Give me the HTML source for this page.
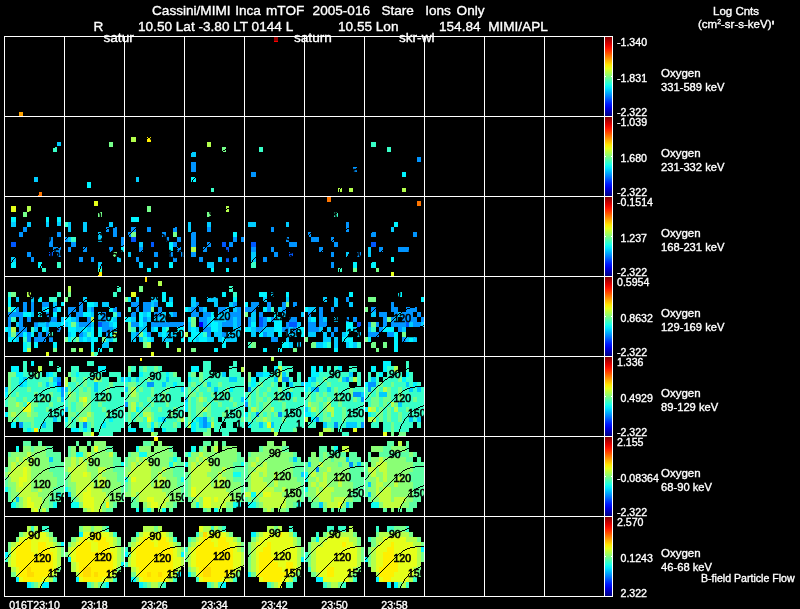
<!DOCTYPE html>
<html><head><meta charset="utf-8"><title>Cassini/MIMI Inca mTOF</title>
<style>
html,body{margin:0;padding:0;background:#000;}
body{width:800px;height:609px;position:relative;overflow:hidden;font-family:"Liberation Sans",sans-serif;color:#fff;}
.t{position:absolute;white-space:pre;line-height:1;-webkit-text-stroke:0.35px #fff;}
.t sup.p{font-size:110%;top:0.12em;font-weight:bold}
.t sup{font-size:60%;line-height:0;vertical-align:baseline;position:relative;top:-0.55em}
svg text{font-family:"Liberation Sans",sans-serif;}
#txt{position:absolute;left:0;top:0;width:800px;height:609px;will-change:transform;}
</style></head><body>
<svg width="800" height="609" viewBox="0 0 800 609" shape-rendering="crispEdges" style="position:absolute;left:0;top:0;will-change:transform"><defs><linearGradient id="jet" x1="0" y1="0" x2="0" y2="1"><stop offset="0.000" stop-color="#800000"/><stop offset="0.050" stop-color="#b30000"/><stop offset="0.100" stop-color="#e50000"/><stop offset="0.150" stop-color="#ff1a00"/><stop offset="0.200" stop-color="#ff4c00"/><stop offset="0.250" stop-color="#ff8000"/><stop offset="0.300" stop-color="#ffb300"/><stop offset="0.350" stop-color="#ffe500"/><stop offset="0.400" stop-color="#e5ff1a"/><stop offset="0.450" stop-color="#b3ff4c"/><stop offset="0.500" stop-color="#80ff80"/><stop offset="0.550" stop-color="#4cffb3"/><stop offset="0.600" stop-color="#1affe5"/><stop offset="0.650" stop-color="#00e5ff"/><stop offset="0.700" stop-color="#00b3ff"/><stop offset="0.750" stop-color="#0080ff"/><stop offset="0.800" stop-color="#004cff"/><stop offset="0.850" stop-color="#001aff"/><stop offset="0.900" stop-color="#0000e5"/><stop offset="0.950" stop-color="#0000b3"/><stop offset="1.000" stop-color="#000080"/></linearGradient></defs>
<rect x="145" y="277" width="2" height="5" fill="#ffdb00"/>
<rect x="140" y="358" width="2" height="3" fill="#fff000"/>
<rect x="274" y="41" width="4" height="1" fill="#fa0000"/>
<rect x="327" y="201" width="4" height="1" fill="#ff7500"/>
<rect x="19" y="112" width="4" height="4" fill="#ffa300"/>
<rect x="274" y="36" width="4" height="5" fill="#940000"/>
<rect x="57" y="142" width="4" height="5" fill="#00ccff"/>
<rect x="53" y="147" width="4" height="5" fill="#38ffc7"/>
<rect x="34" y="177" width="4" height="5" fill="#00ccff"/>
<rect x="38" y="192" width="4" height="4" fill="#ff7500"/>
<rect x="109" y="142" width="4" height="5" fill="#75ff8a"/>
<rect x="87" y="182" width="4" height="6" fill="#00f5ff"/>
<rect x="131" y="137" width="5" height="5" fill="#b3ff4c"/>
<rect x="147" y="137" width="4" height="5" fill="#fff000"/>
<rect x="136" y="177" width="3" height="5" fill="#00ccff"/>
<rect x="207" y="142" width="4" height="5" fill="#b3ff4c"/>
<rect x="222" y="147" width="4" height="5" fill="#75ff8a"/>
<rect x="191" y="152" width="5" height="5" fill="#00ccff"/>
<rect x="191" y="162" width="5" height="5" fill="#0094ff"/>
<rect x="191" y="167" width="5" height="5" fill="#0094ff"/>
<rect x="191" y="177" width="5" height="5" fill="#00f5ff"/>
<rect x="211" y="188" width="3" height="4" fill="#38ffc7"/>
<rect x="259" y="147" width="4" height="5" fill="#38ffc7"/>
<rect x="251" y="172" width="5" height="5" fill="#0094ff"/>
<rect x="353" y="167" width="4" height="5" fill="#0094ff"/>
<rect x="338" y="188" width="4" height="4" fill="#b3ff4c"/>
<rect x="349" y="188" width="4" height="4" fill="#b3ff4c"/>
<rect x="371" y="142" width="5" height="5" fill="#38ffc7"/>
<rect x="387" y="147" width="4" height="5" fill="#38ffc7"/>
<rect x="417" y="157" width="4" height="5" fill="#0094ff"/>
<rect x="402" y="172" width="4" height="5" fill="#00f5ff"/>
<rect x="402" y="188" width="4" height="4" fill="#b3ff4c"/>
<rect x="11" y="206" width="5" height="6" fill="#e5ff1a"/>
<rect x="27" y="206" width="4" height="6" fill="#b3ff4c"/>
<rect x="23" y="212" width="4" height="5" fill="#75ff8a"/>
<rect x="11" y="217" width="5" height="5" fill="#00f5ff"/>
<rect x="46" y="217" width="3" height="5" fill="#00f5ff"/>
<rect x="57" y="217" width="4" height="5" fill="#00f5ff"/>
<rect x="11" y="222" width="5" height="5" fill="#00ccff"/>
<rect x="27" y="222" width="4" height="5" fill="#00ccff"/>
<rect x="46" y="222" width="3" height="5" fill="#00ccff"/>
<rect x="57" y="222" width="4" height="5" fill="#00ccff"/>
<rect x="23" y="227" width="4" height="5" fill="#0094ff"/>
<rect x="19" y="232" width="4" height="5" fill="#0094ff"/>
<rect x="57" y="232" width="4" height="5" fill="#0094ff"/>
<rect x="49" y="237" width="4" height="5" fill="#0094ff"/>
<rect x="11" y="242" width="5" height="5" fill="#0057ff"/>
<rect x="49" y="242" width="4" height="5" fill="#0094ff"/>
<rect x="53" y="247" width="8" height="5" fill="#0094ff"/>
<rect x="27" y="252" width="4" height="5" fill="#0094ff"/>
<rect x="49" y="252" width="4" height="5" fill="#0057ff"/>
<rect x="57" y="252" width="4" height="5" fill="#0094ff"/>
<rect x="11" y="257" width="5" height="5" fill="#00ccff"/>
<rect x="31" y="257" width="3" height="5" fill="#0094ff"/>
<rect x="11" y="262" width="5" height="6" fill="#00f5ff"/>
<rect x="38" y="262" width="4" height="6" fill="#00f5ff"/>
<rect x="57" y="262" width="4" height="6" fill="#38ffc7"/>
<rect x="42" y="268" width="4" height="4" fill="#38ffc7"/>
<rect x="94" y="201" width="4" height="5" fill="#e5ff1a"/>
<rect x="98" y="212" width="4" height="5" fill="#75ff8a"/>
<rect x="64" y="222" width="4" height="5" fill="#38ffc7"/>
<rect x="68" y="222" width="3" height="5" fill="#00ccff"/>
<rect x="83" y="222" width="4" height="5" fill="#00ccff"/>
<rect x="109" y="222" width="4" height="5" fill="#00ccff"/>
<rect x="68" y="227" width="3" height="5" fill="#00ccff"/>
<rect x="83" y="227" width="4" height="5" fill="#00ccff"/>
<rect x="106" y="227" width="3" height="5" fill="#0094ff"/>
<rect x="113" y="227" width="4" height="5" fill="#0094ff"/>
<rect x="98" y="232" width="4" height="5" fill="#00ccff"/>
<rect x="113" y="232" width="4" height="5" fill="#0094ff"/>
<rect x="64" y="237" width="4" height="5" fill="#0094ff"/>
<rect x="68" y="237" width="3" height="5" fill="#00ccff"/>
<rect x="71" y="237" width="5" height="5" fill="#38ffc7"/>
<rect x="98" y="237" width="4" height="5" fill="#00ccff"/>
<rect x="121" y="237" width="3" height="5" fill="#0094ff"/>
<rect x="71" y="242" width="5" height="5" fill="#0094ff"/>
<rect x="121" y="242" width="3" height="5" fill="#0094ff"/>
<rect x="68" y="247" width="3" height="5" fill="#0094ff"/>
<rect x="83" y="247" width="4" height="5" fill="#0094ff"/>
<rect x="109" y="247" width="4" height="5" fill="#0094ff"/>
<rect x="121" y="247" width="3" height="5" fill="#00f5ff"/>
<rect x="113" y="252" width="4" height="5" fill="#75ff8a"/>
<rect x="79" y="257" width="4" height="5" fill="#0094ff"/>
<rect x="91" y="257" width="3" height="5" fill="#0094ff"/>
<rect x="117" y="257" width="4" height="5" fill="#00ccff"/>
<rect x="98" y="262" width="4" height="6" fill="#00ccff"/>
<rect x="98" y="268" width="4" height="4" fill="#38ffc7"/>
<rect x="98" y="272" width="4" height="4" fill="#fff000"/>
<rect x="147" y="206" width="4" height="6" fill="#75ff8a"/>
<rect x="131" y="217" width="8" height="5" fill="#00f5ff"/>
<rect x="131" y="227" width="5" height="5" fill="#0094ff"/>
<rect x="147" y="227" width="4" height="5" fill="#0094ff"/>
<rect x="173" y="227" width="4" height="5" fill="#0094ff"/>
<rect x="128" y="232" width="3" height="5" fill="#0094ff"/>
<rect x="131" y="232" width="5" height="5" fill="#75ff8a"/>
<rect x="162" y="232" width="4" height="5" fill="#0094ff"/>
<rect x="173" y="232" width="4" height="5" fill="#75ff8a"/>
<rect x="131" y="237" width="5" height="5" fill="#0057ff"/>
<rect x="166" y="237" width="3" height="5" fill="#0094ff"/>
<rect x="177" y="237" width="4" height="5" fill="#0094ff"/>
<rect x="139" y="242" width="4" height="5" fill="#00ccff"/>
<rect x="151" y="242" width="3" height="5" fill="#0057ff"/>
<rect x="169" y="242" width="4" height="5" fill="#00f5ff"/>
<rect x="173" y="242" width="4" height="5" fill="#0094ff"/>
<rect x="139" y="247" width="4" height="5" fill="#0094ff"/>
<rect x="169" y="247" width="4" height="5" fill="#00f5ff"/>
<rect x="177" y="247" width="4" height="5" fill="#0094ff"/>
<rect x="128" y="252" width="3" height="5" fill="#00ccff"/>
<rect x="154" y="252" width="4" height="5" fill="#0094ff"/>
<rect x="169" y="252" width="4" height="5" fill="#0094ff"/>
<rect x="181" y="252" width="3" height="5" fill="#0094ff"/>
<rect x="136" y="257" width="3" height="5" fill="#0094ff"/>
<rect x="173" y="257" width="4" height="5" fill="#0094ff"/>
<rect x="139" y="262" width="4" height="6" fill="#00ccff"/>
<rect x="154" y="262" width="4" height="6" fill="#00ccff"/>
<rect x="169" y="262" width="4" height="6" fill="#00f5ff"/>
<rect x="147" y="268" width="4" height="4" fill="#00f5ff"/>
<rect x="226" y="206" width="3" height="6" fill="#b3ff4c"/>
<rect x="207" y="212" width="4" height="5" fill="#75ff8a"/>
<rect x="188" y="222" width="3" height="5" fill="#00ccff"/>
<rect x="207" y="222" width="4" height="5" fill="#00ccff"/>
<rect x="188" y="227" width="3" height="5" fill="#00ccff"/>
<rect x="207" y="227" width="4" height="5" fill="#0094ff"/>
<rect x="191" y="232" width="5" height="5" fill="#0094ff"/>
<rect x="233" y="232" width="4" height="5" fill="#00f5ff"/>
<rect x="191" y="237" width="5" height="5" fill="#0094ff"/>
<rect x="233" y="237" width="4" height="5" fill="#0094ff"/>
<rect x="241" y="237" width="3" height="5" fill="#0094ff"/>
<rect x="191" y="242" width="5" height="5" fill="#0094ff"/>
<rect x="207" y="242" width="4" height="5" fill="#0094ff"/>
<rect x="222" y="242" width="4" height="5" fill="#0057ff"/>
<rect x="229" y="242" width="4" height="5" fill="#0094ff"/>
<rect x="191" y="247" width="5" height="5" fill="#b3ff4c"/>
<rect x="203" y="247" width="4" height="5" fill="#0094ff"/>
<rect x="226" y="247" width="3" height="5" fill="#0057ff"/>
<rect x="191" y="252" width="5" height="5" fill="#0094ff"/>
<rect x="199" y="257" width="4" height="5" fill="#0094ff"/>
<rect x="218" y="257" width="4" height="5" fill="#00ccff"/>
<rect x="226" y="257" width="3" height="5" fill="#0057ff"/>
<rect x="233" y="257" width="4" height="5" fill="#0094ff"/>
<rect x="207" y="262" width="7" height="6" fill="#00ccff"/>
<rect x="211" y="268" width="3" height="4" fill="#00f5ff"/>
<rect x="226" y="268" width="3" height="4" fill="#00f5ff"/>
<rect x="248" y="222" width="8" height="5" fill="#00ccff"/>
<rect x="286" y="222" width="3" height="5" fill="#00ccff"/>
<rect x="271" y="227" width="3" height="5" fill="#0094ff"/>
<rect x="286" y="237" width="3" height="5" fill="#0094ff"/>
<rect x="251" y="242" width="5" height="5" fill="#0057ff"/>
<rect x="289" y="242" width="8" height="5" fill="#0094ff"/>
<rect x="251" y="247" width="5" height="5" fill="#0094ff"/>
<rect x="271" y="247" width="3" height="5" fill="#0094ff"/>
<rect x="251" y="252" width="5" height="5" fill="#00ccff"/>
<rect x="274" y="252" width="4" height="5" fill="#0094ff"/>
<rect x="289" y="252" width="4" height="5" fill="#0057ff"/>
<rect x="251" y="257" width="5" height="5" fill="#00ccff"/>
<rect x="263" y="257" width="4" height="5" fill="#0094ff"/>
<rect x="251" y="262" width="5" height="6" fill="#38ffc7"/>
<rect x="327" y="196" width="4" height="5" fill="#ff7500"/>
<rect x="334" y="212" width="4" height="5" fill="#38ffc7"/>
<rect x="346" y="222" width="3" height="5" fill="#0094ff"/>
<rect x="346" y="227" width="3" height="5" fill="#0094ff"/>
<rect x="308" y="232" width="3" height="5" fill="#0094ff"/>
<rect x="311" y="237" width="8" height="5" fill="#0094ff"/>
<rect x="331" y="237" width="3" height="5" fill="#0094ff"/>
<rect x="334" y="242" width="4" height="5" fill="#0094ff"/>
<rect x="319" y="247" width="4" height="5" fill="#0094ff"/>
<rect x="331" y="252" width="3" height="5" fill="#0094ff"/>
<rect x="346" y="252" width="3" height="5" fill="#00ccff"/>
<rect x="357" y="252" width="4" height="5" fill="#0094ff"/>
<rect x="331" y="262" width="3" height="6" fill="#0094ff"/>
<rect x="353" y="262" width="4" height="6" fill="#00f5ff"/>
<rect x="338" y="268" width="4" height="4" fill="#38ffc7"/>
<rect x="353" y="268" width="4" height="4" fill="#75ff8a"/>
<rect x="417" y="201" width="4" height="5" fill="#ff7500"/>
<rect x="394" y="222" width="4" height="5" fill="#00f5ff"/>
<rect x="391" y="227" width="3" height="5" fill="#00ccff"/>
<rect x="371" y="232" width="5" height="5" fill="#0094ff"/>
<rect x="413" y="232" width="4" height="5" fill="#0094ff"/>
<rect x="371" y="242" width="5" height="5" fill="#0057ff"/>
<rect x="368" y="247" width="3" height="5" fill="#00ccff"/>
<rect x="379" y="247" width="4" height="5" fill="#0094ff"/>
<rect x="398" y="247" width="11" height="5" fill="#0094ff"/>
<rect x="368" y="252" width="3" height="5" fill="#00ccff"/>
<rect x="391" y="257" width="3" height="5" fill="#00f5ff"/>
<rect x="371" y="262" width="5" height="6" fill="#00f5ff"/>
<rect x="376" y="268" width="3" height="4" fill="#75ff8a"/>
<rect x="391" y="272" width="3" height="4" fill="#e5ff1a"/>
<rect x="8" y="292" width="3" height="5" fill="#38ffc7"/>
<rect x="11" y="292" width="5" height="5" fill="#75ff8a"/>
<rect x="27" y="292" width="4" height="5" fill="#b3ff4c"/>
<rect x="57" y="292" width="4" height="5" fill="#38ffc7"/>
<rect x="8" y="297" width="3" height="5" fill="#00f5ff"/>
<rect x="16" y="297" width="3" height="5" fill="#00ccff"/>
<rect x="31" y="297" width="3" height="5" fill="#00ccff"/>
<rect x="38" y="297" width="4" height="5" fill="#00f5ff"/>
<rect x="49" y="297" width="8" height="5" fill="#38ffc7"/>
<rect x="8" y="302" width="3" height="5" fill="#00f5ff"/>
<rect x="23" y="302" width="4" height="5" fill="#0094ff"/>
<rect x="31" y="302" width="3" height="5" fill="#0094ff"/>
<rect x="42" y="302" width="7" height="5" fill="#0094ff"/>
<rect x="53" y="302" width="4" height="5" fill="#00ccff"/>
<rect x="61" y="302" width="3" height="5" fill="#00f5ff"/>
<rect x="8" y="307" width="3" height="5" fill="#75ff8a"/>
<rect x="11" y="307" width="5" height="5" fill="#00f5ff"/>
<rect x="16" y="307" width="3" height="5" fill="#0094ff"/>
<rect x="23" y="307" width="4" height="5" fill="#0094ff"/>
<rect x="31" y="307" width="3" height="5" fill="#0094ff"/>
<rect x="42" y="307" width="4" height="5" fill="#00ccff"/>
<rect x="46" y="307" width="3" height="5" fill="#00f5ff"/>
<rect x="53" y="307" width="4" height="5" fill="#0094ff"/>
<rect x="57" y="307" width="4" height="5" fill="#00f5ff"/>
<rect x="8" y="312" width="15" height="5" fill="#0094ff"/>
<rect x="23" y="312" width="8" height="5" fill="#00f5ff"/>
<rect x="31" y="312" width="3" height="5" fill="#00ccff"/>
<rect x="38" y="312" width="4" height="5" fill="#00f5ff"/>
<rect x="46" y="312" width="3" height="5" fill="#0094ff"/>
<rect x="53" y="312" width="4" height="5" fill="#00f5ff"/>
<rect x="8" y="317" width="3" height="5" fill="#0094ff"/>
<rect x="11" y="317" width="5" height="5" fill="#38ffc7"/>
<rect x="19" y="317" width="4" height="5" fill="#0094ff"/>
<rect x="27" y="317" width="4" height="5" fill="#0094ff"/>
<rect x="49" y="317" width="8" height="5" fill="#0094ff"/>
<rect x="61" y="317" width="3" height="5" fill="#00ccff"/>
<rect x="8" y="322" width="3" height="5" fill="#0094ff"/>
<rect x="16" y="322" width="3" height="5" fill="#00ccff"/>
<rect x="19" y="322" width="4" height="5" fill="#0094ff"/>
<rect x="34" y="322" width="4" height="5" fill="#0094ff"/>
<rect x="38" y="322" width="8" height="5" fill="#00ccff"/>
<rect x="46" y="322" width="3" height="5" fill="#0094ff"/>
<rect x="49" y="322" width="12" height="5" fill="#00ccff"/>
<rect x="61" y="322" width="3" height="5" fill="#00f5ff"/>
<rect x="4" y="327" width="4" height="5" fill="#00f5ff"/>
<rect x="8" y="327" width="3" height="5" fill="#00ccff"/>
<rect x="11" y="327" width="5" height="5" fill="#b3ff4c"/>
<rect x="19" y="327" width="8" height="5" fill="#0094ff"/>
<rect x="31" y="327" width="3" height="5" fill="#38ffc7"/>
<rect x="34" y="327" width="4" height="5" fill="#00ccff"/>
<rect x="42" y="327" width="4" height="5" fill="#00f5ff"/>
<rect x="46" y="327" width="3" height="5" fill="#00ccff"/>
<rect x="57" y="327" width="4" height="5" fill="#0094ff"/>
<rect x="8" y="332" width="3" height="5" fill="#00ccff"/>
<rect x="11" y="332" width="5" height="5" fill="#75ff8a"/>
<rect x="16" y="332" width="7" height="5" fill="#0094ff"/>
<rect x="23" y="332" width="4" height="5" fill="#00f5ff"/>
<rect x="27" y="332" width="4" height="5" fill="#0094ff"/>
<rect x="31" y="332" width="3" height="5" fill="#00f5ff"/>
<rect x="38" y="332" width="4" height="5" fill="#0094ff"/>
<rect x="46" y="332" width="3" height="5" fill="#0094ff"/>
<rect x="49" y="332" width="4" height="5" fill="#38ffc7"/>
<rect x="8" y="337" width="8" height="5" fill="#00f5ff"/>
<rect x="16" y="337" width="3" height="5" fill="#00ccff"/>
<rect x="23" y="337" width="4" height="5" fill="#38ffc7"/>
<rect x="27" y="337" width="4" height="5" fill="#0094ff"/>
<rect x="34" y="337" width="12" height="5" fill="#0094ff"/>
<rect x="49" y="337" width="4" height="5" fill="#0094ff"/>
<rect x="23" y="342" width="4" height="6" fill="#00f5ff"/>
<rect x="27" y="342" width="4" height="6" fill="#38ffc7"/>
<rect x="34" y="342" width="4" height="6" fill="#00f5ff"/>
<rect x="53" y="342" width="4" height="6" fill="#00f5ff"/>
<rect x="23" y="348" width="4" height="4" fill="#00f5ff"/>
<rect x="27" y="348" width="4" height="4" fill="#b3ff4c"/>
<rect x="53" y="348" width="4" height="4" fill="#75ff8a"/>
<rect x="46" y="352" width="3" height="4" fill="#e5ff1a"/>
<rect x="68" y="286" width="3" height="6" fill="#b3ff4c"/>
<rect x="117" y="286" width="4" height="6" fill="#38ffc7"/>
<rect x="68" y="292" width="3" height="5" fill="#75ff8a"/>
<rect x="113" y="292" width="4" height="5" fill="#38ffc7"/>
<rect x="64" y="297" width="4" height="5" fill="#75ff8a"/>
<rect x="83" y="297" width="4" height="5" fill="#00ccff"/>
<rect x="79" y="302" width="4" height="5" fill="#0094ff"/>
<rect x="87" y="302" width="7" height="5" fill="#00f5ff"/>
<rect x="94" y="302" width="4" height="5" fill="#00ccff"/>
<rect x="102" y="302" width="7" height="5" fill="#00ccff"/>
<rect x="68" y="307" width="8" height="5" fill="#0094ff"/>
<rect x="79" y="307" width="4" height="5" fill="#0094ff"/>
<rect x="87" y="307" width="4" height="5" fill="#00ccff"/>
<rect x="91" y="307" width="3" height="5" fill="#0094ff"/>
<rect x="109" y="307" width="4" height="5" fill="#00f5ff"/>
<rect x="113" y="307" width="4" height="5" fill="#0094ff"/>
<rect x="68" y="312" width="3" height="5" fill="#0094ff"/>
<rect x="76" y="312" width="7" height="5" fill="#0094ff"/>
<rect x="83" y="312" width="8" height="5" fill="#00f5ff"/>
<rect x="91" y="312" width="3" height="5" fill="#00ccff"/>
<rect x="98" y="312" width="4" height="5" fill="#00ccff"/>
<rect x="102" y="312" width="4" height="5" fill="#0094ff"/>
<rect x="113" y="312" width="4" height="5" fill="#38ffc7"/>
<rect x="117" y="312" width="4" height="5" fill="#0094ff"/>
<rect x="64" y="317" width="7" height="5" fill="#00f5ff"/>
<rect x="71" y="317" width="5" height="5" fill="#00ccff"/>
<rect x="76" y="317" width="3" height="5" fill="#0094ff"/>
<rect x="87" y="317" width="4" height="5" fill="#0094ff"/>
<rect x="91" y="317" width="3" height="5" fill="#b3ff4c"/>
<rect x="98" y="317" width="4" height="5" fill="#00ccff"/>
<rect x="102" y="317" width="4" height="5" fill="#0094ff"/>
<rect x="106" y="317" width="3" height="5" fill="#00ccff"/>
<rect x="109" y="317" width="4" height="5" fill="#00f5ff"/>
<rect x="113" y="317" width="4" height="5" fill="#00ccff"/>
<rect x="64" y="322" width="4" height="5" fill="#00ccff"/>
<rect x="68" y="322" width="3" height="5" fill="#00f5ff"/>
<rect x="71" y="322" width="5" height="5" fill="#75ff8a"/>
<rect x="76" y="322" width="3" height="5" fill="#00ccff"/>
<rect x="79" y="322" width="12" height="5" fill="#0094ff"/>
<rect x="91" y="322" width="3" height="5" fill="#00ccff"/>
<rect x="98" y="322" width="4" height="5" fill="#0057ff"/>
<rect x="102" y="322" width="7" height="5" fill="#0094ff"/>
<rect x="109" y="322" width="4" height="5" fill="#00ccff"/>
<rect x="113" y="322" width="4" height="5" fill="#00f5ff"/>
<rect x="68" y="327" width="8" height="5" fill="#00f5ff"/>
<rect x="76" y="327" width="7" height="5" fill="#00ccff"/>
<rect x="83" y="327" width="4" height="5" fill="#00f5ff"/>
<rect x="87" y="327" width="4" height="5" fill="#00ccff"/>
<rect x="91" y="327" width="3" height="5" fill="#00f5ff"/>
<rect x="98" y="327" width="4" height="5" fill="#00f5ff"/>
<rect x="102" y="327" width="11" height="5" fill="#0094ff"/>
<rect x="113" y="327" width="4" height="5" fill="#00ccff"/>
<rect x="68" y="332" width="3" height="5" fill="#00ccff"/>
<rect x="71" y="332" width="5" height="5" fill="#00f5ff"/>
<rect x="79" y="332" width="4" height="5" fill="#0094ff"/>
<rect x="83" y="332" width="4" height="5" fill="#00ccff"/>
<rect x="87" y="332" width="4" height="5" fill="#38ffc7"/>
<rect x="91" y="332" width="3" height="5" fill="#00f5ff"/>
<rect x="98" y="332" width="4" height="5" fill="#00f5ff"/>
<rect x="106" y="332" width="3" height="5" fill="#0094ff"/>
<rect x="109" y="332" width="4" height="5" fill="#00f5ff"/>
<rect x="113" y="332" width="4" height="5" fill="#b3ff4c"/>
<rect x="64" y="337" width="4" height="5" fill="#75ff8a"/>
<rect x="68" y="337" width="3" height="5" fill="#00f5ff"/>
<rect x="71" y="337" width="5" height="5" fill="#38ffc7"/>
<rect x="76" y="337" width="3" height="5" fill="#75ff8a"/>
<rect x="79" y="337" width="4" height="5" fill="#00ccff"/>
<rect x="83" y="337" width="4" height="5" fill="#00f5ff"/>
<rect x="87" y="337" width="4" height="5" fill="#00ccff"/>
<rect x="91" y="337" width="7" height="5" fill="#00f5ff"/>
<rect x="102" y="337" width="4" height="5" fill="#75ff8a"/>
<rect x="106" y="337" width="3" height="5" fill="#00f5ff"/>
<rect x="109" y="337" width="4" height="5" fill="#00ccff"/>
<rect x="113" y="337" width="4" height="5" fill="#38ffc7"/>
<rect x="91" y="342" width="3" height="6" fill="#00f5ff"/>
<rect x="102" y="342" width="7" height="6" fill="#00ccff"/>
<rect x="71" y="348" width="5" height="4" fill="#75ff8a"/>
<rect x="79" y="348" width="4" height="4" fill="#b3ff4c"/>
<rect x="91" y="348" width="3" height="4" fill="#00f5ff"/>
<rect x="98" y="348" width="4" height="4" fill="#00f5ff"/>
<rect x="109" y="348" width="4" height="4" fill="#38ffc7"/>
<rect x="91" y="352" width="3" height="4" fill="#b3ff4c"/>
<rect x="94" y="352" width="4" height="4" fill="#38ffc7"/>
<rect x="158" y="281" width="4" height="5" fill="#b3ff4c"/>
<rect x="139" y="286" width="4" height="6" fill="#75ff8a"/>
<rect x="131" y="292" width="5" height="5" fill="#e5ff1a"/>
<rect x="162" y="292" width="4" height="5" fill="#00f5ff"/>
<rect x="124" y="297" width="4" height="5" fill="#75ff8a"/>
<rect x="128" y="297" width="3" height="5" fill="#00f5ff"/>
<rect x="136" y="297" width="3" height="5" fill="#00ccff"/>
<rect x="151" y="297" width="7" height="5" fill="#00ccff"/>
<rect x="162" y="297" width="4" height="5" fill="#00f5ff"/>
<rect x="169" y="297" width="4" height="5" fill="#00ccff"/>
<rect x="131" y="302" width="8" height="5" fill="#0094ff"/>
<rect x="143" y="302" width="8" height="5" fill="#0094ff"/>
<rect x="151" y="302" width="3" height="5" fill="#00ccff"/>
<rect x="154" y="302" width="4" height="5" fill="#0094ff"/>
<rect x="166" y="302" width="7" height="5" fill="#00f5ff"/>
<rect x="128" y="307" width="3" height="5" fill="#38ffc7"/>
<rect x="136" y="307" width="3" height="5" fill="#0094ff"/>
<rect x="143" y="307" width="8" height="5" fill="#0094ff"/>
<rect x="151" y="307" width="3" height="5" fill="#75ff8a"/>
<rect x="158" y="307" width="4" height="5" fill="#0094ff"/>
<rect x="131" y="312" width="5" height="5" fill="#0094ff"/>
<rect x="139" y="312" width="4" height="5" fill="#00f5ff"/>
<rect x="143" y="312" width="4" height="5" fill="#00ccff"/>
<rect x="147" y="312" width="4" height="5" fill="#00f5ff"/>
<rect x="154" y="312" width="8" height="5" fill="#0094ff"/>
<rect x="162" y="312" width="4" height="5" fill="#00ccff"/>
<rect x="169" y="312" width="4" height="5" fill="#00ccff"/>
<rect x="173" y="312" width="4" height="5" fill="#0094ff"/>
<rect x="124" y="317" width="7" height="5" fill="#00f5ff"/>
<rect x="131" y="317" width="5" height="5" fill="#00ccff"/>
<rect x="139" y="317" width="4" height="5" fill="#00f5ff"/>
<rect x="143" y="317" width="4" height="5" fill="#0094ff"/>
<rect x="147" y="317" width="4" height="5" fill="#00ccff"/>
<rect x="154" y="317" width="12" height="5" fill="#00ccff"/>
<rect x="128" y="322" width="3" height="5" fill="#75ff8a"/>
<rect x="131" y="322" width="8" height="5" fill="#0094ff"/>
<rect x="139" y="322" width="4" height="5" fill="#00f5ff"/>
<rect x="143" y="322" width="4" height="5" fill="#00ccff"/>
<rect x="151" y="322" width="33" height="5" fill="#0094ff"/>
<rect x="128" y="327" width="3" height="5" fill="#75ff8a"/>
<rect x="131" y="327" width="5" height="5" fill="#38ffc7"/>
<rect x="139" y="327" width="8" height="5" fill="#00ccff"/>
<rect x="151" y="327" width="3" height="5" fill="#00ccff"/>
<rect x="154" y="327" width="4" height="5" fill="#00f5ff"/>
<rect x="162" y="327" width="4" height="5" fill="#00f5ff"/>
<rect x="166" y="327" width="3" height="5" fill="#38ffc7"/>
<rect x="177" y="327" width="7" height="5" fill="#00f5ff"/>
<rect x="131" y="332" width="5" height="5" fill="#00ccff"/>
<rect x="136" y="332" width="3" height="5" fill="#0094ff"/>
<rect x="139" y="332" width="4" height="5" fill="#75ff8a"/>
<rect x="143" y="332" width="4" height="5" fill="#00f5ff"/>
<rect x="147" y="332" width="4" height="5" fill="#0094ff"/>
<rect x="158" y="332" width="4" height="5" fill="#00ccff"/>
<rect x="162" y="332" width="4" height="5" fill="#00f5ff"/>
<rect x="166" y="332" width="11" height="5" fill="#00ccff"/>
<rect x="181" y="332" width="3" height="5" fill="#00f5ff"/>
<rect x="131" y="337" width="5" height="5" fill="#00ccff"/>
<rect x="139" y="337" width="4" height="5" fill="#00ccff"/>
<rect x="143" y="337" width="4" height="5" fill="#38ffc7"/>
<rect x="147" y="337" width="4" height="5" fill="#00f5ff"/>
<rect x="151" y="337" width="3" height="5" fill="#00ccff"/>
<rect x="162" y="337" width="11" height="5" fill="#00ccff"/>
<rect x="181" y="337" width="3" height="5" fill="#00f5ff"/>
<rect x="143" y="342" width="4" height="6" fill="#75ff8a"/>
<rect x="147" y="342" width="4" height="6" fill="#b3ff4c"/>
<rect x="166" y="342" width="3" height="6" fill="#38ffc7"/>
<rect x="177" y="348" width="4" height="4" fill="#b3ff4c"/>
<rect x="151" y="352" width="3" height="4" fill="#e5ff1a"/>
<rect x="229" y="286" width="4" height="6" fill="#38ffc7"/>
<rect x="222" y="292" width="4" height="5" fill="#00f5ff"/>
<rect x="233" y="292" width="4" height="5" fill="#38ffc7"/>
<rect x="191" y="297" width="5" height="5" fill="#00ccff"/>
<rect x="207" y="297" width="11" height="5" fill="#00ccff"/>
<rect x="233" y="297" width="4" height="5" fill="#00f5ff"/>
<rect x="191" y="302" width="5" height="5" fill="#00ccff"/>
<rect x="196" y="302" width="3" height="5" fill="#0094ff"/>
<rect x="214" y="302" width="4" height="5" fill="#00ccff"/>
<rect x="229" y="302" width="4" height="5" fill="#00ccff"/>
<rect x="233" y="302" width="4" height="5" fill="#0094ff"/>
<rect x="184" y="307" width="4" height="5" fill="#00f5ff"/>
<rect x="188" y="307" width="3" height="5" fill="#00ccff"/>
<rect x="191" y="307" width="5" height="5" fill="#0094ff"/>
<rect x="199" y="307" width="4" height="5" fill="#0094ff"/>
<rect x="203" y="307" width="4" height="5" fill="#00ccff"/>
<rect x="218" y="307" width="8" height="5" fill="#0094ff"/>
<rect x="226" y="307" width="3" height="5" fill="#00ccff"/>
<rect x="233" y="307" width="4" height="5" fill="#00ccff"/>
<rect x="237" y="307" width="4" height="5" fill="#0094ff"/>
<rect x="191" y="312" width="8" height="5" fill="#0094ff"/>
<rect x="203" y="312" width="8" height="5" fill="#0094ff"/>
<rect x="211" y="312" width="3" height="5" fill="#00f5ff"/>
<rect x="218" y="312" width="11" height="5" fill="#00ccff"/>
<rect x="229" y="312" width="12" height="5" fill="#0094ff"/>
<rect x="188" y="317" width="3" height="5" fill="#00f5ff"/>
<rect x="191" y="317" width="5" height="5" fill="#75ff8a"/>
<rect x="199" y="317" width="8" height="5" fill="#0094ff"/>
<rect x="207" y="317" width="4" height="5" fill="#00ccff"/>
<rect x="211" y="317" width="3" height="5" fill="#00f5ff"/>
<rect x="214" y="317" width="12" height="5" fill="#00ccff"/>
<rect x="226" y="317" width="7" height="5" fill="#0094ff"/>
<rect x="233" y="317" width="4" height="5" fill="#00ccff"/>
<rect x="237" y="317" width="4" height="5" fill="#0094ff"/>
<rect x="188" y="322" width="3" height="5" fill="#00ccff"/>
<rect x="191" y="322" width="5" height="5" fill="#75ff8a"/>
<rect x="199" y="322" width="4" height="5" fill="#0000fa"/>
<rect x="203" y="322" width="4" height="5" fill="#0094ff"/>
<rect x="207" y="322" width="4" height="5" fill="#00ccff"/>
<rect x="211" y="322" width="7" height="5" fill="#00f5ff"/>
<rect x="218" y="322" width="4" height="5" fill="#00ccff"/>
<rect x="222" y="322" width="11" height="5" fill="#0094ff"/>
<rect x="233" y="322" width="4" height="5" fill="#00ccff"/>
<rect x="237" y="322" width="4" height="5" fill="#0094ff"/>
<rect x="188" y="327" width="3" height="5" fill="#00ccff"/>
<rect x="191" y="327" width="5" height="5" fill="#00f5ff"/>
<rect x="196" y="327" width="3" height="5" fill="#00ccff"/>
<rect x="203" y="327" width="8" height="5" fill="#0094ff"/>
<rect x="211" y="327" width="7" height="5" fill="#00f5ff"/>
<rect x="218" y="327" width="4" height="5" fill="#00ccff"/>
<rect x="233" y="327" width="8" height="5" fill="#00ccff"/>
<rect x="184" y="332" width="4" height="5" fill="#b3ff4c"/>
<rect x="191" y="332" width="12" height="5" fill="#00f5ff"/>
<rect x="203" y="332" width="4" height="5" fill="#38ffc7"/>
<rect x="207" y="332" width="4" height="5" fill="#0094ff"/>
<rect x="214" y="332" width="8" height="5" fill="#00ccff"/>
<rect x="222" y="332" width="4" height="5" fill="#0094ff"/>
<rect x="226" y="332" width="15" height="5" fill="#00ccff"/>
<rect x="188" y="337" width="8" height="5" fill="#00f5ff"/>
<rect x="196" y="337" width="3" height="5" fill="#00ccff"/>
<rect x="199" y="337" width="8" height="5" fill="#00f5ff"/>
<rect x="207" y="337" width="7" height="5" fill="#00ccff"/>
<rect x="218" y="337" width="4" height="5" fill="#00ccff"/>
<rect x="222" y="337" width="4" height="5" fill="#00f5ff"/>
<rect x="226" y="337" width="11" height="5" fill="#00ccff"/>
<rect x="222" y="342" width="4" height="6" fill="#00f5ff"/>
<rect x="191" y="348" width="5" height="4" fill="#75ff8a"/>
<rect x="214" y="348" width="4" height="4" fill="#00f5ff"/>
<rect x="259" y="292" width="8" height="5" fill="#00f5ff"/>
<rect x="271" y="292" width="3" height="5" fill="#00ccff"/>
<rect x="286" y="292" width="3" height="5" fill="#00f5ff"/>
<rect x="263" y="297" width="4" height="5" fill="#00ccff"/>
<rect x="286" y="297" width="3" height="5" fill="#00ccff"/>
<rect x="244" y="302" width="4" height="5" fill="#00f5ff"/>
<rect x="251" y="302" width="8" height="5" fill="#0094ff"/>
<rect x="267" y="302" width="4" height="5" fill="#0094ff"/>
<rect x="282" y="302" width="4" height="5" fill="#0094ff"/>
<rect x="286" y="302" width="3" height="5" fill="#75ff8a"/>
<rect x="293" y="302" width="4" height="5" fill="#0094ff"/>
<rect x="244" y="307" width="12" height="5" fill="#0094ff"/>
<rect x="263" y="307" width="4" height="5" fill="#00f5ff"/>
<rect x="267" y="307" width="4" height="5" fill="#0094ff"/>
<rect x="271" y="307" width="3" height="5" fill="#38ffc7"/>
<rect x="278" y="307" width="4" height="5" fill="#00ccff"/>
<rect x="282" y="307" width="4" height="5" fill="#0094ff"/>
<rect x="244" y="312" width="4" height="5" fill="#75ff8a"/>
<rect x="251" y="312" width="5" height="5" fill="#00ccff"/>
<rect x="259" y="312" width="4" height="5" fill="#0094ff"/>
<rect x="274" y="312" width="4" height="5" fill="#00f5ff"/>
<rect x="282" y="312" width="4" height="5" fill="#00ccff"/>
<rect x="301" y="312" width="3" height="5" fill="#00ccff"/>
<rect x="248" y="317" width="3" height="5" fill="#0094ff"/>
<rect x="251" y="317" width="5" height="5" fill="#00ccff"/>
<rect x="259" y="317" width="4" height="5" fill="#0057ff"/>
<rect x="263" y="317" width="4" height="5" fill="#0094ff"/>
<rect x="267" y="317" width="4" height="5" fill="#00f5ff"/>
<rect x="271" y="317" width="3" height="5" fill="#0094ff"/>
<rect x="274" y="317" width="8" height="5" fill="#00f5ff"/>
<rect x="289" y="317" width="8" height="5" fill="#0094ff"/>
<rect x="248" y="322" width="3" height="5" fill="#0094ff"/>
<rect x="251" y="322" width="5" height="5" fill="#00f5ff"/>
<rect x="259" y="322" width="4" height="5" fill="#0057ff"/>
<rect x="263" y="322" width="4" height="5" fill="#0094ff"/>
<rect x="274" y="322" width="8" height="5" fill="#00f5ff"/>
<rect x="286" y="322" width="3" height="5" fill="#0094ff"/>
<rect x="289" y="322" width="8" height="5" fill="#0057ff"/>
<rect x="297" y="322" width="4" height="5" fill="#00ccff"/>
<rect x="244" y="327" width="7" height="5" fill="#00f5ff"/>
<rect x="251" y="327" width="5" height="5" fill="#00ccff"/>
<rect x="256" y="327" width="7" height="5" fill="#0094ff"/>
<rect x="263" y="327" width="11" height="5" fill="#00ccff"/>
<rect x="274" y="327" width="8" height="5" fill="#00f5ff"/>
<rect x="282" y="327" width="7" height="5" fill="#0094ff"/>
<rect x="289" y="327" width="4" height="5" fill="#00ccff"/>
<rect x="293" y="327" width="4" height="5" fill="#0094ff"/>
<rect x="297" y="327" width="7" height="5" fill="#00f5ff"/>
<rect x="251" y="332" width="5" height="5" fill="#00ccff"/>
<rect x="259" y="332" width="4" height="5" fill="#00f5ff"/>
<rect x="263" y="332" width="4" height="5" fill="#0094ff"/>
<rect x="267" y="332" width="7" height="5" fill="#00ccff"/>
<rect x="278" y="332" width="4" height="5" fill="#00f5ff"/>
<rect x="286" y="332" width="11" height="5" fill="#00ccff"/>
<rect x="301" y="332" width="3" height="5" fill="#00f5ff"/>
<rect x="271" y="337" width="7" height="5" fill="#0094ff"/>
<rect x="286" y="337" width="3" height="5" fill="#00ccff"/>
<rect x="248" y="342" width="3" height="6" fill="#38ffc7"/>
<rect x="251" y="342" width="5" height="6" fill="#75ff8a"/>
<rect x="282" y="342" width="7" height="6" fill="#00f5ff"/>
<rect x="289" y="342" width="4" height="6" fill="#00ccff"/>
<rect x="297" y="342" width="4" height="6" fill="#00ccff"/>
<rect x="263" y="348" width="4" height="4" fill="#00f5ff"/>
<rect x="278" y="348" width="4" height="4" fill="#00f5ff"/>
<rect x="293" y="348" width="4" height="4" fill="#75ff8a"/>
<rect x="349" y="292" width="4" height="5" fill="#00f5ff"/>
<rect x="323" y="297" width="4" height="5" fill="#00ccff"/>
<rect x="334" y="297" width="4" height="5" fill="#00ccff"/>
<rect x="346" y="297" width="3" height="5" fill="#0094ff"/>
<rect x="334" y="302" width="4" height="5" fill="#00ccff"/>
<rect x="349" y="302" width="4" height="5" fill="#00ccff"/>
<rect x="304" y="307" width="4" height="5" fill="#00f5ff"/>
<rect x="308" y="307" width="8" height="5" fill="#00ccff"/>
<rect x="319" y="307" width="4" height="5" fill="#0094ff"/>
<rect x="331" y="307" width="3" height="5" fill="#0094ff"/>
<rect x="308" y="312" width="3" height="5" fill="#0094ff"/>
<rect x="319" y="312" width="4" height="5" fill="#0094ff"/>
<rect x="308" y="317" width="3" height="5" fill="#00ccff"/>
<rect x="311" y="317" width="5" height="5" fill="#00f5ff"/>
<rect x="319" y="317" width="4" height="5" fill="#0094ff"/>
<rect x="323" y="317" width="4" height="5" fill="#00ccff"/>
<rect x="334" y="317" width="4" height="5" fill="#00ccff"/>
<rect x="346" y="317" width="3" height="5" fill="#0094ff"/>
<rect x="353" y="317" width="4" height="5" fill="#0094ff"/>
<rect x="308" y="322" width="8" height="5" fill="#0094ff"/>
<rect x="319" y="322" width="8" height="5" fill="#0094ff"/>
<rect x="346" y="322" width="7" height="5" fill="#00f5ff"/>
<rect x="357" y="322" width="4" height="5" fill="#0057ff"/>
<rect x="308" y="327" width="11" height="5" fill="#0094ff"/>
<rect x="319" y="327" width="4" height="5" fill="#00ccff"/>
<rect x="327" y="327" width="4" height="5" fill="#00ccff"/>
<rect x="334" y="327" width="4" height="5" fill="#0094ff"/>
<rect x="346" y="327" width="7" height="5" fill="#00f5ff"/>
<rect x="353" y="327" width="4" height="5" fill="#00ccff"/>
<rect x="308" y="332" width="8" height="5" fill="#00ccff"/>
<rect x="323" y="332" width="4" height="5" fill="#00ccff"/>
<rect x="331" y="332" width="3" height="5" fill="#0094ff"/>
<rect x="342" y="332" width="4" height="5" fill="#00ccff"/>
<rect x="346" y="332" width="3" height="5" fill="#00f5ff"/>
<rect x="357" y="332" width="4" height="5" fill="#00ccff"/>
<rect x="304" y="337" width="4" height="5" fill="#75ff8a"/>
<rect x="323" y="337" width="8" height="5" fill="#00ccff"/>
<rect x="334" y="337" width="4" height="5" fill="#00ccff"/>
<rect x="342" y="337" width="11" height="5" fill="#00f5ff"/>
<rect x="311" y="342" width="5" height="6" fill="#75ff8a"/>
<rect x="316" y="342" width="7" height="6" fill="#00ccff"/>
<rect x="323" y="342" width="4" height="6" fill="#00f5ff"/>
<rect x="327" y="342" width="4" height="6" fill="#38ffc7"/>
<rect x="334" y="342" width="4" height="6" fill="#00ccff"/>
<rect x="346" y="342" width="3" height="6" fill="#00ccff"/>
<rect x="349" y="342" width="4" height="6" fill="#00f5ff"/>
<rect x="353" y="342" width="4" height="6" fill="#00ccff"/>
<rect x="357" y="342" width="4" height="6" fill="#38ffc7"/>
<rect x="334" y="348" width="4" height="4" fill="#00f5ff"/>
<rect x="398" y="292" width="4" height="5" fill="#00f5ff"/>
<rect x="368" y="297" width="8" height="5" fill="#75ff8a"/>
<rect x="421" y="297" width="3" height="5" fill="#00f5ff"/>
<rect x="391" y="302" width="3" height="5" fill="#0094ff"/>
<rect x="364" y="307" width="4" height="5" fill="#75ff8a"/>
<rect x="371" y="307" width="5" height="5" fill="#0094ff"/>
<rect x="391" y="307" width="7" height="5" fill="#0094ff"/>
<rect x="406" y="307" width="11" height="5" fill="#0094ff"/>
<rect x="371" y="312" width="5" height="5" fill="#00ccff"/>
<rect x="379" y="312" width="8" height="5" fill="#0094ff"/>
<rect x="394" y="312" width="4" height="5" fill="#0094ff"/>
<rect x="398" y="312" width="4" height="5" fill="#00ccff"/>
<rect x="402" y="312" width="11" height="5" fill="#0094ff"/>
<rect x="417" y="312" width="4" height="5" fill="#0094ff"/>
<rect x="383" y="317" width="4" height="5" fill="#0094ff"/>
<rect x="387" y="317" width="4" height="5" fill="#75ff8a"/>
<rect x="391" y="317" width="3" height="5" fill="#0094ff"/>
<rect x="394" y="317" width="4" height="5" fill="#00ccff"/>
<rect x="402" y="317" width="15" height="5" fill="#0094ff"/>
<rect x="421" y="317" width="3" height="5" fill="#0094ff"/>
<rect x="368" y="322" width="3" height="5" fill="#0094ff"/>
<rect x="371" y="322" width="5" height="5" fill="#75ff8a"/>
<rect x="376" y="322" width="3" height="5" fill="#0094ff"/>
<rect x="383" y="322" width="4" height="5" fill="#0094ff"/>
<rect x="391" y="322" width="15" height="5" fill="#0094ff"/>
<rect x="406" y="322" width="3" height="5" fill="#0057ff"/>
<rect x="409" y="322" width="4" height="5" fill="#00ccff"/>
<rect x="413" y="322" width="8" height="5" fill="#0094ff"/>
<rect x="421" y="322" width="3" height="5" fill="#00ccff"/>
<rect x="368" y="327" width="3" height="5" fill="#00ccff"/>
<rect x="371" y="327" width="5" height="5" fill="#38ffc7"/>
<rect x="379" y="327" width="4" height="5" fill="#0094ff"/>
<rect x="383" y="327" width="11" height="5" fill="#00f5ff"/>
<rect x="398" y="327" width="4" height="5" fill="#0094ff"/>
<rect x="402" y="327" width="4" height="5" fill="#00ccff"/>
<rect x="368" y="332" width="11" height="5" fill="#0094ff"/>
<rect x="387" y="332" width="7" height="5" fill="#0094ff"/>
<rect x="394" y="332" width="4" height="5" fill="#00f5ff"/>
<rect x="402" y="332" width="4" height="5" fill="#75ff8a"/>
<rect x="364" y="337" width="4" height="5" fill="#75ff8a"/>
<rect x="368" y="337" width="3" height="5" fill="#00f5ff"/>
<rect x="394" y="337" width="4" height="5" fill="#00f5ff"/>
<rect x="402" y="337" width="4" height="5" fill="#0094ff"/>
<rect x="406" y="337" width="3" height="5" fill="#00ccff"/>
<rect x="409" y="337" width="4" height="5" fill="#00f5ff"/>
<rect x="413" y="337" width="4" height="5" fill="#00ccff"/>
<rect x="371" y="342" width="5" height="6" fill="#75ff8a"/>
<rect x="383" y="342" width="4" height="6" fill="#75ff8a"/>
<rect x="394" y="342" width="4" height="6" fill="#00f5ff"/>
<rect x="376" y="348" width="3" height="4" fill="#75ff8a"/>
<rect x="394" y="348" width="4" height="4" fill="#00f5ff"/>
<rect x="23" y="361" width="4" height="5" fill="#38ffc7"/>
<rect x="31" y="361" width="3" height="5" fill="#00f5ff"/>
<rect x="49" y="361" width="4" height="5" fill="#38ffc7"/>
<rect x="11" y="366" width="8" height="6" fill="#00f5ff"/>
<rect x="23" y="366" width="4" height="6" fill="#38ffc7"/>
<rect x="38" y="366" width="4" height="6" fill="#b3ff4c"/>
<rect x="57" y="366" width="4" height="6" fill="#38ffc7"/>
<rect x="8" y="372" width="8" height="5" fill="#75ff8a"/>
<rect x="16" y="372" width="7" height="5" fill="#00f5ff"/>
<rect x="23" y="372" width="11" height="5" fill="#38ffc7"/>
<rect x="34" y="372" width="4" height="5" fill="#75ff8a"/>
<rect x="38" y="372" width="4" height="5" fill="#38ffc7"/>
<rect x="46" y="372" width="3" height="5" fill="#00ccff"/>
<rect x="49" y="372" width="4" height="5" fill="#00f5ff"/>
<rect x="53" y="372" width="4" height="5" fill="#38ffc7"/>
<rect x="8" y="377" width="3" height="5" fill="#75ff8a"/>
<rect x="11" y="377" width="8" height="5" fill="#38ffc7"/>
<rect x="19" y="377" width="4" height="5" fill="#00f5ff"/>
<rect x="23" y="377" width="4" height="5" fill="#00ccff"/>
<rect x="27" y="377" width="22" height="5" fill="#38ffc7"/>
<rect x="49" y="377" width="4" height="5" fill="#75ff8a"/>
<rect x="53" y="377" width="4" height="5" fill="#00ccff"/>
<rect x="57" y="377" width="4" height="5" fill="#0094ff"/>
<rect x="8" y="382" width="3" height="5" fill="#75ff8a"/>
<rect x="11" y="382" width="8" height="5" fill="#38ffc7"/>
<rect x="19" y="382" width="4" height="5" fill="#00ccff"/>
<rect x="23" y="382" width="4" height="5" fill="#00f5ff"/>
<rect x="27" y="382" width="11" height="5" fill="#38ffc7"/>
<rect x="38" y="382" width="4" height="5" fill="#75ff8a"/>
<rect x="42" y="382" width="4" height="5" fill="#38ffc7"/>
<rect x="46" y="382" width="3" height="5" fill="#00ccff"/>
<rect x="49" y="382" width="4" height="5" fill="#38ffc7"/>
<rect x="53" y="382" width="4" height="5" fill="#00f5ff"/>
<rect x="57" y="382" width="4" height="5" fill="#0057ff"/>
<rect x="4" y="387" width="4" height="5" fill="#00ccff"/>
<rect x="8" y="387" width="3" height="5" fill="#75ff8a"/>
<rect x="11" y="387" width="16" height="5" fill="#38ffc7"/>
<rect x="27" y="387" width="4" height="5" fill="#75ff8a"/>
<rect x="31" y="387" width="26" height="5" fill="#38ffc7"/>
<rect x="57" y="387" width="4" height="5" fill="#00f5ff"/>
<rect x="61" y="387" width="3" height="5" fill="#0094ff"/>
<rect x="4" y="392" width="4" height="5" fill="#00f5ff"/>
<rect x="8" y="392" width="3" height="5" fill="#75ff8a"/>
<rect x="11" y="392" width="5" height="5" fill="#38ffc7"/>
<rect x="16" y="392" width="3" height="5" fill="#75ff8a"/>
<rect x="19" y="392" width="15" height="5" fill="#38ffc7"/>
<rect x="34" y="392" width="4" height="5" fill="#75ff8a"/>
<rect x="38" y="392" width="11" height="5" fill="#38ffc7"/>
<rect x="49" y="392" width="4" height="5" fill="#75ff8a"/>
<rect x="53" y="392" width="8" height="5" fill="#38ffc7"/>
<rect x="61" y="392" width="3" height="5" fill="#0094ff"/>
<rect x="4" y="397" width="4" height="5" fill="#38ffc7"/>
<rect x="8" y="397" width="8" height="5" fill="#75ff8a"/>
<rect x="16" y="397" width="7" height="5" fill="#38ffc7"/>
<rect x="23" y="397" width="4" height="5" fill="#75ff8a"/>
<rect x="27" y="397" width="15" height="5" fill="#38ffc7"/>
<rect x="42" y="397" width="4" height="5" fill="#75ff8a"/>
<rect x="46" y="397" width="11" height="5" fill="#38ffc7"/>
<rect x="57" y="397" width="4" height="5" fill="#75ff8a"/>
<rect x="61" y="397" width="3" height="5" fill="#00ccff"/>
<rect x="4" y="402" width="4" height="5" fill="#38ffc7"/>
<rect x="8" y="402" width="8" height="5" fill="#75ff8a"/>
<rect x="16" y="402" width="3" height="5" fill="#b3ff4c"/>
<rect x="19" y="402" width="4" height="5" fill="#75ff8a"/>
<rect x="23" y="402" width="4" height="5" fill="#38ffc7"/>
<rect x="27" y="402" width="4" height="5" fill="#e5ff1a"/>
<rect x="31" y="402" width="7" height="5" fill="#75ff8a"/>
<rect x="38" y="402" width="11" height="5" fill="#38ffc7"/>
<rect x="49" y="402" width="4" height="5" fill="#75ff8a"/>
<rect x="53" y="402" width="11" height="5" fill="#38ffc7"/>
<rect x="8" y="407" width="15" height="5" fill="#75ff8a"/>
<rect x="23" y="407" width="8" height="5" fill="#e5ff1a"/>
<rect x="31" y="407" width="3" height="5" fill="#75ff8a"/>
<rect x="34" y="407" width="12" height="5" fill="#38ffc7"/>
<rect x="46" y="407" width="3" height="5" fill="#75ff8a"/>
<rect x="49" y="407" width="15" height="5" fill="#38ffc7"/>
<rect x="4" y="412" width="4" height="5" fill="#00f5ff"/>
<rect x="8" y="412" width="3" height="5" fill="#75ff8a"/>
<rect x="11" y="412" width="5" height="5" fill="#b3ff4c"/>
<rect x="16" y="412" width="11" height="5" fill="#75ff8a"/>
<rect x="27" y="412" width="4" height="5" fill="#b3ff4c"/>
<rect x="31" y="412" width="7" height="5" fill="#75ff8a"/>
<rect x="38" y="412" width="23" height="5" fill="#38ffc7"/>
<rect x="61" y="412" width="3" height="5" fill="#00f5ff"/>
<rect x="8" y="417" width="8" height="5" fill="#75ff8a"/>
<rect x="16" y="417" width="3" height="5" fill="#38ffc7"/>
<rect x="19" y="417" width="15" height="5" fill="#75ff8a"/>
<rect x="34" y="417" width="19" height="5" fill="#38ffc7"/>
<rect x="53" y="417" width="4" height="5" fill="#00ccff"/>
<rect x="57" y="417" width="4" height="5" fill="#38ffc7"/>
<rect x="11" y="422" width="5" height="6" fill="#00f5ff"/>
<rect x="19" y="422" width="4" height="6" fill="#0094ff"/>
<rect x="23" y="422" width="8" height="6" fill="#38ffc7"/>
<rect x="31" y="422" width="3" height="6" fill="#75ff8a"/>
<rect x="34" y="422" width="8" height="6" fill="#38ffc7"/>
<rect x="42" y="422" width="4" height="6" fill="#00ccff"/>
<rect x="46" y="422" width="7" height="6" fill="#38ffc7"/>
<rect x="23" y="428" width="4" height="4" fill="#38ffc7"/>
<rect x="27" y="428" width="4" height="4" fill="#00f5ff"/>
<rect x="31" y="428" width="3" height="4" fill="#38ffc7"/>
<rect x="34" y="428" width="4" height="4" fill="#fff000"/>
<rect x="38" y="428" width="15" height="4" fill="#38ffc7"/>
<rect x="87" y="361" width="7" height="5" fill="#38ffc7"/>
<rect x="71" y="366" width="8" height="6" fill="#38ffc7"/>
<rect x="98" y="366" width="8" height="6" fill="#00f5ff"/>
<rect x="68" y="372" width="3" height="5" fill="#75ff8a"/>
<rect x="71" y="372" width="5" height="5" fill="#38ffc7"/>
<rect x="76" y="372" width="3" height="5" fill="#00f5ff"/>
<rect x="79" y="372" width="23" height="5" fill="#38ffc7"/>
<rect x="109" y="372" width="12" height="5" fill="#38ffc7"/>
<rect x="64" y="377" width="4" height="5" fill="#b3ff4c"/>
<rect x="71" y="377" width="5" height="5" fill="#75ff8a"/>
<rect x="76" y="377" width="7" height="5" fill="#38ffc7"/>
<rect x="83" y="377" width="4" height="5" fill="#75ff8a"/>
<rect x="87" y="377" width="7" height="5" fill="#38ffc7"/>
<rect x="94" y="377" width="4" height="5" fill="#b3ff4c"/>
<rect x="98" y="377" width="4" height="5" fill="#75ff8a"/>
<rect x="102" y="377" width="7" height="5" fill="#38ffc7"/>
<rect x="117" y="377" width="4" height="5" fill="#38ffc7"/>
<rect x="121" y="377" width="3" height="5" fill="#00ccff"/>
<rect x="64" y="382" width="4" height="5" fill="#b3ff4c"/>
<rect x="68" y="382" width="8" height="5" fill="#38ffc7"/>
<rect x="76" y="382" width="3" height="5" fill="#75ff8a"/>
<rect x="79" y="382" width="4" height="5" fill="#38ffc7"/>
<rect x="83" y="382" width="4" height="5" fill="#75ff8a"/>
<rect x="87" y="382" width="7" height="5" fill="#38ffc7"/>
<rect x="94" y="382" width="4" height="5" fill="#00ccff"/>
<rect x="98" y="382" width="11" height="5" fill="#38ffc7"/>
<rect x="109" y="382" width="4" height="5" fill="#75ff8a"/>
<rect x="113" y="382" width="11" height="5" fill="#38ffc7"/>
<rect x="64" y="387" width="4" height="5" fill="#00ccff"/>
<rect x="68" y="387" width="3" height="5" fill="#75ff8a"/>
<rect x="71" y="387" width="8" height="5" fill="#38ffc7"/>
<rect x="79" y="387" width="4" height="5" fill="#75ff8a"/>
<rect x="83" y="387" width="4" height="5" fill="#38ffc7"/>
<rect x="87" y="387" width="4" height="5" fill="#75ff8a"/>
<rect x="91" y="387" width="3" height="5" fill="#38ffc7"/>
<rect x="94" y="387" width="4" height="5" fill="#00ccff"/>
<rect x="98" y="387" width="8" height="5" fill="#38ffc7"/>
<rect x="106" y="387" width="3" height="5" fill="#75ff8a"/>
<rect x="109" y="387" width="15" height="5" fill="#38ffc7"/>
<rect x="64" y="392" width="4" height="5" fill="#38ffc7"/>
<rect x="68" y="392" width="3" height="5" fill="#b3ff4c"/>
<rect x="71" y="392" width="5" height="5" fill="#75ff8a"/>
<rect x="76" y="392" width="3" height="5" fill="#38ffc7"/>
<rect x="79" y="392" width="12" height="5" fill="#75ff8a"/>
<rect x="91" y="392" width="15" height="5" fill="#38ffc7"/>
<rect x="106" y="392" width="3" height="5" fill="#75ff8a"/>
<rect x="109" y="392" width="12" height="5" fill="#38ffc7"/>
<rect x="64" y="397" width="4" height="5" fill="#38ffc7"/>
<rect x="68" y="397" width="8" height="5" fill="#75ff8a"/>
<rect x="76" y="397" width="3" height="5" fill="#38ffc7"/>
<rect x="79" y="397" width="4" height="5" fill="#b3ff4c"/>
<rect x="83" y="397" width="4" height="5" fill="#e5ff1a"/>
<rect x="87" y="397" width="4" height="5" fill="#75ff8a"/>
<rect x="91" y="397" width="11" height="5" fill="#38ffc7"/>
<rect x="102" y="397" width="4" height="5" fill="#75ff8a"/>
<rect x="106" y="397" width="18" height="5" fill="#38ffc7"/>
<rect x="64" y="402" width="4" height="5" fill="#38ffc7"/>
<rect x="68" y="402" width="3" height="5" fill="#75ff8a"/>
<rect x="71" y="402" width="5" height="5" fill="#38ffc7"/>
<rect x="76" y="402" width="7" height="5" fill="#75ff8a"/>
<rect x="83" y="402" width="4" height="5" fill="#b3ff4c"/>
<rect x="87" y="402" width="4" height="5" fill="#75ff8a"/>
<rect x="91" y="402" width="7" height="5" fill="#38ffc7"/>
<rect x="98" y="402" width="4" height="5" fill="#75ff8a"/>
<rect x="102" y="402" width="22" height="5" fill="#38ffc7"/>
<rect x="64" y="407" width="4" height="5" fill="#00ccff"/>
<rect x="68" y="407" width="3" height="5" fill="#75ff8a"/>
<rect x="71" y="407" width="5" height="5" fill="#38ffc7"/>
<rect x="76" y="407" width="15" height="5" fill="#75ff8a"/>
<rect x="91" y="407" width="11" height="5" fill="#38ffc7"/>
<rect x="102" y="407" width="4" height="5" fill="#75ff8a"/>
<rect x="106" y="407" width="18" height="5" fill="#38ffc7"/>
<rect x="68" y="412" width="8" height="5" fill="#75ff8a"/>
<rect x="76" y="412" width="3" height="5" fill="#38ffc7"/>
<rect x="79" y="412" width="8" height="5" fill="#75ff8a"/>
<rect x="87" y="412" width="4" height="5" fill="#b3ff4c"/>
<rect x="91" y="412" width="3" height="5" fill="#75ff8a"/>
<rect x="94" y="412" width="12" height="5" fill="#38ffc7"/>
<rect x="106" y="412" width="3" height="5" fill="#75ff8a"/>
<rect x="109" y="412" width="15" height="5" fill="#38ffc7"/>
<rect x="64" y="417" width="4" height="5" fill="#00f5ff"/>
<rect x="68" y="417" width="3" height="5" fill="#75ff8a"/>
<rect x="71" y="417" width="5" height="5" fill="#38ffc7"/>
<rect x="76" y="417" width="3" height="5" fill="#75ff8a"/>
<rect x="79" y="417" width="4" height="5" fill="#b3ff4c"/>
<rect x="83" y="417" width="4" height="5" fill="#e5ff1a"/>
<rect x="87" y="417" width="7" height="5" fill="#75ff8a"/>
<rect x="94" y="417" width="15" height="5" fill="#38ffc7"/>
<rect x="109" y="417" width="4" height="5" fill="#00f5ff"/>
<rect x="113" y="417" width="11" height="5" fill="#38ffc7"/>
<rect x="64" y="422" width="4" height="6" fill="#38ffc7"/>
<rect x="68" y="422" width="3" height="6" fill="#75ff8a"/>
<rect x="71" y="422" width="5" height="6" fill="#38ffc7"/>
<rect x="79" y="422" width="4" height="6" fill="#38ffc7"/>
<rect x="83" y="422" width="4" height="6" fill="#0094ff"/>
<rect x="87" y="422" width="4" height="6" fill="#38ffc7"/>
<rect x="91" y="422" width="3" height="6" fill="#75ff8a"/>
<rect x="94" y="422" width="8" height="6" fill="#38ffc7"/>
<rect x="102" y="422" width="4" height="6" fill="#00f5ff"/>
<rect x="106" y="422" width="18" height="6" fill="#38ffc7"/>
<rect x="71" y="428" width="8" height="4" fill="#00f5ff"/>
<rect x="79" y="428" width="4" height="4" fill="#38ffc7"/>
<rect x="83" y="428" width="4" height="4" fill="#00f5ff"/>
<rect x="87" y="428" width="4" height="4" fill="#38ffc7"/>
<rect x="94" y="428" width="27" height="4" fill="#38ffc7"/>
<rect x="83" y="432" width="8" height="4" fill="#75ff8a"/>
<rect x="91" y="432" width="3" height="4" fill="#e5ff1a"/>
<rect x="98" y="432" width="15" height="4" fill="#38ffc7"/>
<rect x="128" y="366" width="3" height="6" fill="#75ff8a"/>
<rect x="131" y="366" width="5" height="6" fill="#38ffc7"/>
<rect x="139" y="366" width="4" height="6" fill="#38ffc7"/>
<rect x="143" y="366" width="4" height="6" fill="#75ff8a"/>
<rect x="147" y="366" width="7" height="6" fill="#38ffc7"/>
<rect x="154" y="366" width="4" height="6" fill="#75ff8a"/>
<rect x="158" y="366" width="4" height="6" fill="#38ffc7"/>
<rect x="128" y="372" width="3" height="5" fill="#38ffc7"/>
<rect x="139" y="372" width="4" height="5" fill="#00f5ff"/>
<rect x="143" y="372" width="23" height="5" fill="#38ffc7"/>
<rect x="166" y="372" width="3" height="5" fill="#00f5ff"/>
<rect x="169" y="372" width="4" height="5" fill="#38ffc7"/>
<rect x="173" y="372" width="4" height="5" fill="#75ff8a"/>
<rect x="124" y="377" width="4" height="5" fill="#00f5ff"/>
<rect x="128" y="377" width="3" height="5" fill="#00ccff"/>
<rect x="131" y="377" width="5" height="5" fill="#38ffc7"/>
<rect x="136" y="377" width="3" height="5" fill="#00ccff"/>
<rect x="139" y="377" width="8" height="5" fill="#38ffc7"/>
<rect x="147" y="377" width="4" height="5" fill="#75ff8a"/>
<rect x="151" y="377" width="15" height="5" fill="#38ffc7"/>
<rect x="166" y="377" width="3" height="5" fill="#00ccff"/>
<rect x="169" y="377" width="12" height="5" fill="#38ffc7"/>
<rect x="124" y="382" width="4" height="5" fill="#38ffc7"/>
<rect x="128" y="382" width="8" height="5" fill="#75ff8a"/>
<rect x="136" y="382" width="11" height="5" fill="#38ffc7"/>
<rect x="147" y="382" width="7" height="5" fill="#0094ff"/>
<rect x="154" y="382" width="8" height="5" fill="#38ffc7"/>
<rect x="162" y="382" width="4" height="5" fill="#00ccff"/>
<rect x="166" y="382" width="7" height="5" fill="#38ffc7"/>
<rect x="173" y="382" width="4" height="5" fill="#00f5ff"/>
<rect x="177" y="382" width="7" height="5" fill="#38ffc7"/>
<rect x="124" y="387" width="4" height="5" fill="#00ccff"/>
<rect x="128" y="387" width="3" height="5" fill="#75ff8a"/>
<rect x="131" y="387" width="5" height="5" fill="#b3ff4c"/>
<rect x="136" y="387" width="3" height="5" fill="#38ffc7"/>
<rect x="139" y="387" width="4" height="5" fill="#75ff8a"/>
<rect x="143" y="387" width="8" height="5" fill="#38ffc7"/>
<rect x="151" y="387" width="3" height="5" fill="#75ff8a"/>
<rect x="154" y="387" width="12" height="5" fill="#38ffc7"/>
<rect x="166" y="387" width="3" height="5" fill="#75ff8a"/>
<rect x="169" y="387" width="12" height="5" fill="#38ffc7"/>
<rect x="181" y="387" width="3" height="5" fill="#00ccff"/>
<rect x="124" y="392" width="4" height="5" fill="#38ffc7"/>
<rect x="128" y="392" width="3" height="5" fill="#75ff8a"/>
<rect x="131" y="392" width="5" height="5" fill="#b3ff4c"/>
<rect x="136" y="392" width="3" height="5" fill="#75ff8a"/>
<rect x="139" y="392" width="12" height="5" fill="#38ffc7"/>
<rect x="151" y="392" width="3" height="5" fill="#75ff8a"/>
<rect x="154" y="392" width="8" height="5" fill="#38ffc7"/>
<rect x="162" y="392" width="4" height="5" fill="#75ff8a"/>
<rect x="166" y="392" width="18" height="5" fill="#38ffc7"/>
<rect x="124" y="397" width="4" height="5" fill="#38ffc7"/>
<rect x="128" y="397" width="11" height="5" fill="#75ff8a"/>
<rect x="139" y="397" width="8" height="5" fill="#38ffc7"/>
<rect x="147" y="397" width="4" height="5" fill="#75ff8a"/>
<rect x="151" y="397" width="11" height="5" fill="#38ffc7"/>
<rect x="162" y="397" width="4" height="5" fill="#75ff8a"/>
<rect x="166" y="397" width="15" height="5" fill="#38ffc7"/>
<rect x="124" y="402" width="4" height="5" fill="#0094ff"/>
<rect x="128" y="402" width="3" height="5" fill="#75ff8a"/>
<rect x="131" y="402" width="5" height="5" fill="#b3ff4c"/>
<rect x="136" y="402" width="3" height="5" fill="#38ffc7"/>
<rect x="139" y="402" width="4" height="5" fill="#75ff8a"/>
<rect x="143" y="402" width="8" height="5" fill="#38ffc7"/>
<rect x="151" y="402" width="3" height="5" fill="#75ff8a"/>
<rect x="154" y="402" width="12" height="5" fill="#38ffc7"/>
<rect x="166" y="402" width="3" height="5" fill="#75ff8a"/>
<rect x="169" y="402" width="15" height="5" fill="#38ffc7"/>
<rect x="128" y="407" width="3" height="5" fill="#75ff8a"/>
<rect x="131" y="407" width="5" height="5" fill="#b3ff4c"/>
<rect x="136" y="407" width="3" height="5" fill="#00f5ff"/>
<rect x="139" y="407" width="4" height="5" fill="#38ffc7"/>
<rect x="143" y="407" width="8" height="5" fill="#75ff8a"/>
<rect x="151" y="407" width="7" height="5" fill="#38ffc7"/>
<rect x="158" y="407" width="4" height="5" fill="#75ff8a"/>
<rect x="162" y="407" width="11" height="5" fill="#38ffc7"/>
<rect x="173" y="407" width="4" height="5" fill="#75ff8a"/>
<rect x="177" y="407" width="7" height="5" fill="#38ffc7"/>
<rect x="124" y="412" width="4" height="5" fill="#38ffc7"/>
<rect x="128" y="412" width="3" height="5" fill="#75ff8a"/>
<rect x="131" y="412" width="5" height="5" fill="#38ffc7"/>
<rect x="136" y="412" width="3" height="5" fill="#75ff8a"/>
<rect x="139" y="412" width="4" height="5" fill="#38ffc7"/>
<rect x="143" y="412" width="8" height="5" fill="#b3ff4c"/>
<rect x="151" y="412" width="3" height="5" fill="#75ff8a"/>
<rect x="154" y="412" width="15" height="5" fill="#38ffc7"/>
<rect x="169" y="412" width="4" height="5" fill="#75ff8a"/>
<rect x="173" y="412" width="11" height="5" fill="#38ffc7"/>
<rect x="124" y="417" width="4" height="5" fill="#38ffc7"/>
<rect x="128" y="417" width="3" height="5" fill="#75ff8a"/>
<rect x="131" y="417" width="5" height="5" fill="#38ffc7"/>
<rect x="136" y="417" width="7" height="5" fill="#75ff8a"/>
<rect x="143" y="417" width="4" height="5" fill="#38ffc7"/>
<rect x="147" y="417" width="4" height="5" fill="#e5ff1a"/>
<rect x="151" y="417" width="3" height="5" fill="#75ff8a"/>
<rect x="154" y="417" width="4" height="5" fill="#38ffc7"/>
<rect x="158" y="417" width="4" height="5" fill="#00f5ff"/>
<rect x="162" y="417" width="4" height="5" fill="#00ccff"/>
<rect x="166" y="417" width="11" height="5" fill="#38ffc7"/>
<rect x="177" y="417" width="4" height="5" fill="#75ff8a"/>
<rect x="181" y="417" width="3" height="5" fill="#b3ff4c"/>
<rect x="128" y="422" width="3" height="6" fill="#38ffc7"/>
<rect x="139" y="422" width="8" height="6" fill="#38ffc7"/>
<rect x="147" y="422" width="4" height="6" fill="#75ff8a"/>
<rect x="151" y="422" width="3" height="6" fill="#00f5ff"/>
<rect x="154" y="422" width="4" height="6" fill="#75ff8a"/>
<rect x="158" y="422" width="15" height="6" fill="#38ffc7"/>
<rect x="173" y="422" width="4" height="6" fill="#75ff8a"/>
<rect x="177" y="422" width="4" height="6" fill="#38ffc7"/>
<rect x="128" y="428" width="8" height="4" fill="#00f5ff"/>
<rect x="143" y="428" width="8" height="4" fill="#38ffc7"/>
<rect x="151" y="428" width="3" height="4" fill="#00ccff"/>
<rect x="162" y="428" width="4" height="4" fill="#00f5ff"/>
<rect x="166" y="428" width="11" height="4" fill="#38ffc7"/>
<rect x="151" y="432" width="3" height="4" fill="#b3ff4c"/>
<rect x="154" y="432" width="4" height="4" fill="#75ff8a"/>
<rect x="203" y="361" width="8" height="5" fill="#38ffc7"/>
<rect x="233" y="361" width="4" height="5" fill="#38ffc7"/>
<rect x="191" y="366" width="8" height="6" fill="#00f5ff"/>
<rect x="203" y="366" width="8" height="6" fill="#38ffc7"/>
<rect x="229" y="366" width="8" height="6" fill="#38ffc7"/>
<rect x="241" y="366" width="3" height="6" fill="#b3ff4c"/>
<rect x="188" y="372" width="3" height="5" fill="#38ffc7"/>
<rect x="191" y="372" width="5" height="5" fill="#75ff8a"/>
<rect x="199" y="372" width="4" height="5" fill="#75ff8a"/>
<rect x="203" y="372" width="19" height="5" fill="#38ffc7"/>
<rect x="222" y="372" width="4" height="5" fill="#00ccff"/>
<rect x="229" y="372" width="12" height="5" fill="#38ffc7"/>
<rect x="188" y="377" width="3" height="5" fill="#00f5ff"/>
<rect x="191" y="377" width="8" height="5" fill="#38ffc7"/>
<rect x="199" y="377" width="4" height="5" fill="#75ff8a"/>
<rect x="203" y="377" width="26" height="5" fill="#38ffc7"/>
<rect x="229" y="377" width="8" height="5" fill="#00ccff"/>
<rect x="237" y="377" width="7" height="5" fill="#38ffc7"/>
<rect x="188" y="382" width="3" height="5" fill="#38ffc7"/>
<rect x="191" y="382" width="5" height="5" fill="#75ff8a"/>
<rect x="196" y="382" width="7" height="5" fill="#38ffc7"/>
<rect x="203" y="382" width="4" height="5" fill="#75ff8a"/>
<rect x="207" y="382" width="4" height="5" fill="#00ccff"/>
<rect x="211" y="382" width="7" height="5" fill="#38ffc7"/>
<rect x="218" y="382" width="4" height="5" fill="#75ff8a"/>
<rect x="222" y="382" width="22" height="5" fill="#38ffc7"/>
<rect x="184" y="387" width="4" height="5" fill="#38ffc7"/>
<rect x="188" y="387" width="3" height="5" fill="#75ff8a"/>
<rect x="191" y="387" width="5" height="5" fill="#38ffc7"/>
<rect x="196" y="387" width="3" height="5" fill="#75ff8a"/>
<rect x="199" y="387" width="8" height="5" fill="#38ffc7"/>
<rect x="207" y="387" width="4" height="5" fill="#75ff8a"/>
<rect x="211" y="387" width="3" height="5" fill="#38ffc7"/>
<rect x="214" y="387" width="4" height="5" fill="#00ccff"/>
<rect x="218" y="387" width="8" height="5" fill="#38ffc7"/>
<rect x="226" y="387" width="3" height="5" fill="#75ff8a"/>
<rect x="229" y="387" width="4" height="5" fill="#00f5ff"/>
<rect x="233" y="387" width="11" height="5" fill="#38ffc7"/>
<rect x="184" y="392" width="4" height="5" fill="#38ffc7"/>
<rect x="188" y="392" width="8" height="5" fill="#75ff8a"/>
<rect x="196" y="392" width="3" height="5" fill="#38ffc7"/>
<rect x="199" y="392" width="4" height="5" fill="#75ff8a"/>
<rect x="203" y="392" width="8" height="5" fill="#38ffc7"/>
<rect x="211" y="392" width="3" height="5" fill="#75ff8a"/>
<rect x="214" y="392" width="8" height="5" fill="#38ffc7"/>
<rect x="222" y="392" width="4" height="5" fill="#75ff8a"/>
<rect x="226" y="392" width="18" height="5" fill="#38ffc7"/>
<rect x="184" y="397" width="4" height="5" fill="#00ccff"/>
<rect x="188" y="397" width="3" height="5" fill="#75ff8a"/>
<rect x="191" y="397" width="5" height="5" fill="#38ffc7"/>
<rect x="196" y="397" width="3" height="5" fill="#75ff8a"/>
<rect x="199" y="397" width="4" height="5" fill="#b3ff4c"/>
<rect x="203" y="397" width="4" height="5" fill="#75ff8a"/>
<rect x="207" y="397" width="7" height="5" fill="#38ffc7"/>
<rect x="214" y="397" width="4" height="5" fill="#75ff8a"/>
<rect x="218" y="397" width="11" height="5" fill="#38ffc7"/>
<rect x="229" y="397" width="4" height="5" fill="#75ff8a"/>
<rect x="233" y="397" width="8" height="5" fill="#38ffc7"/>
<rect x="241" y="397" width="3" height="5" fill="#00ccff"/>
<rect x="184" y="402" width="4" height="5" fill="#00f5ff"/>
<rect x="188" y="402" width="3" height="5" fill="#75ff8a"/>
<rect x="191" y="402" width="5" height="5" fill="#38ffc7"/>
<rect x="196" y="402" width="7" height="5" fill="#75ff8a"/>
<rect x="203" y="402" width="4" height="5" fill="#38ffc7"/>
<rect x="207" y="402" width="4" height="5" fill="#75ff8a"/>
<rect x="211" y="402" width="7" height="5" fill="#38ffc7"/>
<rect x="218" y="402" width="4" height="5" fill="#75ff8a"/>
<rect x="222" y="402" width="11" height="5" fill="#38ffc7"/>
<rect x="233" y="402" width="4" height="5" fill="#75ff8a"/>
<rect x="237" y="402" width="7" height="5" fill="#38ffc7"/>
<rect x="184" y="407" width="4" height="5" fill="#00f5ff"/>
<rect x="188" y="407" width="3" height="5" fill="#75ff8a"/>
<rect x="191" y="407" width="5" height="5" fill="#38ffc7"/>
<rect x="196" y="407" width="7" height="5" fill="#75ff8a"/>
<rect x="203" y="407" width="4" height="5" fill="#b3ff4c"/>
<rect x="207" y="407" width="4" height="5" fill="#75ff8a"/>
<rect x="211" y="407" width="15" height="5" fill="#38ffc7"/>
<rect x="226" y="407" width="3" height="5" fill="#75ff8a"/>
<rect x="229" y="407" width="15" height="5" fill="#38ffc7"/>
<rect x="188" y="412" width="3" height="5" fill="#75ff8a"/>
<rect x="191" y="412" width="5" height="5" fill="#38ffc7"/>
<rect x="196" y="412" width="7" height="5" fill="#75ff8a"/>
<rect x="203" y="412" width="4" height="5" fill="#38ffc7"/>
<rect x="207" y="412" width="4" height="5" fill="#75ff8a"/>
<rect x="211" y="412" width="11" height="5" fill="#38ffc7"/>
<rect x="222" y="412" width="4" height="5" fill="#75ff8a"/>
<rect x="226" y="412" width="11" height="5" fill="#38ffc7"/>
<rect x="237" y="412" width="4" height="5" fill="#75ff8a"/>
<rect x="241" y="412" width="3" height="5" fill="#38ffc7"/>
<rect x="184" y="417" width="4" height="5" fill="#38ffc7"/>
<rect x="188" y="417" width="3" height="5" fill="#75ff8a"/>
<rect x="191" y="417" width="5" height="5" fill="#38ffc7"/>
<rect x="196" y="417" width="3" height="5" fill="#00f5ff"/>
<rect x="199" y="417" width="4" height="5" fill="#00ccff"/>
<rect x="203" y="417" width="4" height="5" fill="#0094ff"/>
<rect x="207" y="417" width="4" height="5" fill="#38ffc7"/>
<rect x="211" y="417" width="3" height="5" fill="#75ff8a"/>
<rect x="214" y="417" width="4" height="5" fill="#38ffc7"/>
<rect x="222" y="417" width="19" height="5" fill="#38ffc7"/>
<rect x="241" y="417" width="3" height="5" fill="#75ff8a"/>
<rect x="184" y="422" width="4" height="6" fill="#38ffc7"/>
<rect x="188" y="422" width="3" height="6" fill="#b3ff4c"/>
<rect x="191" y="422" width="5" height="6" fill="#00f5ff"/>
<rect x="196" y="422" width="3" height="6" fill="#38ffc7"/>
<rect x="199" y="422" width="4" height="6" fill="#00ccff"/>
<rect x="203" y="422" width="4" height="6" fill="#0094ff"/>
<rect x="207" y="422" width="4" height="6" fill="#00ccff"/>
<rect x="211" y="422" width="3" height="6" fill="#b3ff4c"/>
<rect x="214" y="422" width="8" height="6" fill="#38ffc7"/>
<rect x="226" y="422" width="7" height="6" fill="#38ffc7"/>
<rect x="237" y="422" width="7" height="6" fill="#38ffc7"/>
<rect x="191" y="428" width="5" height="4" fill="#00f5ff"/>
<rect x="196" y="428" width="11" height="4" fill="#38ffc7"/>
<rect x="207" y="428" width="4" height="4" fill="#75ff8a"/>
<rect x="214" y="428" width="23" height="4" fill="#38ffc7"/>
<rect x="203" y="432" width="8" height="4" fill="#75ff8a"/>
<rect x="222" y="432" width="7" height="4" fill="#38ffc7"/>
<rect x="271" y="356" width="3" height="5" fill="#b3ff4c"/>
<rect x="278" y="361" width="4" height="5" fill="#38ffc7"/>
<rect x="263" y="366" width="4" height="6" fill="#38ffc7"/>
<rect x="274" y="366" width="4" height="6" fill="#00f5ff"/>
<rect x="278" y="366" width="4" height="6" fill="#b3ff4c"/>
<rect x="282" y="366" width="11" height="6" fill="#38ffc7"/>
<rect x="248" y="372" width="3" height="5" fill="#75ff8a"/>
<rect x="256" y="372" width="7" height="5" fill="#00ccff"/>
<rect x="263" y="372" width="8" height="5" fill="#00f5ff"/>
<rect x="271" y="372" width="7" height="5" fill="#38ffc7"/>
<rect x="278" y="372" width="4" height="5" fill="#b3ff4c"/>
<rect x="282" y="372" width="4" height="5" fill="#00ccff"/>
<rect x="286" y="372" width="3" height="5" fill="#38ffc7"/>
<rect x="297" y="372" width="4" height="5" fill="#38ffc7"/>
<rect x="248" y="377" width="3" height="5" fill="#75ff8a"/>
<rect x="251" y="377" width="5" height="5" fill="#00f5ff"/>
<rect x="259" y="377" width="15" height="5" fill="#38ffc7"/>
<rect x="274" y="377" width="4" height="5" fill="#00ccff"/>
<rect x="278" y="377" width="4" height="5" fill="#b3ff4c"/>
<rect x="282" y="377" width="7" height="5" fill="#0094ff"/>
<rect x="289" y="377" width="4" height="5" fill="#38ffc7"/>
<rect x="297" y="377" width="4" height="5" fill="#38ffc7"/>
<rect x="248" y="382" width="3" height="5" fill="#38ffc7"/>
<rect x="251" y="382" width="5" height="5" fill="#00f5ff"/>
<rect x="256" y="382" width="3" height="5" fill="#38ffc7"/>
<rect x="259" y="382" width="4" height="5" fill="#75ff8a"/>
<rect x="263" y="382" width="8" height="5" fill="#38ffc7"/>
<rect x="271" y="382" width="3" height="5" fill="#75ff8a"/>
<rect x="274" y="382" width="4" height="5" fill="#38ffc7"/>
<rect x="282" y="382" width="4" height="5" fill="#38ffc7"/>
<rect x="289" y="382" width="4" height="5" fill="#00ccff"/>
<rect x="293" y="382" width="8" height="5" fill="#38ffc7"/>
<rect x="301" y="382" width="3" height="5" fill="#00ccff"/>
<rect x="248" y="387" width="3" height="5" fill="#0094ff"/>
<rect x="251" y="387" width="5" height="5" fill="#38ffc7"/>
<rect x="256" y="387" width="3" height="5" fill="#75ff8a"/>
<rect x="259" y="387" width="8" height="5" fill="#38ffc7"/>
<rect x="267" y="387" width="4" height="5" fill="#75ff8a"/>
<rect x="271" y="387" width="7" height="5" fill="#38ffc7"/>
<rect x="278" y="387" width="4" height="5" fill="#75ff8a"/>
<rect x="282" y="387" width="7" height="5" fill="#38ffc7"/>
<rect x="289" y="387" width="4" height="5" fill="#75ff8a"/>
<rect x="293" y="387" width="11" height="5" fill="#38ffc7"/>
<rect x="244" y="392" width="4" height="5" fill="#38ffc7"/>
<rect x="248" y="392" width="3" height="5" fill="#75ff8a"/>
<rect x="251" y="392" width="5" height="5" fill="#38ffc7"/>
<rect x="256" y="392" width="3" height="5" fill="#75ff8a"/>
<rect x="259" y="392" width="4" height="5" fill="#38ffc7"/>
<rect x="263" y="392" width="4" height="5" fill="#75ff8a"/>
<rect x="267" y="392" width="7" height="5" fill="#38ffc7"/>
<rect x="274" y="392" width="4" height="5" fill="#75ff8a"/>
<rect x="278" y="392" width="8" height="5" fill="#38ffc7"/>
<rect x="286" y="392" width="3" height="5" fill="#00ccff"/>
<rect x="289" y="392" width="4" height="5" fill="#00f5ff"/>
<rect x="293" y="392" width="8" height="5" fill="#38ffc7"/>
<rect x="244" y="397" width="4" height="5" fill="#00f5ff"/>
<rect x="248" y="397" width="3" height="5" fill="#75ff8a"/>
<rect x="251" y="397" width="5" height="5" fill="#38ffc7"/>
<rect x="256" y="397" width="7" height="5" fill="#75ff8a"/>
<rect x="263" y="397" width="4" height="5" fill="#38ffc7"/>
<rect x="267" y="397" width="4" height="5" fill="#75ff8a"/>
<rect x="271" y="397" width="7" height="5" fill="#38ffc7"/>
<rect x="278" y="397" width="4" height="5" fill="#75ff8a"/>
<rect x="282" y="397" width="11" height="5" fill="#38ffc7"/>
<rect x="293" y="397" width="4" height="5" fill="#75ff8a"/>
<rect x="297" y="397" width="7" height="5" fill="#38ffc7"/>
<rect x="244" y="402" width="4" height="5" fill="#0094ff"/>
<rect x="248" y="402" width="3" height="5" fill="#75ff8a"/>
<rect x="251" y="402" width="5" height="5" fill="#38ffc7"/>
<rect x="256" y="402" width="3" height="5" fill="#75ff8a"/>
<rect x="259" y="402" width="4" height="5" fill="#38ffc7"/>
<rect x="263" y="402" width="8" height="5" fill="#75ff8a"/>
<rect x="271" y="402" width="11" height="5" fill="#38ffc7"/>
<rect x="282" y="402" width="4" height="5" fill="#75ff8a"/>
<rect x="286" y="402" width="18" height="5" fill="#38ffc7"/>
<rect x="248" y="407" width="3" height="5" fill="#38ffc7"/>
<rect x="251" y="407" width="5" height="5" fill="#b3ff4c"/>
<rect x="256" y="407" width="3" height="5" fill="#75ff8a"/>
<rect x="259" y="407" width="4" height="5" fill="#38ffc7"/>
<rect x="263" y="407" width="8" height="5" fill="#75ff8a"/>
<rect x="271" y="407" width="3" height="5" fill="#b3ff4c"/>
<rect x="274" y="407" width="8" height="5" fill="#38ffc7"/>
<rect x="282" y="407" width="4" height="5" fill="#75ff8a"/>
<rect x="286" y="407" width="18" height="5" fill="#38ffc7"/>
<rect x="244" y="412" width="4" height="5" fill="#00f5ff"/>
<rect x="248" y="412" width="3" height="5" fill="#75ff8a"/>
<rect x="251" y="412" width="5" height="5" fill="#38ffc7"/>
<rect x="256" y="412" width="3" height="5" fill="#0094ff"/>
<rect x="259" y="412" width="4" height="5" fill="#75ff8a"/>
<rect x="263" y="412" width="4" height="5" fill="#38ffc7"/>
<rect x="267" y="412" width="4" height="5" fill="#75ff8a"/>
<rect x="271" y="412" width="3" height="5" fill="#38ffc7"/>
<rect x="274" y="412" width="4" height="5" fill="#75ff8a"/>
<rect x="278" y="412" width="4" height="5" fill="#0094ff"/>
<rect x="282" y="412" width="22" height="5" fill="#38ffc7"/>
<rect x="244" y="417" width="4" height="5" fill="#38ffc7"/>
<rect x="248" y="417" width="3" height="5" fill="#75ff8a"/>
<rect x="251" y="417" width="5" height="5" fill="#38ffc7"/>
<rect x="256" y="417" width="7" height="5" fill="#75ff8a"/>
<rect x="263" y="417" width="4" height="5" fill="#b3ff4c"/>
<rect x="267" y="417" width="4" height="5" fill="#75ff8a"/>
<rect x="271" y="417" width="11" height="5" fill="#38ffc7"/>
<rect x="282" y="417" width="4" height="5" fill="#75ff8a"/>
<rect x="286" y="417" width="18" height="5" fill="#38ffc7"/>
<rect x="248" y="422" width="3" height="6" fill="#00f5ff"/>
<rect x="251" y="422" width="8" height="6" fill="#38ffc7"/>
<rect x="259" y="422" width="4" height="6" fill="#00ccff"/>
<rect x="263" y="422" width="4" height="6" fill="#38ffc7"/>
<rect x="267" y="422" width="4" height="6" fill="#e5ff1a"/>
<rect x="271" y="422" width="3" height="6" fill="#00ccff"/>
<rect x="274" y="422" width="30" height="6" fill="#38ffc7"/>
<rect x="251" y="428" width="20" height="4" fill="#38ffc7"/>
<rect x="271" y="428" width="3" height="4" fill="#b3ff4c"/>
<rect x="274" y="428" width="19" height="4" fill="#38ffc7"/>
<rect x="293" y="428" width="4" height="4" fill="#75ff8a"/>
<rect x="274" y="432" width="4" height="4" fill="#b3ff4c"/>
<rect x="311" y="366" width="5" height="6" fill="#00f5ff"/>
<rect x="319" y="366" width="4" height="6" fill="#00f5ff"/>
<rect x="327" y="366" width="4" height="6" fill="#38ffc7"/>
<rect x="334" y="366" width="4" height="6" fill="#38ffc7"/>
<rect x="338" y="366" width="4" height="6" fill="#00f5ff"/>
<rect x="349" y="366" width="8" height="6" fill="#38ffc7"/>
<rect x="311" y="372" width="8" height="5" fill="#00f5ff"/>
<rect x="319" y="372" width="30" height="5" fill="#38ffc7"/>
<rect x="349" y="372" width="4" height="5" fill="#00ccff"/>
<rect x="357" y="372" width="4" height="5" fill="#38ffc7"/>
<rect x="308" y="377" width="3" height="5" fill="#00f5ff"/>
<rect x="311" y="377" width="5" height="5" fill="#00ccff"/>
<rect x="316" y="377" width="7" height="5" fill="#38ffc7"/>
<rect x="323" y="377" width="4" height="5" fill="#75ff8a"/>
<rect x="327" y="377" width="11" height="5" fill="#38ffc7"/>
<rect x="338" y="377" width="4" height="5" fill="#75ff8a"/>
<rect x="342" y="377" width="4" height="5" fill="#00ccff"/>
<rect x="346" y="377" width="3" height="5" fill="#0094ff"/>
<rect x="349" y="377" width="4" height="5" fill="#38ffc7"/>
<rect x="353" y="377" width="4" height="5" fill="#b3ff4c"/>
<rect x="357" y="377" width="4" height="5" fill="#38ffc7"/>
<rect x="304" y="382" width="7" height="5" fill="#00f5ff"/>
<rect x="311" y="382" width="5" height="5" fill="#38ffc7"/>
<rect x="316" y="382" width="3" height="5" fill="#75ff8a"/>
<rect x="319" y="382" width="8" height="5" fill="#38ffc7"/>
<rect x="327" y="382" width="4" height="5" fill="#75ff8a"/>
<rect x="331" y="382" width="18" height="5" fill="#38ffc7"/>
<rect x="357" y="382" width="4" height="5" fill="#38ffc7"/>
<rect x="304" y="387" width="4" height="5" fill="#00f5ff"/>
<rect x="308" y="387" width="3" height="5" fill="#38ffc7"/>
<rect x="311" y="387" width="5" height="5" fill="#00ccff"/>
<rect x="316" y="387" width="3" height="5" fill="#0094ff"/>
<rect x="319" y="387" width="8" height="5" fill="#38ffc7"/>
<rect x="327" y="387" width="4" height="5" fill="#00ccff"/>
<rect x="331" y="387" width="3" height="5" fill="#38ffc7"/>
<rect x="334" y="387" width="4" height="5" fill="#75ff8a"/>
<rect x="338" y="387" width="11" height="5" fill="#38ffc7"/>
<rect x="349" y="387" width="4" height="5" fill="#75ff8a"/>
<rect x="353" y="387" width="11" height="5" fill="#38ffc7"/>
<rect x="304" y="392" width="4" height="5" fill="#38ffc7"/>
<rect x="308" y="392" width="3" height="5" fill="#75ff8a"/>
<rect x="311" y="392" width="5" height="5" fill="#38ffc7"/>
<rect x="316" y="392" width="3" height="5" fill="#75ff8a"/>
<rect x="319" y="392" width="4" height="5" fill="#38ffc7"/>
<rect x="323" y="392" width="4" height="5" fill="#75ff8a"/>
<rect x="327" y="392" width="7" height="5" fill="#38ffc7"/>
<rect x="334" y="392" width="4" height="5" fill="#75ff8a"/>
<rect x="338" y="392" width="11" height="5" fill="#38ffc7"/>
<rect x="349" y="392" width="4" height="5" fill="#75ff8a"/>
<rect x="353" y="392" width="8" height="5" fill="#0094ff"/>
<rect x="361" y="392" width="3" height="5" fill="#00ccff"/>
<rect x="304" y="397" width="4" height="5" fill="#38ffc7"/>
<rect x="308" y="397" width="3" height="5" fill="#75ff8a"/>
<rect x="311" y="397" width="5" height="5" fill="#38ffc7"/>
<rect x="316" y="397" width="7" height="5" fill="#75ff8a"/>
<rect x="323" y="397" width="4" height="5" fill="#38ffc7"/>
<rect x="327" y="397" width="4" height="5" fill="#75ff8a"/>
<rect x="331" y="397" width="7" height="5" fill="#38ffc7"/>
<rect x="338" y="397" width="4" height="5" fill="#75ff8a"/>
<rect x="342" y="397" width="11" height="5" fill="#38ffc7"/>
<rect x="353" y="397" width="4" height="5" fill="#75ff8a"/>
<rect x="357" y="397" width="4" height="5" fill="#38ffc7"/>
<rect x="361" y="397" width="3" height="5" fill="#0094ff"/>
<rect x="304" y="402" width="4" height="5" fill="#38ffc7"/>
<rect x="308" y="402" width="3" height="5" fill="#b3ff4c"/>
<rect x="311" y="402" width="8" height="5" fill="#75ff8a"/>
<rect x="319" y="402" width="4" height="5" fill="#38ffc7"/>
<rect x="323" y="402" width="4" height="5" fill="#75ff8a"/>
<rect x="327" y="402" width="4" height="5" fill="#b3ff4c"/>
<rect x="331" y="402" width="7" height="5" fill="#38ffc7"/>
<rect x="338" y="402" width="4" height="5" fill="#75ff8a"/>
<rect x="342" y="402" width="22" height="5" fill="#38ffc7"/>
<rect x="304" y="407" width="4" height="5" fill="#00ccff"/>
<rect x="308" y="407" width="3" height="5" fill="#38ffc7"/>
<rect x="311" y="407" width="5" height="5" fill="#b3ff4c"/>
<rect x="316" y="407" width="3" height="5" fill="#75ff8a"/>
<rect x="319" y="407" width="4" height="5" fill="#38ffc7"/>
<rect x="323" y="407" width="4" height="5" fill="#75ff8a"/>
<rect x="327" y="407" width="7" height="5" fill="#b3ff4c"/>
<rect x="334" y="407" width="8" height="5" fill="#38ffc7"/>
<rect x="342" y="407" width="4" height="5" fill="#75ff8a"/>
<rect x="346" y="407" width="18" height="5" fill="#38ffc7"/>
<rect x="304" y="412" width="7" height="5" fill="#00f5ff"/>
<rect x="311" y="412" width="5" height="5" fill="#38ffc7"/>
<rect x="316" y="412" width="3" height="5" fill="#75ff8a"/>
<rect x="319" y="412" width="4" height="5" fill="#38ffc7"/>
<rect x="323" y="412" width="4" height="5" fill="#75ff8a"/>
<rect x="327" y="412" width="4" height="5" fill="#38ffc7"/>
<rect x="331" y="412" width="3" height="5" fill="#b3ff4c"/>
<rect x="334" y="412" width="8" height="5" fill="#38ffc7"/>
<rect x="342" y="412" width="4" height="5" fill="#75ff8a"/>
<rect x="346" y="412" width="18" height="5" fill="#38ffc7"/>
<rect x="304" y="417" width="4" height="5" fill="#b3ff4c"/>
<rect x="311" y="417" width="5" height="5" fill="#00f5ff"/>
<rect x="316" y="417" width="3" height="5" fill="#0094ff"/>
<rect x="319" y="417" width="4" height="5" fill="#38ffc7"/>
<rect x="323" y="417" width="8" height="5" fill="#75ff8a"/>
<rect x="331" y="417" width="11" height="5" fill="#38ffc7"/>
<rect x="342" y="417" width="4" height="5" fill="#75ff8a"/>
<rect x="346" y="417" width="18" height="5" fill="#38ffc7"/>
<rect x="308" y="422" width="8" height="6" fill="#38ffc7"/>
<rect x="323" y="422" width="4" height="6" fill="#00ccff"/>
<rect x="327" y="422" width="7" height="6" fill="#38ffc7"/>
<rect x="334" y="422" width="4" height="6" fill="#0094ff"/>
<rect x="338" y="422" width="8" height="6" fill="#38ffc7"/>
<rect x="346" y="422" width="11" height="6" fill="#00ccff"/>
<rect x="357" y="422" width="4" height="6" fill="#38ffc7"/>
<rect x="361" y="422" width="3" height="6" fill="#0094ff"/>
<rect x="323" y="428" width="8" height="4" fill="#b3ff4c"/>
<rect x="331" y="428" width="3" height="4" fill="#75ff8a"/>
<rect x="338" y="428" width="4" height="4" fill="#38ffc7"/>
<rect x="353" y="428" width="4" height="4" fill="#e5ff1a"/>
<rect x="319" y="432" width="4" height="4" fill="#b3ff4c"/>
<rect x="342" y="432" width="7" height="4" fill="#38ffc7"/>
<rect x="383" y="361" width="8" height="5" fill="#00f5ff"/>
<rect x="406" y="361" width="3" height="5" fill="#38ffc7"/>
<rect x="371" y="366" width="5" height="6" fill="#00f5ff"/>
<rect x="383" y="366" width="4" height="6" fill="#00f5ff"/>
<rect x="387" y="366" width="7" height="6" fill="#38ffc7"/>
<rect x="394" y="366" width="4" height="6" fill="#b3ff4c"/>
<rect x="406" y="366" width="3" height="6" fill="#38ffc7"/>
<rect x="368" y="372" width="3" height="5" fill="#38ffc7"/>
<rect x="376" y="372" width="3" height="5" fill="#38ffc7"/>
<rect x="379" y="372" width="4" height="5" fill="#00f5ff"/>
<rect x="387" y="372" width="15" height="5" fill="#38ffc7"/>
<rect x="406" y="372" width="3" height="5" fill="#00f5ff"/>
<rect x="409" y="372" width="4" height="5" fill="#38ffc7"/>
<rect x="368" y="377" width="3" height="5" fill="#38ffc7"/>
<rect x="371" y="377" width="5" height="5" fill="#00ccff"/>
<rect x="376" y="377" width="3" height="5" fill="#38ffc7"/>
<rect x="383" y="377" width="15" height="5" fill="#38ffc7"/>
<rect x="398" y="377" width="4" height="5" fill="#75ff8a"/>
<rect x="402" y="377" width="4" height="5" fill="#00f5ff"/>
<rect x="406" y="377" width="7" height="5" fill="#38ffc7"/>
<rect x="364" y="382" width="4" height="5" fill="#00f5ff"/>
<rect x="368" y="382" width="8" height="5" fill="#0094ff"/>
<rect x="376" y="382" width="3" height="5" fill="#38ffc7"/>
<rect x="379" y="382" width="4" height="5" fill="#75ff8a"/>
<rect x="383" y="382" width="8" height="5" fill="#38ffc7"/>
<rect x="391" y="382" width="3" height="5" fill="#75ff8a"/>
<rect x="394" y="382" width="12" height="5" fill="#38ffc7"/>
<rect x="406" y="382" width="3" height="5" fill="#00ccff"/>
<rect x="409" y="382" width="4" height="5" fill="#38ffc7"/>
<rect x="413" y="382" width="4" height="5" fill="#00f5ff"/>
<rect x="417" y="382" width="4" height="5" fill="#38ffc7"/>
<rect x="364" y="387" width="4" height="5" fill="#38ffc7"/>
<rect x="368" y="387" width="3" height="5" fill="#0094ff"/>
<rect x="371" y="387" width="5" height="5" fill="#38ffc7"/>
<rect x="376" y="387" width="3" height="5" fill="#75ff8a"/>
<rect x="379" y="387" width="4" height="5" fill="#38ffc7"/>
<rect x="383" y="387" width="4" height="5" fill="#b3ff4c"/>
<rect x="387" y="387" width="4" height="5" fill="#75ff8a"/>
<rect x="391" y="387" width="7" height="5" fill="#38ffc7"/>
<rect x="398" y="387" width="4" height="5" fill="#75ff8a"/>
<rect x="402" y="387" width="7" height="5" fill="#38ffc7"/>
<rect x="409" y="387" width="4" height="5" fill="#00ccff"/>
<rect x="413" y="387" width="4" height="5" fill="#38ffc7"/>
<rect x="417" y="387" width="4" height="5" fill="#00ccff"/>
<rect x="421" y="387" width="3" height="5" fill="#38ffc7"/>
<rect x="364" y="392" width="4" height="5" fill="#38ffc7"/>
<rect x="368" y="392" width="3" height="5" fill="#75ff8a"/>
<rect x="371" y="392" width="5" height="5" fill="#38ffc7"/>
<rect x="376" y="392" width="3" height="5" fill="#75ff8a"/>
<rect x="379" y="392" width="8" height="5" fill="#00ccff"/>
<rect x="387" y="392" width="4" height="5" fill="#75ff8a"/>
<rect x="391" y="392" width="7" height="5" fill="#38ffc7"/>
<rect x="398" y="392" width="4" height="5" fill="#75ff8a"/>
<rect x="402" y="392" width="22" height="5" fill="#38ffc7"/>
<rect x="364" y="397" width="7" height="5" fill="#38ffc7"/>
<rect x="371" y="397" width="8" height="5" fill="#75ff8a"/>
<rect x="379" y="397" width="4" height="5" fill="#38ffc7"/>
<rect x="383" y="397" width="8" height="5" fill="#75ff8a"/>
<rect x="391" y="397" width="7" height="5" fill="#38ffc7"/>
<rect x="398" y="397" width="4" height="5" fill="#75ff8a"/>
<rect x="402" y="397" width="11" height="5" fill="#38ffc7"/>
<rect x="413" y="397" width="4" height="5" fill="#75ff8a"/>
<rect x="417" y="397" width="7" height="5" fill="#38ffc7"/>
<rect x="368" y="402" width="3" height="5" fill="#38ffc7"/>
<rect x="371" y="402" width="8" height="5" fill="#75ff8a"/>
<rect x="379" y="402" width="4" height="5" fill="#38ffc7"/>
<rect x="383" y="402" width="4" height="5" fill="#75ff8a"/>
<rect x="387" y="402" width="4" height="5" fill="#38ffc7"/>
<rect x="391" y="402" width="3" height="5" fill="#b3ff4c"/>
<rect x="394" y="402" width="4" height="5" fill="#75ff8a"/>
<rect x="398" y="402" width="4" height="5" fill="#00ccff"/>
<rect x="402" y="402" width="22" height="5" fill="#38ffc7"/>
<rect x="364" y="407" width="4" height="5" fill="#00f5ff"/>
<rect x="368" y="407" width="3" height="5" fill="#e5ff1a"/>
<rect x="371" y="407" width="5" height="5" fill="#b3ff4c"/>
<rect x="376" y="407" width="3" height="5" fill="#38ffc7"/>
<rect x="379" y="407" width="4" height="5" fill="#75ff8a"/>
<rect x="383" y="407" width="4" height="5" fill="#38ffc7"/>
<rect x="387" y="407" width="4" height="5" fill="#75ff8a"/>
<rect x="391" y="407" width="3" height="5" fill="#38ffc7"/>
<rect x="394" y="407" width="4" height="5" fill="#b3ff4c"/>
<rect x="398" y="407" width="8" height="5" fill="#38ffc7"/>
<rect x="406" y="407" width="3" height="5" fill="#75ff8a"/>
<rect x="409" y="407" width="15" height="5" fill="#38ffc7"/>
<rect x="368" y="412" width="3" height="5" fill="#00f5ff"/>
<rect x="371" y="412" width="5" height="5" fill="#38ffc7"/>
<rect x="376" y="412" width="7" height="5" fill="#75ff8a"/>
<rect x="383" y="412" width="4" height="5" fill="#38ffc7"/>
<rect x="387" y="412" width="4" height="5" fill="#75ff8a"/>
<rect x="391" y="412" width="7" height="5" fill="#38ffc7"/>
<rect x="398" y="412" width="4" height="5" fill="#75ff8a"/>
<rect x="402" y="412" width="22" height="5" fill="#38ffc7"/>
<rect x="368" y="417" width="8" height="5" fill="#b3ff4c"/>
<rect x="376" y="417" width="3" height="5" fill="#38ffc7"/>
<rect x="379" y="417" width="4" height="5" fill="#75ff8a"/>
<rect x="383" y="417" width="4" height="5" fill="#38ffc7"/>
<rect x="387" y="417" width="4" height="5" fill="#75ff8a"/>
<rect x="391" y="417" width="7" height="5" fill="#38ffc7"/>
<rect x="398" y="417" width="4" height="5" fill="#75ff8a"/>
<rect x="402" y="417" width="7" height="5" fill="#38ffc7"/>
<rect x="409" y="417" width="4" height="5" fill="#00ccff"/>
<rect x="413" y="417" width="4" height="5" fill="#38ffc7"/>
<rect x="417" y="417" width="4" height="5" fill="#00ccff"/>
<rect x="371" y="422" width="8" height="6" fill="#38ffc7"/>
<rect x="383" y="422" width="8" height="6" fill="#38ffc7"/>
<rect x="391" y="422" width="3" height="6" fill="#75ff8a"/>
<rect x="394" y="422" width="19" height="6" fill="#38ffc7"/>
<rect x="417" y="422" width="4" height="6" fill="#38ffc7"/>
<rect x="383" y="428" width="8" height="4" fill="#38ffc7"/>
<rect x="391" y="428" width="3" height="4" fill="#75ff8a"/>
<rect x="394" y="428" width="15" height="4" fill="#38ffc7"/>
<rect x="383" y="432" width="4" height="4" fill="#e5ff1a"/>
<rect x="391" y="432" width="3" height="4" fill="#75ff8a"/>
<rect x="398" y="432" width="8" height="4" fill="#75ff8a"/>
<rect x="23" y="441" width="8" height="5" fill="#5cffa3"/>
<rect x="38" y="441" width="4" height="5" fill="#5cffa3"/>
<rect x="16" y="446" width="3" height="6" fill="#0ffff0"/>
<rect x="23" y="446" width="8" height="6" fill="#8aff75"/>
<rect x="31" y="446" width="3" height="6" fill="#5cffa3"/>
<rect x="34" y="446" width="12" height="6" fill="#8aff75"/>
<rect x="46" y="446" width="7" height="6" fill="#5cffa3"/>
<rect x="8" y="452" width="3" height="5" fill="#5cffa3"/>
<rect x="11" y="452" width="16" height="5" fill="#8aff75"/>
<rect x="27" y="452" width="4" height="5" fill="#c2ff3d"/>
<rect x="31" y="452" width="15" height="5" fill="#8aff75"/>
<rect x="46" y="452" width="15" height="5" fill="#5cffa3"/>
<rect x="8" y="457" width="8" height="5" fill="#8aff75"/>
<rect x="16" y="457" width="3" height="5" fill="#c2ff3d"/>
<rect x="19" y="457" width="4" height="5" fill="#8aff75"/>
<rect x="23" y="457" width="4" height="5" fill="#c2ff3d"/>
<rect x="27" y="457" width="4" height="5" fill="#8aff75"/>
<rect x="31" y="457" width="3" height="5" fill="#c2ff3d"/>
<rect x="34" y="457" width="15" height="5" fill="#8aff75"/>
<rect x="49" y="457" width="4" height="5" fill="#00ccff"/>
<rect x="53" y="457" width="8" height="5" fill="#5cffa3"/>
<rect x="8" y="462" width="3" height="5" fill="#8aff75"/>
<rect x="11" y="462" width="5" height="5" fill="#c2ff3d"/>
<rect x="16" y="462" width="3" height="5" fill="#8aff75"/>
<rect x="19" y="462" width="12" height="5" fill="#c2ff3d"/>
<rect x="31" y="462" width="18" height="5" fill="#8aff75"/>
<rect x="49" y="462" width="15" height="5" fill="#5cffa3"/>
<rect x="4" y="467" width="4" height="5" fill="#5cffa3"/>
<rect x="8" y="467" width="3" height="5" fill="#8aff75"/>
<rect x="11" y="467" width="12" height="5" fill="#c2ff3d"/>
<rect x="23" y="467" width="4" height="5" fill="#e5ff1a"/>
<rect x="27" y="467" width="4" height="5" fill="#c2ff3d"/>
<rect x="31" y="467" width="18" height="5" fill="#8aff75"/>
<rect x="49" y="467" width="15" height="5" fill="#5cffa3"/>
<rect x="4" y="472" width="4" height="5" fill="#8aff75"/>
<rect x="8" y="472" width="15" height="5" fill="#c2ff3d"/>
<rect x="23" y="472" width="4" height="5" fill="#e5ff1a"/>
<rect x="27" y="472" width="4" height="5" fill="#c2ff3d"/>
<rect x="31" y="472" width="22" height="5" fill="#8aff75"/>
<rect x="53" y="472" width="11" height="5" fill="#5cffa3"/>
<rect x="4" y="477" width="4" height="5" fill="#5cffa3"/>
<rect x="8" y="477" width="3" height="5" fill="#8aff75"/>
<rect x="11" y="477" width="8" height="5" fill="#c2ff3d"/>
<rect x="19" y="477" width="8" height="5" fill="#e5ff1a"/>
<rect x="27" y="477" width="4" height="5" fill="#c2ff3d"/>
<rect x="31" y="477" width="26" height="5" fill="#8aff75"/>
<rect x="57" y="477" width="7" height="5" fill="#5cffa3"/>
<rect x="4" y="482" width="4" height="5" fill="#5cffa3"/>
<rect x="8" y="482" width="8" height="5" fill="#8aff75"/>
<rect x="16" y="482" width="3" height="5" fill="#c2ff3d"/>
<rect x="19" y="482" width="4" height="5" fill="#e5ff1a"/>
<rect x="23" y="482" width="8" height="5" fill="#c2ff3d"/>
<rect x="31" y="482" width="26" height="5" fill="#8aff75"/>
<rect x="57" y="482" width="7" height="5" fill="#5cffa3"/>
<rect x="4" y="487" width="4" height="5" fill="#0ffff0"/>
<rect x="8" y="487" width="3" height="5" fill="#5cffa3"/>
<rect x="11" y="487" width="5" height="5" fill="#8aff75"/>
<rect x="16" y="487" width="15" height="5" fill="#c2ff3d"/>
<rect x="31" y="487" width="7" height="5" fill="#8aff75"/>
<rect x="38" y="487" width="4" height="5" fill="#c2ff3d"/>
<rect x="42" y="487" width="11" height="5" fill="#8aff75"/>
<rect x="53" y="487" width="11" height="5" fill="#5cffa3"/>
<rect x="8" y="492" width="3" height="5" fill="#5cffa3"/>
<rect x="11" y="492" width="8" height="5" fill="#8aff75"/>
<rect x="19" y="492" width="19" height="5" fill="#c2ff3d"/>
<rect x="38" y="492" width="15" height="5" fill="#8aff75"/>
<rect x="53" y="492" width="4" height="5" fill="#5cffa3"/>
<rect x="57" y="492" width="4" height="5" fill="#0ffff0"/>
<rect x="61" y="492" width="3" height="5" fill="#5cffa3"/>
<rect x="8" y="497" width="3" height="5" fill="#5cffa3"/>
<rect x="11" y="497" width="5" height="5" fill="#8aff75"/>
<rect x="16" y="497" width="3" height="5" fill="#00ccff"/>
<rect x="19" y="497" width="4" height="5" fill="#8aff75"/>
<rect x="23" y="497" width="4" height="5" fill="#c2ff3d"/>
<rect x="27" y="497" width="4" height="5" fill="#e5ff1a"/>
<rect x="31" y="497" width="11" height="5" fill="#c2ff3d"/>
<rect x="42" y="497" width="7" height="5" fill="#8aff75"/>
<rect x="49" y="497" width="12" height="5" fill="#5cffa3"/>
<rect x="11" y="502" width="5" height="6" fill="#0ffff0"/>
<rect x="16" y="502" width="3" height="6" fill="#5cffa3"/>
<rect x="19" y="502" width="4" height="6" fill="#8aff75"/>
<rect x="23" y="502" width="4" height="6" fill="#c2ff3d"/>
<rect x="27" y="502" width="7" height="6" fill="#e5ff1a"/>
<rect x="34" y="502" width="8" height="6" fill="#c2ff3d"/>
<rect x="42" y="502" width="7" height="6" fill="#8aff75"/>
<rect x="49" y="502" width="4" height="6" fill="#5cffa3"/>
<rect x="53" y="502" width="4" height="6" fill="#0ffff0"/>
<rect x="31" y="508" width="3" height="4" fill="#c2ff3d"/>
<rect x="34" y="508" width="4" height="4" fill="#e5ff1a"/>
<rect x="38" y="508" width="4" height="4" fill="#8aff75"/>
<rect x="42" y="508" width="4" height="4" fill="#c2ff3d"/>
<rect x="46" y="508" width="3" height="4" fill="#5cffa3"/>
<rect x="76" y="441" width="3" height="5" fill="#5cffa3"/>
<rect x="87" y="441" width="4" height="5" fill="#5cffa3"/>
<rect x="94" y="441" width="12" height="5" fill="#8aff75"/>
<rect x="68" y="446" width="3" height="6" fill="#5cffa3"/>
<rect x="71" y="446" width="5" height="6" fill="#8aff75"/>
<rect x="79" y="446" width="8" height="6" fill="#8aff75"/>
<rect x="91" y="446" width="3" height="6" fill="#8aff75"/>
<rect x="94" y="446" width="4" height="6" fill="#e5ff1a"/>
<rect x="98" y="446" width="8" height="6" fill="#8aff75"/>
<rect x="106" y="446" width="7" height="6" fill="#5cffa3"/>
<rect x="68" y="452" width="3" height="5" fill="#5cffa3"/>
<rect x="71" y="452" width="5" height="5" fill="#8aff75"/>
<rect x="76" y="452" width="7" height="5" fill="#0ffff0"/>
<rect x="83" y="452" width="4" height="5" fill="#8aff75"/>
<rect x="87" y="452" width="4" height="5" fill="#c2ff3d"/>
<rect x="91" y="452" width="18" height="5" fill="#8aff75"/>
<rect x="109" y="452" width="4" height="5" fill="#c2ff3d"/>
<rect x="113" y="452" width="4" height="5" fill="#5cffa3"/>
<rect x="64" y="457" width="7" height="5" fill="#8aff75"/>
<rect x="71" y="457" width="5" height="5" fill="#c2ff3d"/>
<rect x="76" y="457" width="3" height="5" fill="#8aff75"/>
<rect x="79" y="457" width="4" height="5" fill="#c2ff3d"/>
<rect x="83" y="457" width="4" height="5" fill="#8aff75"/>
<rect x="87" y="457" width="4" height="5" fill="#c2ff3d"/>
<rect x="91" y="457" width="22" height="5" fill="#8aff75"/>
<rect x="113" y="457" width="8" height="5" fill="#5cffa3"/>
<rect x="64" y="462" width="7" height="5" fill="#8aff75"/>
<rect x="71" y="462" width="5" height="5" fill="#c2ff3d"/>
<rect x="76" y="462" width="3" height="5" fill="#8aff75"/>
<rect x="79" y="462" width="8" height="5" fill="#c2ff3d"/>
<rect x="87" y="462" width="26" height="5" fill="#8aff75"/>
<rect x="113" y="462" width="8" height="5" fill="#5cffa3"/>
<rect x="121" y="462" width="3" height="5" fill="#0ffff0"/>
<rect x="64" y="467" width="4" height="5" fill="#8aff75"/>
<rect x="68" y="467" width="19" height="5" fill="#c2ff3d"/>
<rect x="87" y="467" width="11" height="5" fill="#8aff75"/>
<rect x="98" y="467" width="8" height="5" fill="#c2ff3d"/>
<rect x="106" y="467" width="7" height="5" fill="#8aff75"/>
<rect x="113" y="467" width="11" height="5" fill="#5cffa3"/>
<rect x="64" y="472" width="4" height="5" fill="#5cffa3"/>
<rect x="68" y="472" width="3" height="5" fill="#8aff75"/>
<rect x="71" y="472" width="12" height="5" fill="#c2ff3d"/>
<rect x="83" y="472" width="4" height="5" fill="#e5ff1a"/>
<rect x="87" y="472" width="4" height="5" fill="#c2ff3d"/>
<rect x="91" y="472" width="7" height="5" fill="#8aff75"/>
<rect x="98" y="472" width="4" height="5" fill="#c2ff3d"/>
<rect x="102" y="472" width="15" height="5" fill="#8aff75"/>
<rect x="117" y="472" width="7" height="5" fill="#5cffa3"/>
<rect x="64" y="477" width="4" height="5" fill="#5cffa3"/>
<rect x="68" y="477" width="3" height="5" fill="#8aff75"/>
<rect x="71" y="477" width="20" height="5" fill="#c2ff3d"/>
<rect x="91" y="477" width="7" height="5" fill="#8aff75"/>
<rect x="98" y="477" width="8" height="5" fill="#c2ff3d"/>
<rect x="106" y="477" width="11" height="5" fill="#8aff75"/>
<rect x="117" y="477" width="7" height="5" fill="#5cffa3"/>
<rect x="64" y="482" width="4" height="5" fill="#5cffa3"/>
<rect x="68" y="482" width="8" height="5" fill="#8aff75"/>
<rect x="76" y="482" width="18" height="5" fill="#c2ff3d"/>
<rect x="94" y="482" width="4" height="5" fill="#8aff75"/>
<rect x="98" y="482" width="8" height="5" fill="#c2ff3d"/>
<rect x="106" y="482" width="15" height="5" fill="#8aff75"/>
<rect x="121" y="482" width="3" height="5" fill="#5cffa3"/>
<rect x="64" y="487" width="4" height="5" fill="#0ffff0"/>
<rect x="68" y="487" width="3" height="5" fill="#5cffa3"/>
<rect x="71" y="487" width="5" height="5" fill="#8aff75"/>
<rect x="76" y="487" width="11" height="5" fill="#c2ff3d"/>
<rect x="87" y="487" width="4" height="5" fill="#e5ff1a"/>
<rect x="91" y="487" width="11" height="5" fill="#c2ff3d"/>
<rect x="102" y="487" width="19" height="5" fill="#8aff75"/>
<rect x="121" y="487" width="3" height="5" fill="#5cffa3"/>
<rect x="68" y="492" width="3" height="5" fill="#00ccff"/>
<rect x="71" y="492" width="5" height="5" fill="#8aff75"/>
<rect x="76" y="492" width="7" height="5" fill="#c2ff3d"/>
<rect x="83" y="492" width="8" height="5" fill="#e5ff1a"/>
<rect x="91" y="492" width="15" height="5" fill="#c2ff3d"/>
<rect x="106" y="492" width="15" height="5" fill="#8aff75"/>
<rect x="121" y="492" width="3" height="5" fill="#5cffa3"/>
<rect x="71" y="497" width="5" height="5" fill="#5cffa3"/>
<rect x="76" y="497" width="3" height="5" fill="#8aff75"/>
<rect x="79" y="497" width="4" height="5" fill="#c2ff3d"/>
<rect x="83" y="497" width="11" height="5" fill="#e5ff1a"/>
<rect x="94" y="497" width="15" height="5" fill="#c2ff3d"/>
<rect x="109" y="497" width="12" height="5" fill="#8aff75"/>
<rect x="121" y="497" width="3" height="5" fill="#5cffa3"/>
<rect x="71" y="502" width="8" height="6" fill="#0ffff0"/>
<rect x="79" y="502" width="4" height="6" fill="#8aff75"/>
<rect x="83" y="502" width="11" height="6" fill="#e5ff1a"/>
<rect x="94" y="502" width="8" height="6" fill="#c2ff3d"/>
<rect x="102" y="502" width="4" height="6" fill="#8aff75"/>
<rect x="106" y="502" width="3" height="6" fill="#fff000"/>
<rect x="109" y="502" width="4" height="6" fill="#8aff75"/>
<rect x="113" y="502" width="4" height="6" fill="#5cffa3"/>
<rect x="83" y="508" width="4" height="4" fill="#8aff75"/>
<rect x="87" y="508" width="4" height="4" fill="#c2ff3d"/>
<rect x="91" y="508" width="3" height="4" fill="#e5ff1a"/>
<rect x="94" y="508" width="8" height="4" fill="#c2ff3d"/>
<rect x="102" y="508" width="4" height="4" fill="#8aff75"/>
<rect x="106" y="508" width="7" height="4" fill="#5cffa3"/>
<rect x="154" y="436" width="4" height="5" fill="#fff000"/>
<rect x="143" y="441" width="8" height="5" fill="#5cffa3"/>
<rect x="151" y="441" width="3" height="5" fill="#8aff75"/>
<rect x="158" y="441" width="4" height="5" fill="#8aff75"/>
<rect x="136" y="446" width="3" height="6" fill="#0ffff0"/>
<rect x="139" y="446" width="12" height="6" fill="#8aff75"/>
<rect x="154" y="446" width="15" height="6" fill="#8aff75"/>
<rect x="169" y="446" width="4" height="6" fill="#5cffa3"/>
<rect x="128" y="452" width="3" height="5" fill="#5cffa3"/>
<rect x="131" y="452" width="8" height="5" fill="#8aff75"/>
<rect x="139" y="452" width="8" height="5" fill="#0ffff0"/>
<rect x="147" y="452" width="26" height="5" fill="#8aff75"/>
<rect x="173" y="452" width="4" height="5" fill="#5cffa3"/>
<rect x="124" y="457" width="4" height="5" fill="#5cffa3"/>
<rect x="128" y="457" width="8" height="5" fill="#8aff75"/>
<rect x="136" y="457" width="3" height="5" fill="#c2ff3d"/>
<rect x="139" y="457" width="4" height="5" fill="#8aff75"/>
<rect x="143" y="457" width="4" height="5" fill="#c2ff3d"/>
<rect x="147" y="457" width="22" height="5" fill="#8aff75"/>
<rect x="169" y="457" width="4" height="5" fill="#5cffa3"/>
<rect x="173" y="457" width="4" height="5" fill="#0ffff0"/>
<rect x="177" y="457" width="4" height="5" fill="#5cffa3"/>
<rect x="124" y="462" width="4" height="5" fill="#5cffa3"/>
<rect x="128" y="462" width="3" height="5" fill="#8aff75"/>
<rect x="131" y="462" width="5" height="5" fill="#c2ff3d"/>
<rect x="136" y="462" width="3" height="5" fill="#8aff75"/>
<rect x="139" y="462" width="12" height="5" fill="#c2ff3d"/>
<rect x="151" y="462" width="18" height="5" fill="#8aff75"/>
<rect x="169" y="462" width="4" height="5" fill="#0ffff0"/>
<rect x="173" y="462" width="4" height="5" fill="#8aff75"/>
<rect x="177" y="462" width="7" height="5" fill="#5cffa3"/>
<rect x="124" y="467" width="7" height="5" fill="#8aff75"/>
<rect x="131" y="467" width="20" height="5" fill="#c2ff3d"/>
<rect x="151" y="467" width="11" height="5" fill="#8aff75"/>
<rect x="162" y="467" width="4" height="5" fill="#c2ff3d"/>
<rect x="166" y="467" width="7" height="5" fill="#8aff75"/>
<rect x="173" y="467" width="11" height="5" fill="#5cffa3"/>
<rect x="124" y="472" width="4" height="5" fill="#8aff75"/>
<rect x="128" y="472" width="23" height="5" fill="#c2ff3d"/>
<rect x="151" y="472" width="7" height="5" fill="#8aff75"/>
<rect x="158" y="472" width="4" height="5" fill="#c2ff3d"/>
<rect x="162" y="472" width="11" height="5" fill="#8aff75"/>
<rect x="173" y="472" width="11" height="5" fill="#5cffa3"/>
<rect x="124" y="477" width="4" height="5" fill="#0ffff0"/>
<rect x="128" y="477" width="3" height="5" fill="#8aff75"/>
<rect x="131" y="477" width="5" height="5" fill="#e5ff1a"/>
<rect x="136" y="477" width="15" height="5" fill="#c2ff3d"/>
<rect x="151" y="477" width="7" height="5" fill="#8aff75"/>
<rect x="158" y="477" width="8" height="5" fill="#c2ff3d"/>
<rect x="166" y="477" width="11" height="5" fill="#8aff75"/>
<rect x="177" y="477" width="4" height="5" fill="#5cffa3"/>
<rect x="181" y="477" width="3" height="5" fill="#0ffff0"/>
<rect x="124" y="482" width="4" height="5" fill="#5cffa3"/>
<rect x="128" y="482" width="3" height="5" fill="#8aff75"/>
<rect x="131" y="482" width="20" height="5" fill="#c2ff3d"/>
<rect x="151" y="482" width="3" height="5" fill="#8aff75"/>
<rect x="154" y="482" width="8" height="5" fill="#c2ff3d"/>
<rect x="162" y="482" width="15" height="5" fill="#8aff75"/>
<rect x="177" y="482" width="7" height="5" fill="#5cffa3"/>
<rect x="124" y="487" width="4" height="5" fill="#5cffa3"/>
<rect x="128" y="487" width="3" height="5" fill="#8aff75"/>
<rect x="131" y="487" width="31" height="5" fill="#c2ff3d"/>
<rect x="162" y="487" width="19" height="5" fill="#8aff75"/>
<rect x="181" y="487" width="3" height="5" fill="#5cffa3"/>
<rect x="124" y="492" width="7" height="5" fill="#8aff75"/>
<rect x="131" y="492" width="5" height="5" fill="#c2ff3d"/>
<rect x="136" y="492" width="3" height="5" fill="#8aff75"/>
<rect x="139" y="492" width="27" height="5" fill="#c2ff3d"/>
<rect x="166" y="492" width="15" height="5" fill="#8aff75"/>
<rect x="181" y="492" width="3" height="5" fill="#5cffa3"/>
<rect x="131" y="497" width="5" height="5" fill="#5cffa3"/>
<rect x="136" y="497" width="3" height="5" fill="#8aff75"/>
<rect x="139" y="497" width="8" height="5" fill="#c2ff3d"/>
<rect x="147" y="497" width="7" height="5" fill="#e5ff1a"/>
<rect x="154" y="497" width="15" height="5" fill="#c2ff3d"/>
<rect x="169" y="497" width="12" height="5" fill="#8aff75"/>
<rect x="181" y="497" width="3" height="5" fill="#5cffa3"/>
<rect x="131" y="502" width="8" height="6" fill="#5cffa3"/>
<rect x="143" y="502" width="4" height="6" fill="#8aff75"/>
<rect x="147" y="502" width="4" height="6" fill="#c2ff3d"/>
<rect x="151" y="502" width="7" height="6" fill="#e5ff1a"/>
<rect x="158" y="502" width="8" height="6" fill="#c2ff3d"/>
<rect x="166" y="502" width="7" height="6" fill="#8aff75"/>
<rect x="173" y="502" width="4" height="6" fill="#5cffa3"/>
<rect x="136" y="508" width="3" height="4" fill="#0ffff0"/>
<rect x="143" y="508" width="4" height="4" fill="#5cffa3"/>
<rect x="147" y="508" width="4" height="4" fill="#0ffff0"/>
<rect x="151" y="508" width="3" height="4" fill="#8aff75"/>
<rect x="158" y="508" width="4" height="4" fill="#8aff75"/>
<rect x="162" y="508" width="4" height="4" fill="#0ffff0"/>
<rect x="169" y="508" width="4" height="4" fill="#5cffa3"/>
<rect x="203" y="441" width="8" height="5" fill="#5cffa3"/>
<rect x="214" y="441" width="4" height="5" fill="#8aff75"/>
<rect x="222" y="441" width="4" height="5" fill="#5cffa3"/>
<rect x="191" y="446" width="5" height="6" fill="#0ffff0"/>
<rect x="199" y="446" width="4" height="6" fill="#5cffa3"/>
<rect x="203" y="446" width="4" height="6" fill="#8aff75"/>
<rect x="211" y="446" width="3" height="6" fill="#8aff75"/>
<rect x="214" y="446" width="4" height="6" fill="#c2ff3d"/>
<rect x="222" y="446" width="15" height="6" fill="#8aff75"/>
<rect x="184" y="452" width="4" height="5" fill="#5cffa3"/>
<rect x="188" y="452" width="3" height="5" fill="#0ffff0"/>
<rect x="191" y="452" width="8" height="5" fill="#8aff75"/>
<rect x="199" y="452" width="4" height="5" fill="#c2ff3d"/>
<rect x="203" y="452" width="34" height="5" fill="#8aff75"/>
<rect x="237" y="452" width="4" height="5" fill="#5cffa3"/>
<rect x="188" y="457" width="8" height="5" fill="#8aff75"/>
<rect x="196" y="457" width="3" height="5" fill="#c2ff3d"/>
<rect x="199" y="457" width="4" height="5" fill="#8aff75"/>
<rect x="203" y="457" width="4" height="5" fill="#c2ff3d"/>
<rect x="207" y="457" width="30" height="5" fill="#8aff75"/>
<rect x="237" y="457" width="7" height="5" fill="#5cffa3"/>
<rect x="184" y="462" width="4" height="5" fill="#0ffff0"/>
<rect x="188" y="462" width="3" height="5" fill="#8aff75"/>
<rect x="191" y="462" width="5" height="5" fill="#c2ff3d"/>
<rect x="196" y="462" width="3" height="5" fill="#8aff75"/>
<rect x="199" y="462" width="12" height="5" fill="#c2ff3d"/>
<rect x="211" y="462" width="22" height="5" fill="#8aff75"/>
<rect x="233" y="462" width="8" height="5" fill="#5cffa3"/>
<rect x="241" y="462" width="3" height="5" fill="#0ffff0"/>
<rect x="188" y="467" width="3" height="5" fill="#8aff75"/>
<rect x="191" y="467" width="20" height="5" fill="#c2ff3d"/>
<rect x="211" y="467" width="11" height="5" fill="#8aff75"/>
<rect x="222" y="467" width="4" height="5" fill="#c2ff3d"/>
<rect x="226" y="467" width="7" height="5" fill="#8aff75"/>
<rect x="233" y="467" width="11" height="5" fill="#5cffa3"/>
<rect x="184" y="472" width="4" height="5" fill="#5cffa3"/>
<rect x="188" y="472" width="3" height="5" fill="#8aff75"/>
<rect x="191" y="472" width="16" height="5" fill="#c2ff3d"/>
<rect x="207" y="472" width="11" height="5" fill="#8aff75"/>
<rect x="218" y="472" width="4" height="5" fill="#c2ff3d"/>
<rect x="222" y="472" width="11" height="5" fill="#8aff75"/>
<rect x="233" y="472" width="8" height="5" fill="#0ffff0"/>
<rect x="241" y="472" width="3" height="5" fill="#5cffa3"/>
<rect x="184" y="477" width="4" height="5" fill="#5cffa3"/>
<rect x="188" y="477" width="3" height="5" fill="#8aff75"/>
<rect x="191" y="477" width="20" height="5" fill="#c2ff3d"/>
<rect x="211" y="477" width="7" height="5" fill="#8aff75"/>
<rect x="218" y="477" width="8" height="5" fill="#c2ff3d"/>
<rect x="226" y="477" width="7" height="5" fill="#8aff75"/>
<rect x="233" y="477" width="11" height="5" fill="#5cffa3"/>
<rect x="184" y="482" width="4" height="5" fill="#5cffa3"/>
<rect x="188" y="482" width="3" height="5" fill="#8aff75"/>
<rect x="191" y="482" width="20" height="5" fill="#c2ff3d"/>
<rect x="211" y="482" width="3" height="5" fill="#8aff75"/>
<rect x="214" y="482" width="8" height="5" fill="#c2ff3d"/>
<rect x="222" y="482" width="19" height="5" fill="#8aff75"/>
<rect x="241" y="482" width="3" height="5" fill="#5cffa3"/>
<rect x="184" y="487" width="4" height="5" fill="#5cffa3"/>
<rect x="188" y="487" width="3" height="5" fill="#8aff75"/>
<rect x="191" y="487" width="5" height="5" fill="#e5ff1a"/>
<rect x="196" y="487" width="30" height="5" fill="#c2ff3d"/>
<rect x="226" y="487" width="15" height="5" fill="#8aff75"/>
<rect x="241" y="487" width="3" height="5" fill="#5cffa3"/>
<rect x="184" y="492" width="4" height="5" fill="#5cffa3"/>
<rect x="188" y="492" width="3" height="5" fill="#8aff75"/>
<rect x="191" y="492" width="5" height="5" fill="#e5ff1a"/>
<rect x="196" y="492" width="33" height="5" fill="#c2ff3d"/>
<rect x="229" y="492" width="12" height="5" fill="#8aff75"/>
<rect x="241" y="492" width="3" height="5" fill="#5cffa3"/>
<rect x="188" y="497" width="3" height="5" fill="#5cffa3"/>
<rect x="191" y="497" width="5" height="5" fill="#8aff75"/>
<rect x="196" y="497" width="3" height="5" fill="#c2ff3d"/>
<rect x="199" y="497" width="4" height="5" fill="#8aff75"/>
<rect x="203" y="497" width="8" height="5" fill="#e5ff1a"/>
<rect x="211" y="497" width="3" height="5" fill="#c2ff3d"/>
<rect x="214" y="497" width="4" height="5" fill="#e5ff1a"/>
<rect x="218" y="497" width="15" height="5" fill="#c2ff3d"/>
<rect x="233" y="497" width="8" height="5" fill="#8aff75"/>
<rect x="241" y="497" width="3" height="5" fill="#5cffa3"/>
<rect x="191" y="502" width="5" height="6" fill="#8aff75"/>
<rect x="196" y="502" width="3" height="6" fill="#0ffff0"/>
<rect x="199" y="502" width="4" height="6" fill="#8aff75"/>
<rect x="203" y="502" width="8" height="6" fill="#e5ff1a"/>
<rect x="211" y="502" width="15" height="6" fill="#c2ff3d"/>
<rect x="226" y="502" width="7" height="6" fill="#8aff75"/>
<rect x="233" y="502" width="8" height="6" fill="#0ffff0"/>
<rect x="203" y="508" width="4" height="4" fill="#5cffa3"/>
<rect x="207" y="508" width="4" height="4" fill="#8aff75"/>
<rect x="214" y="508" width="4" height="4" fill="#0ffff0"/>
<rect x="218" y="508" width="4" height="4" fill="#8aff75"/>
<rect x="226" y="508" width="7" height="4" fill="#5cffa3"/>
<rect x="267" y="441" width="7" height="5" fill="#8aff75"/>
<rect x="282" y="441" width="4" height="5" fill="#8aff75"/>
<rect x="259" y="446" width="4" height="6" fill="#5cffa3"/>
<rect x="263" y="446" width="19" height="6" fill="#8aff75"/>
<rect x="282" y="446" width="7" height="6" fill="#5cffa3"/>
<rect x="248" y="452" width="3" height="5" fill="#5cffa3"/>
<rect x="251" y="452" width="42" height="5" fill="#8aff75"/>
<rect x="293" y="452" width="4" height="5" fill="#5cffa3"/>
<rect x="248" y="457" width="8" height="5" fill="#8aff75"/>
<rect x="256" y="457" width="3" height="5" fill="#c2ff3d"/>
<rect x="259" y="457" width="30" height="5" fill="#8aff75"/>
<rect x="289" y="457" width="4" height="5" fill="#5cffa3"/>
<rect x="293" y="457" width="4" height="5" fill="#00ccff"/>
<rect x="297" y="457" width="4" height="5" fill="#5cffa3"/>
<rect x="244" y="462" width="4" height="5" fill="#5cffa3"/>
<rect x="248" y="462" width="3" height="5" fill="#8aff75"/>
<rect x="251" y="462" width="5" height="5" fill="#c2ff3d"/>
<rect x="256" y="462" width="7" height="5" fill="#8aff75"/>
<rect x="263" y="462" width="4" height="5" fill="#c2ff3d"/>
<rect x="267" y="462" width="26" height="5" fill="#8aff75"/>
<rect x="293" y="462" width="11" height="5" fill="#5cffa3"/>
<rect x="244" y="467" width="4" height="5" fill="#5cffa3"/>
<rect x="248" y="467" width="8" height="5" fill="#8aff75"/>
<rect x="256" y="467" width="11" height="5" fill="#c2ff3d"/>
<rect x="267" y="467" width="26" height="5" fill="#8aff75"/>
<rect x="293" y="467" width="11" height="5" fill="#5cffa3"/>
<rect x="244" y="472" width="4" height="5" fill="#5cffa3"/>
<rect x="248" y="472" width="3" height="5" fill="#8aff75"/>
<rect x="251" y="472" width="8" height="5" fill="#c2ff3d"/>
<rect x="259" y="472" width="4" height="5" fill="#8aff75"/>
<rect x="263" y="472" width="4" height="5" fill="#c2ff3d"/>
<rect x="267" y="472" width="7" height="5" fill="#8aff75"/>
<rect x="274" y="472" width="4" height="5" fill="#c2ff3d"/>
<rect x="278" y="472" width="15" height="5" fill="#8aff75"/>
<rect x="293" y="472" width="8" height="5" fill="#5cffa3"/>
<rect x="301" y="472" width="3" height="5" fill="#00ccff"/>
<rect x="244" y="477" width="4" height="5" fill="#5cffa3"/>
<rect x="248" y="477" width="3" height="5" fill="#8aff75"/>
<rect x="251" y="477" width="12" height="5" fill="#c2ff3d"/>
<rect x="263" y="477" width="11" height="5" fill="#8aff75"/>
<rect x="274" y="477" width="4" height="5" fill="#c2ff3d"/>
<rect x="278" y="477" width="19" height="5" fill="#8aff75"/>
<rect x="297" y="477" width="7" height="5" fill="#5cffa3"/>
<rect x="248" y="482" width="3" height="5" fill="#8aff75"/>
<rect x="251" y="482" width="16" height="5" fill="#c2ff3d"/>
<rect x="267" y="482" width="7" height="5" fill="#8aff75"/>
<rect x="274" y="482" width="4" height="5" fill="#c2ff3d"/>
<rect x="278" y="482" width="23" height="5" fill="#8aff75"/>
<rect x="301" y="482" width="3" height="5" fill="#5cffa3"/>
<rect x="244" y="487" width="4" height="5" fill="#5cffa3"/>
<rect x="248" y="487" width="3" height="5" fill="#8aff75"/>
<rect x="251" y="487" width="23" height="5" fill="#c2ff3d"/>
<rect x="274" y="487" width="8" height="5" fill="#8aff75"/>
<rect x="282" y="487" width="4" height="5" fill="#c2ff3d"/>
<rect x="286" y="487" width="15" height="5" fill="#8aff75"/>
<rect x="301" y="487" width="3" height="5" fill="#5cffa3"/>
<rect x="244" y="492" width="7" height="5" fill="#c2ff3d"/>
<rect x="251" y="492" width="5" height="5" fill="#0ffff0"/>
<rect x="256" y="492" width="3" height="5" fill="#c2ff3d"/>
<rect x="259" y="492" width="4" height="5" fill="#8aff75"/>
<rect x="263" y="492" width="8" height="5" fill="#e5ff1a"/>
<rect x="271" y="492" width="11" height="5" fill="#c2ff3d"/>
<rect x="282" y="492" width="19" height="5" fill="#8aff75"/>
<rect x="301" y="492" width="3" height="5" fill="#5cffa3"/>
<rect x="244" y="497" width="4" height="5" fill="#5cffa3"/>
<rect x="248" y="497" width="3" height="5" fill="#8aff75"/>
<rect x="251" y="497" width="5" height="5" fill="#5cffa3"/>
<rect x="256" y="497" width="3" height="5" fill="#8aff75"/>
<rect x="259" y="497" width="27" height="5" fill="#c2ff3d"/>
<rect x="286" y="497" width="15" height="5" fill="#8aff75"/>
<rect x="301" y="497" width="3" height="5" fill="#5cffa3"/>
<rect x="248" y="502" width="8" height="6" fill="#0ffff0"/>
<rect x="256" y="502" width="3" height="6" fill="#5cffa3"/>
<rect x="259" y="502" width="4" height="6" fill="#8aff75"/>
<rect x="263" y="502" width="23" height="6" fill="#c2ff3d"/>
<rect x="286" y="502" width="7" height="6" fill="#8aff75"/>
<rect x="293" y="502" width="4" height="6" fill="#5cffa3"/>
<rect x="297" y="502" width="4" height="6" fill="#0ffff0"/>
<rect x="263" y="508" width="4" height="4" fill="#8aff75"/>
<rect x="267" y="508" width="4" height="4" fill="#c2ff3d"/>
<rect x="271" y="508" width="3" height="4" fill="#8aff75"/>
<rect x="278" y="508" width="8" height="4" fill="#8aff75"/>
<rect x="286" y="508" width="3" height="4" fill="#5cffa3"/>
<rect x="319" y="446" width="8" height="6" fill="#5cffa3"/>
<rect x="331" y="446" width="3" height="6" fill="#5cffa3"/>
<rect x="334" y="446" width="4" height="6" fill="#0ffff0"/>
<rect x="342" y="446" width="7" height="6" fill="#c2ff3d"/>
<rect x="311" y="452" width="5" height="5" fill="#8aff75"/>
<rect x="319" y="452" width="4" height="5" fill="#5cffa3"/>
<rect x="323" y="452" width="4" height="5" fill="#8aff75"/>
<rect x="327" y="452" width="19" height="5" fill="#5cffa3"/>
<rect x="349" y="452" width="8" height="5" fill="#5cffa3"/>
<rect x="308" y="457" width="3" height="5" fill="#5cffa3"/>
<rect x="311" y="457" width="8" height="5" fill="#8aff75"/>
<rect x="319" y="457" width="4" height="5" fill="#5cffa3"/>
<rect x="323" y="457" width="8" height="5" fill="#8aff75"/>
<rect x="331" y="457" width="3" height="5" fill="#5cffa3"/>
<rect x="334" y="457" width="12" height="5" fill="#8aff75"/>
<rect x="346" y="457" width="3" height="5" fill="#00ccff"/>
<rect x="349" y="457" width="12" height="5" fill="#5cffa3"/>
<rect x="304" y="462" width="4" height="5" fill="#5cffa3"/>
<rect x="308" y="462" width="3" height="5" fill="#00ccff"/>
<rect x="311" y="462" width="8" height="5" fill="#8aff75"/>
<rect x="319" y="462" width="4" height="5" fill="#c2ff3d"/>
<rect x="323" y="462" width="15" height="5" fill="#8aff75"/>
<rect x="338" y="462" width="4" height="5" fill="#5cffa3"/>
<rect x="342" y="462" width="7" height="5" fill="#8aff75"/>
<rect x="349" y="462" width="4" height="5" fill="#0094ff"/>
<rect x="353" y="462" width="4" height="5" fill="#5cffa3"/>
<rect x="357" y="462" width="4" height="5" fill="#00ccff"/>
<rect x="361" y="462" width="3" height="5" fill="#5cffa3"/>
<rect x="304" y="467" width="4" height="5" fill="#5cffa3"/>
<rect x="308" y="467" width="8" height="5" fill="#8aff75"/>
<rect x="316" y="467" width="3" height="5" fill="#0094ff"/>
<rect x="319" y="467" width="8" height="5" fill="#8aff75"/>
<rect x="327" y="467" width="4" height="5" fill="#c2ff3d"/>
<rect x="331" y="467" width="18" height="5" fill="#8aff75"/>
<rect x="349" y="467" width="15" height="5" fill="#5cffa3"/>
<rect x="304" y="472" width="4" height="5" fill="#0ffff0"/>
<rect x="308" y="472" width="3" height="5" fill="#8aff75"/>
<rect x="311" y="472" width="5" height="5" fill="#c2ff3d"/>
<rect x="316" y="472" width="7" height="5" fill="#8aff75"/>
<rect x="323" y="472" width="4" height="5" fill="#c2ff3d"/>
<rect x="327" y="472" width="22" height="5" fill="#8aff75"/>
<rect x="349" y="472" width="12" height="5" fill="#5cffa3"/>
<rect x="304" y="477" width="4" height="5" fill="#0ffff0"/>
<rect x="308" y="477" width="8" height="5" fill="#8aff75"/>
<rect x="316" y="477" width="3" height="5" fill="#c2ff3d"/>
<rect x="319" y="477" width="4" height="5" fill="#8aff75"/>
<rect x="323" y="477" width="4" height="5" fill="#c2ff3d"/>
<rect x="327" y="477" width="11" height="5" fill="#8aff75"/>
<rect x="338" y="477" width="4" height="5" fill="#c2ff3d"/>
<rect x="342" y="477" width="7" height="5" fill="#8aff75"/>
<rect x="349" y="477" width="15" height="5" fill="#5cffa3"/>
<rect x="308" y="482" width="3" height="5" fill="#8aff75"/>
<rect x="311" y="482" width="5" height="5" fill="#c2ff3d"/>
<rect x="316" y="482" width="3" height="5" fill="#8aff75"/>
<rect x="319" y="482" width="8" height="5" fill="#c2ff3d"/>
<rect x="327" y="482" width="11" height="5" fill="#8aff75"/>
<rect x="338" y="482" width="4" height="5" fill="#c2ff3d"/>
<rect x="342" y="482" width="11" height="5" fill="#8aff75"/>
<rect x="353" y="482" width="11" height="5" fill="#5cffa3"/>
<rect x="304" y="487" width="4" height="5" fill="#0ffff0"/>
<rect x="308" y="487" width="8" height="5" fill="#8aff75"/>
<rect x="316" y="487" width="3" height="5" fill="#c2ff3d"/>
<rect x="319" y="487" width="4" height="5" fill="#8aff75"/>
<rect x="323" y="487" width="11" height="5" fill="#c2ff3d"/>
<rect x="334" y="487" width="19" height="5" fill="#8aff75"/>
<rect x="353" y="487" width="11" height="5" fill="#5cffa3"/>
<rect x="304" y="492" width="4" height="5" fill="#5cffa3"/>
<rect x="308" y="492" width="8" height="5" fill="#8aff75"/>
<rect x="316" y="492" width="15" height="5" fill="#c2ff3d"/>
<rect x="331" y="492" width="18" height="5" fill="#8aff75"/>
<rect x="349" y="492" width="15" height="5" fill="#5cffa3"/>
<rect x="308" y="497" width="3" height="5" fill="#5cffa3"/>
<rect x="311" y="497" width="8" height="5" fill="#8aff75"/>
<rect x="319" y="497" width="12" height="5" fill="#c2ff3d"/>
<rect x="331" y="497" width="3" height="5" fill="#8aff75"/>
<rect x="334" y="497" width="12" height="5" fill="#c2ff3d"/>
<rect x="346" y="497" width="7" height="5" fill="#8aff75"/>
<rect x="353" y="497" width="8" height="5" fill="#5cffa3"/>
<rect x="311" y="502" width="8" height="6" fill="#5cffa3"/>
<rect x="319" y="502" width="4" height="6" fill="#00ccff"/>
<rect x="323" y="502" width="4" height="6" fill="#8aff75"/>
<rect x="327" y="502" width="11" height="6" fill="#c2ff3d"/>
<rect x="338" y="502" width="4" height="6" fill="#e5ff1a"/>
<rect x="342" y="502" width="4" height="6" fill="#8aff75"/>
<rect x="346" y="502" width="3" height="6" fill="#00ccff"/>
<rect x="349" y="502" width="4" height="6" fill="#5cffa3"/>
<rect x="323" y="508" width="4" height="4" fill="#5cffa3"/>
<rect x="331" y="508" width="3" height="4" fill="#5cffa3"/>
<rect x="338" y="508" width="8" height="4" fill="#5cffa3"/>
<rect x="387" y="441" width="7" height="5" fill="#5cffa3"/>
<rect x="398" y="441" width="4" height="5" fill="#c2ff3d"/>
<rect x="406" y="441" width="3" height="5" fill="#5cffa3"/>
<rect x="371" y="446" width="12" height="6" fill="#8aff75"/>
<rect x="383" y="446" width="8" height="6" fill="#5cffa3"/>
<rect x="391" y="446" width="15" height="6" fill="#8aff75"/>
<rect x="406" y="446" width="3" height="6" fill="#5cffa3"/>
<rect x="368" y="452" width="3" height="5" fill="#5cffa3"/>
<rect x="379" y="452" width="30" height="5" fill="#5cffa3"/>
<rect x="409" y="452" width="4" height="5" fill="#8aff75"/>
<rect x="413" y="452" width="4" height="5" fill="#5cffa3"/>
<rect x="368" y="457" width="3" height="5" fill="#5cffa3"/>
<rect x="371" y="457" width="8" height="5" fill="#8aff75"/>
<rect x="379" y="457" width="4" height="5" fill="#c2ff3d"/>
<rect x="383" y="457" width="23" height="5" fill="#8aff75"/>
<rect x="406" y="457" width="7" height="5" fill="#5cffa3"/>
<rect x="417" y="457" width="4" height="5" fill="#5cffa3"/>
<rect x="364" y="462" width="4" height="5" fill="#5cffa3"/>
<rect x="371" y="462" width="5" height="5" fill="#8aff75"/>
<rect x="376" y="462" width="11" height="5" fill="#c2ff3d"/>
<rect x="387" y="462" width="26" height="5" fill="#8aff75"/>
<rect x="413" y="462" width="11" height="5" fill="#5cffa3"/>
<rect x="364" y="467" width="4" height="5" fill="#5cffa3"/>
<rect x="368" y="467" width="8" height="5" fill="#c2ff3d"/>
<rect x="376" y="467" width="3" height="5" fill="#8aff75"/>
<rect x="379" y="467" width="8" height="5" fill="#c2ff3d"/>
<rect x="387" y="467" width="26" height="5" fill="#8aff75"/>
<rect x="413" y="467" width="11" height="5" fill="#5cffa3"/>
<rect x="364" y="472" width="4" height="5" fill="#5cffa3"/>
<rect x="368" y="472" width="3" height="5" fill="#8aff75"/>
<rect x="371" y="472" width="5" height="5" fill="#c2ff3d"/>
<rect x="376" y="472" width="7" height="5" fill="#8aff75"/>
<rect x="383" y="472" width="4" height="5" fill="#c2ff3d"/>
<rect x="387" y="472" width="22" height="5" fill="#8aff75"/>
<rect x="409" y="472" width="15" height="5" fill="#5cffa3"/>
<rect x="364" y="477" width="4" height="5" fill="#5cffa3"/>
<rect x="368" y="477" width="8" height="5" fill="#8aff75"/>
<rect x="376" y="477" width="3" height="5" fill="#c2ff3d"/>
<rect x="379" y="477" width="4" height="5" fill="#8aff75"/>
<rect x="383" y="477" width="4" height="5" fill="#c2ff3d"/>
<rect x="387" y="477" width="11" height="5" fill="#8aff75"/>
<rect x="398" y="477" width="4" height="5" fill="#c2ff3d"/>
<rect x="402" y="477" width="7" height="5" fill="#8aff75"/>
<rect x="409" y="477" width="15" height="5" fill="#5cffa3"/>
<rect x="364" y="482" width="4" height="5" fill="#5cffa3"/>
<rect x="368" y="482" width="3" height="5" fill="#00ccff"/>
<rect x="371" y="482" width="5" height="5" fill="#8aff75"/>
<rect x="376" y="482" width="7" height="5" fill="#c2ff3d"/>
<rect x="383" y="482" width="11" height="5" fill="#8aff75"/>
<rect x="394" y="482" width="4" height="5" fill="#c2ff3d"/>
<rect x="398" y="482" width="15" height="5" fill="#8aff75"/>
<rect x="413" y="482" width="11" height="5" fill="#5cffa3"/>
<rect x="364" y="487" width="4" height="5" fill="#5cffa3"/>
<rect x="368" y="487" width="8" height="5" fill="#8aff75"/>
<rect x="376" y="487" width="3" height="5" fill="#c2ff3d"/>
<rect x="379" y="487" width="4" height="5" fill="#8aff75"/>
<rect x="383" y="487" width="8" height="5" fill="#c2ff3d"/>
<rect x="391" y="487" width="22" height="5" fill="#8aff75"/>
<rect x="413" y="487" width="11" height="5" fill="#5cffa3"/>
<rect x="364" y="492" width="4" height="5" fill="#5cffa3"/>
<rect x="368" y="492" width="3" height="5" fill="#00ccff"/>
<rect x="371" y="492" width="5" height="5" fill="#8aff75"/>
<rect x="376" y="492" width="15" height="5" fill="#c2ff3d"/>
<rect x="391" y="492" width="22" height="5" fill="#8aff75"/>
<rect x="413" y="492" width="11" height="5" fill="#5cffa3"/>
<rect x="368" y="497" width="3" height="5" fill="#5cffa3"/>
<rect x="371" y="497" width="8" height="5" fill="#8aff75"/>
<rect x="379" y="497" width="12" height="5" fill="#c2ff3d"/>
<rect x="391" y="497" width="3" height="5" fill="#8aff75"/>
<rect x="394" y="497" width="12" height="5" fill="#c2ff3d"/>
<rect x="406" y="497" width="7" height="5" fill="#8aff75"/>
<rect x="413" y="497" width="8" height="5" fill="#5cffa3"/>
<rect x="371" y="502" width="8" height="6" fill="#0ffff0"/>
<rect x="379" y="502" width="4" height="6" fill="#8aff75"/>
<rect x="383" y="502" width="19" height="6" fill="#c2ff3d"/>
<rect x="402" y="502" width="7" height="6" fill="#8aff75"/>
<rect x="409" y="502" width="8" height="6" fill="#5cffa3"/>
<rect x="383" y="508" width="4" height="4" fill="#5cffa3"/>
<rect x="391" y="508" width="3" height="4" fill="#8aff75"/>
<rect x="398" y="508" width="4" height="4" fill="#5cffa3"/>
<rect x="406" y="508" width="7" height="4" fill="#5cffa3"/>
<rect x="27" y="526" width="4" height="6" fill="#b3ff4c"/>
<rect x="31" y="526" width="3" height="6" fill="#38ffc7"/>
<rect x="34" y="526" width="4" height="6" fill="#b3ff4c"/>
<rect x="42" y="526" width="7" height="6" fill="#38ffc7"/>
<rect x="19" y="532" width="4" height="5" fill="#75ff8a"/>
<rect x="23" y="532" width="4" height="5" fill="#b3ff4c"/>
<rect x="27" y="532" width="7" height="5" fill="#e5ff1a"/>
<rect x="34" y="532" width="4" height="5" fill="#b3ff4c"/>
<rect x="38" y="532" width="8" height="5" fill="#e5ff1a"/>
<rect x="46" y="532" width="3" height="5" fill="#b3ff4c"/>
<rect x="49" y="532" width="4" height="5" fill="#75ff8a"/>
<rect x="16" y="537" width="3" height="5" fill="#75ff8a"/>
<rect x="19" y="537" width="8" height="5" fill="#e5ff1a"/>
<rect x="27" y="537" width="4" height="5" fill="#fff000"/>
<rect x="31" y="537" width="18" height="5" fill="#e5ff1a"/>
<rect x="49" y="537" width="4" height="5" fill="#b3ff4c"/>
<rect x="53" y="537" width="4" height="5" fill="#75ff8a"/>
<rect x="8" y="542" width="3" height="5" fill="#75ff8a"/>
<rect x="11" y="542" width="5" height="5" fill="#b3ff4c"/>
<rect x="16" y="542" width="3" height="5" fill="#e5ff1a"/>
<rect x="19" y="542" width="12" height="5" fill="#fff000"/>
<rect x="31" y="542" width="7" height="5" fill="#e5ff1a"/>
<rect x="38" y="542" width="8" height="5" fill="#fff000"/>
<rect x="46" y="542" width="7" height="5" fill="#e5ff1a"/>
<rect x="53" y="542" width="4" height="5" fill="#b3ff4c"/>
<rect x="57" y="542" width="4" height="5" fill="#75ff8a"/>
<rect x="61" y="542" width="3" height="5" fill="#00f5ff"/>
<rect x="8" y="547" width="3" height="5" fill="#75ff8a"/>
<rect x="11" y="547" width="5" height="5" fill="#e5ff1a"/>
<rect x="16" y="547" width="15" height="5" fill="#fff000"/>
<rect x="31" y="547" width="7" height="5" fill="#e5ff1a"/>
<rect x="38" y="547" width="11" height="5" fill="#fff000"/>
<rect x="49" y="547" width="8" height="5" fill="#e5ff1a"/>
<rect x="57" y="547" width="4" height="5" fill="#b3ff4c"/>
<rect x="61" y="547" width="3" height="5" fill="#75ff8a"/>
<rect x="4" y="552" width="4" height="5" fill="#00f5ff"/>
<rect x="8" y="552" width="3" height="5" fill="#75ff8a"/>
<rect x="11" y="552" width="5" height="5" fill="#e5ff1a"/>
<rect x="16" y="552" width="18" height="5" fill="#fff000"/>
<rect x="34" y="552" width="4" height="5" fill="#e5ff1a"/>
<rect x="38" y="552" width="15" height="5" fill="#fff000"/>
<rect x="53" y="552" width="4" height="5" fill="#e5ff1a"/>
<rect x="57" y="552" width="4" height="5" fill="#b3ff4c"/>
<rect x="61" y="552" width="3" height="5" fill="#75ff8a"/>
<rect x="4" y="557" width="4" height="5" fill="#38ffc7"/>
<rect x="8" y="557" width="3" height="5" fill="#b3ff4c"/>
<rect x="11" y="557" width="5" height="5" fill="#e5ff1a"/>
<rect x="16" y="557" width="37" height="5" fill="#fff000"/>
<rect x="53" y="557" width="4" height="5" fill="#e5ff1a"/>
<rect x="57" y="557" width="4" height="5" fill="#b3ff4c"/>
<rect x="8" y="562" width="3" height="5" fill="#b3ff4c"/>
<rect x="11" y="562" width="5" height="5" fill="#e5ff1a"/>
<rect x="16" y="562" width="37" height="5" fill="#fff000"/>
<rect x="53" y="562" width="4" height="5" fill="#e5ff1a"/>
<rect x="57" y="562" width="4" height="5" fill="#b3ff4c"/>
<rect x="11" y="567" width="5" height="5" fill="#b3ff4c"/>
<rect x="16" y="567" width="3" height="5" fill="#e5ff1a"/>
<rect x="19" y="567" width="8" height="5" fill="#fff000"/>
<rect x="27" y="567" width="4" height="5" fill="#ffdb00"/>
<rect x="31" y="567" width="22" height="5" fill="#fff000"/>
<rect x="53" y="567" width="4" height="5" fill="#e5ff1a"/>
<rect x="57" y="567" width="4" height="5" fill="#75ff8a"/>
<rect x="11" y="572" width="5" height="5" fill="#75ff8a"/>
<rect x="16" y="572" width="3" height="5" fill="#e5ff1a"/>
<rect x="19" y="572" width="8" height="5" fill="#fff000"/>
<rect x="27" y="572" width="7" height="5" fill="#ffdb00"/>
<rect x="34" y="572" width="15" height="5" fill="#fff000"/>
<rect x="49" y="572" width="4" height="5" fill="#e5ff1a"/>
<rect x="53" y="572" width="4" height="5" fill="#b3ff4c"/>
<rect x="16" y="577" width="3" height="5" fill="#00f5ff"/>
<rect x="19" y="577" width="4" height="5" fill="#e5ff1a"/>
<rect x="23" y="577" width="19" height="5" fill="#fff000"/>
<rect x="42" y="577" width="7" height="5" fill="#e5ff1a"/>
<rect x="49" y="577" width="4" height="5" fill="#b3ff4c"/>
<rect x="53" y="577" width="4" height="5" fill="#38ffc7"/>
<rect x="27" y="582" width="4" height="6" fill="#00f5ff"/>
<rect x="31" y="582" width="3" height="6" fill="#38ffc7"/>
<rect x="34" y="582" width="4" height="6" fill="#75ff8a"/>
<rect x="38" y="582" width="4" height="6" fill="#b3ff4c"/>
<rect x="42" y="582" width="7" height="6" fill="#00f5ff"/>
<rect x="79" y="526" width="4" height="6" fill="#75ff8a"/>
<rect x="83" y="526" width="8" height="6" fill="#b3ff4c"/>
<rect x="91" y="526" width="3" height="6" fill="#75ff8a"/>
<rect x="94" y="526" width="8" height="6" fill="#b3ff4c"/>
<rect x="102" y="526" width="4" height="6" fill="#75ff8a"/>
<rect x="106" y="526" width="3" height="6" fill="#38ffc7"/>
<rect x="79" y="532" width="4" height="5" fill="#00f5ff"/>
<rect x="83" y="532" width="11" height="5" fill="#e5ff1a"/>
<rect x="94" y="532" width="4" height="5" fill="#fff000"/>
<rect x="98" y="532" width="11" height="5" fill="#e5ff1a"/>
<rect x="109" y="532" width="4" height="5" fill="#b3ff4c"/>
<rect x="113" y="532" width="4" height="5" fill="#38ffc7"/>
<rect x="71" y="537" width="5" height="5" fill="#75ff8a"/>
<rect x="76" y="537" width="3" height="5" fill="#b3ff4c"/>
<rect x="79" y="537" width="4" height="5" fill="#e5ff1a"/>
<rect x="83" y="537" width="4" height="5" fill="#fff000"/>
<rect x="87" y="537" width="7" height="5" fill="#e5ff1a"/>
<rect x="94" y="537" width="12" height="5" fill="#fff000"/>
<rect x="106" y="537" width="7" height="5" fill="#e5ff1a"/>
<rect x="113" y="537" width="4" height="5" fill="#b3ff4c"/>
<rect x="117" y="537" width="4" height="5" fill="#75ff8a"/>
<rect x="68" y="542" width="3" height="5" fill="#75ff8a"/>
<rect x="71" y="542" width="5" height="5" fill="#b3ff4c"/>
<rect x="76" y="542" width="3" height="5" fill="#e5ff1a"/>
<rect x="79" y="542" width="12" height="5" fill="#fff000"/>
<rect x="91" y="542" width="7" height="5" fill="#e5ff1a"/>
<rect x="98" y="542" width="11" height="5" fill="#fff000"/>
<rect x="109" y="542" width="4" height="5" fill="#e5ff1a"/>
<rect x="113" y="542" width="4" height="5" fill="#b3ff4c"/>
<rect x="117" y="542" width="4" height="5" fill="#75ff8a"/>
<rect x="68" y="547" width="3" height="5" fill="#b3ff4c"/>
<rect x="71" y="547" width="5" height="5" fill="#e5ff1a"/>
<rect x="76" y="547" width="15" height="5" fill="#fff000"/>
<rect x="91" y="547" width="7" height="5" fill="#e5ff1a"/>
<rect x="98" y="547" width="11" height="5" fill="#fff000"/>
<rect x="109" y="547" width="8" height="5" fill="#e5ff1a"/>
<rect x="117" y="547" width="4" height="5" fill="#b3ff4c"/>
<rect x="121" y="547" width="3" height="5" fill="#75ff8a"/>
<rect x="64" y="552" width="4" height="5" fill="#75ff8a"/>
<rect x="68" y="552" width="3" height="5" fill="#b3ff4c"/>
<rect x="71" y="552" width="5" height="5" fill="#e5ff1a"/>
<rect x="76" y="552" width="37" height="5" fill="#fff000"/>
<rect x="113" y="552" width="4" height="5" fill="#e5ff1a"/>
<rect x="117" y="552" width="4" height="5" fill="#b3ff4c"/>
<rect x="121" y="552" width="3" height="5" fill="#75ff8a"/>
<rect x="68" y="557" width="3" height="5" fill="#00f5ff"/>
<rect x="71" y="557" width="5" height="5" fill="#e5ff1a"/>
<rect x="76" y="557" width="37" height="5" fill="#fff000"/>
<rect x="113" y="557" width="4" height="5" fill="#e5ff1a"/>
<rect x="117" y="557" width="4" height="5" fill="#b3ff4c"/>
<rect x="121" y="557" width="3" height="5" fill="#75ff8a"/>
<rect x="71" y="562" width="5" height="5" fill="#b3ff4c"/>
<rect x="76" y="562" width="3" height="5" fill="#e5ff1a"/>
<rect x="79" y="562" width="34" height="5" fill="#fff000"/>
<rect x="113" y="562" width="4" height="5" fill="#e5ff1a"/>
<rect x="117" y="562" width="4" height="5" fill="#b3ff4c"/>
<rect x="121" y="562" width="3" height="5" fill="#00f5ff"/>
<rect x="71" y="567" width="5" height="5" fill="#b3ff4c"/>
<rect x="76" y="567" width="3" height="5" fill="#e5ff1a"/>
<rect x="79" y="567" width="4" height="5" fill="#fff000"/>
<rect x="83" y="567" width="8" height="5" fill="#ffdb00"/>
<rect x="91" y="567" width="22" height="5" fill="#fff000"/>
<rect x="113" y="567" width="4" height="5" fill="#e5ff1a"/>
<rect x="117" y="567" width="4" height="5" fill="#75ff8a"/>
<rect x="76" y="572" width="3" height="5" fill="#b3ff4c"/>
<rect x="79" y="572" width="4" height="5" fill="#fff000"/>
<rect x="83" y="572" width="8" height="5" fill="#ffdb00"/>
<rect x="91" y="572" width="3" height="5" fill="#fff000"/>
<rect x="94" y="572" width="4" height="5" fill="#ffdb00"/>
<rect x="98" y="572" width="11" height="5" fill="#fff000"/>
<rect x="109" y="572" width="4" height="5" fill="#e5ff1a"/>
<rect x="113" y="572" width="4" height="5" fill="#b3ff4c"/>
<rect x="76" y="577" width="3" height="5" fill="#00f5ff"/>
<rect x="79" y="577" width="4" height="5" fill="#e5ff1a"/>
<rect x="83" y="577" width="19" height="5" fill="#fff000"/>
<rect x="102" y="577" width="7" height="5" fill="#e5ff1a"/>
<rect x="109" y="577" width="4" height="5" fill="#b3ff4c"/>
<rect x="113" y="577" width="4" height="5" fill="#38ffc7"/>
<rect x="87" y="582" width="4" height="6" fill="#38ffc7"/>
<rect x="91" y="582" width="3" height="6" fill="#75ff8a"/>
<rect x="94" y="582" width="4" height="6" fill="#b3ff4c"/>
<rect x="98" y="582" width="4" height="6" fill="#75ff8a"/>
<rect x="102" y="582" width="4" height="6" fill="#38ffc7"/>
<rect x="106" y="582" width="3" height="6" fill="#00f5ff"/>
<rect x="143" y="526" width="11" height="6" fill="#b3ff4c"/>
<rect x="154" y="526" width="4" height="6" fill="#75ff8a"/>
<rect x="158" y="526" width="4" height="6" fill="#b3ff4c"/>
<rect x="136" y="532" width="3" height="5" fill="#38ffc7"/>
<rect x="139" y="532" width="4" height="5" fill="#b3ff4c"/>
<rect x="143" y="532" width="23" height="5" fill="#e5ff1a"/>
<rect x="166" y="532" width="3" height="5" fill="#b3ff4c"/>
<rect x="169" y="532" width="4" height="5" fill="#75ff8a"/>
<rect x="131" y="537" width="5" height="5" fill="#75ff8a"/>
<rect x="136" y="537" width="3" height="5" fill="#b3ff4c"/>
<rect x="139" y="537" width="4" height="5" fill="#e5ff1a"/>
<rect x="143" y="537" width="8" height="5" fill="#fff000"/>
<rect x="151" y="537" width="7" height="5" fill="#e5ff1a"/>
<rect x="158" y="537" width="8" height="5" fill="#fff000"/>
<rect x="166" y="537" width="3" height="5" fill="#e5ff1a"/>
<rect x="169" y="537" width="4" height="5" fill="#b3ff4c"/>
<rect x="173" y="537" width="4" height="5" fill="#38ffc7"/>
<rect x="128" y="542" width="3" height="5" fill="#75ff8a"/>
<rect x="131" y="542" width="5" height="5" fill="#b3ff4c"/>
<rect x="136" y="542" width="3" height="5" fill="#e5ff1a"/>
<rect x="139" y="542" width="15" height="5" fill="#fff000"/>
<rect x="154" y="542" width="4" height="5" fill="#e5ff1a"/>
<rect x="158" y="542" width="11" height="5" fill="#fff000"/>
<rect x="169" y="542" width="4" height="5" fill="#e5ff1a"/>
<rect x="173" y="542" width="4" height="5" fill="#b3ff4c"/>
<rect x="177" y="542" width="4" height="5" fill="#75ff8a"/>
<rect x="124" y="547" width="4" height="5" fill="#38ffc7"/>
<rect x="131" y="547" width="5" height="5" fill="#e5ff1a"/>
<rect x="136" y="547" width="37" height="5" fill="#fff000"/>
<rect x="173" y="547" width="4" height="5" fill="#e5ff1a"/>
<rect x="177" y="547" width="4" height="5" fill="#b3ff4c"/>
<rect x="181" y="547" width="3" height="5" fill="#75ff8a"/>
<rect x="124" y="552" width="4" height="5" fill="#00f5ff"/>
<rect x="128" y="552" width="3" height="5" fill="#75ff8a"/>
<rect x="131" y="552" width="5" height="5" fill="#e5ff1a"/>
<rect x="136" y="552" width="37" height="5" fill="#fff000"/>
<rect x="173" y="552" width="4" height="5" fill="#e5ff1a"/>
<rect x="177" y="552" width="4" height="5" fill="#b3ff4c"/>
<rect x="181" y="552" width="3" height="5" fill="#00f5ff"/>
<rect x="128" y="557" width="3" height="5" fill="#b3ff4c"/>
<rect x="131" y="557" width="5" height="5" fill="#e5ff1a"/>
<rect x="136" y="557" width="37" height="5" fill="#fff000"/>
<rect x="173" y="557" width="8" height="5" fill="#e5ff1a"/>
<rect x="181" y="557" width="3" height="5" fill="#b3ff4c"/>
<rect x="124" y="562" width="4" height="5" fill="#38ffc7"/>
<rect x="128" y="562" width="3" height="5" fill="#b3ff4c"/>
<rect x="131" y="562" width="5" height="5" fill="#e5ff1a"/>
<rect x="136" y="562" width="37" height="5" fill="#fff000"/>
<rect x="173" y="562" width="8" height="5" fill="#e5ff1a"/>
<rect x="181" y="562" width="3" height="5" fill="#b3ff4c"/>
<rect x="131" y="567" width="5" height="5" fill="#b3ff4c"/>
<rect x="136" y="567" width="3" height="5" fill="#e5ff1a"/>
<rect x="139" y="567" width="34" height="5" fill="#fff000"/>
<rect x="173" y="567" width="4" height="5" fill="#e5ff1a"/>
<rect x="177" y="567" width="4" height="5" fill="#b3ff4c"/>
<rect x="131" y="572" width="5" height="5" fill="#75ff8a"/>
<rect x="136" y="572" width="3" height="5" fill="#e5ff1a"/>
<rect x="139" y="572" width="8" height="5" fill="#fff000"/>
<rect x="147" y="572" width="4" height="5" fill="#ffdb00"/>
<rect x="151" y="572" width="7" height="5" fill="#fff000"/>
<rect x="158" y="572" width="4" height="5" fill="#ffdb00"/>
<rect x="162" y="572" width="7" height="5" fill="#fff000"/>
<rect x="169" y="572" width="4" height="5" fill="#e5ff1a"/>
<rect x="173" y="572" width="4" height="5" fill="#b3ff4c"/>
<rect x="177" y="572" width="4" height="5" fill="#00f5ff"/>
<rect x="131" y="577" width="5" height="5" fill="#00f5ff"/>
<rect x="136" y="577" width="3" height="5" fill="#75ff8a"/>
<rect x="139" y="577" width="4" height="5" fill="#e5ff1a"/>
<rect x="143" y="577" width="23" height="5" fill="#fff000"/>
<rect x="166" y="577" width="3" height="5" fill="#e5ff1a"/>
<rect x="169" y="577" width="4" height="5" fill="#b3ff4c"/>
<rect x="173" y="577" width="4" height="5" fill="#38ffc7"/>
<rect x="139" y="582" width="4" height="6" fill="#00f5ff"/>
<rect x="143" y="582" width="4" height="6" fill="#38ffc7"/>
<rect x="147" y="582" width="4" height="6" fill="#75ff8a"/>
<rect x="151" y="582" width="7" height="6" fill="#b3ff4c"/>
<rect x="158" y="582" width="4" height="6" fill="#75ff8a"/>
<rect x="162" y="582" width="4" height="6" fill="#38ffc7"/>
<rect x="199" y="526" width="4" height="6" fill="#e5ff1a"/>
<rect x="203" y="526" width="8" height="6" fill="#b3ff4c"/>
<rect x="211" y="526" width="3" height="6" fill="#38ffc7"/>
<rect x="214" y="526" width="4" height="6" fill="#b3ff4c"/>
<rect x="218" y="526" width="4" height="6" fill="#75ff8a"/>
<rect x="222" y="526" width="4" height="6" fill="#38ffc7"/>
<rect x="196" y="532" width="3" height="5" fill="#38ffc7"/>
<rect x="199" y="532" width="4" height="5" fill="#b3ff4c"/>
<rect x="203" y="532" width="4" height="5" fill="#ffdb00"/>
<rect x="207" y="532" width="19" height="5" fill="#e5ff1a"/>
<rect x="226" y="532" width="3" height="5" fill="#b3ff4c"/>
<rect x="229" y="532" width="4" height="5" fill="#75ff8a"/>
<rect x="188" y="537" width="3" height="5" fill="#38ffc7"/>
<rect x="191" y="537" width="5" height="5" fill="#75ff8a"/>
<rect x="196" y="537" width="3" height="5" fill="#b3ff4c"/>
<rect x="199" y="537" width="4" height="5" fill="#e5ff1a"/>
<rect x="203" y="537" width="8" height="5" fill="#fff000"/>
<rect x="211" y="537" width="7" height="5" fill="#e5ff1a"/>
<rect x="218" y="537" width="8" height="5" fill="#fff000"/>
<rect x="226" y="537" width="7" height="5" fill="#e5ff1a"/>
<rect x="233" y="537" width="4" height="5" fill="#b3ff4c"/>
<rect x="237" y="537" width="4" height="5" fill="#75ff8a"/>
<rect x="188" y="542" width="3" height="5" fill="#75ff8a"/>
<rect x="191" y="542" width="5" height="5" fill="#b3ff4c"/>
<rect x="196" y="542" width="3" height="5" fill="#e5ff1a"/>
<rect x="199" y="542" width="15" height="5" fill="#fff000"/>
<rect x="214" y="542" width="4" height="5" fill="#e5ff1a"/>
<rect x="218" y="542" width="11" height="5" fill="#fff000"/>
<rect x="229" y="542" width="8" height="5" fill="#e5ff1a"/>
<rect x="237" y="542" width="4" height="5" fill="#b3ff4c"/>
<rect x="241" y="542" width="3" height="5" fill="#75ff8a"/>
<rect x="184" y="547" width="4" height="5" fill="#38ffc7"/>
<rect x="188" y="547" width="3" height="5" fill="#b3ff4c"/>
<rect x="191" y="547" width="5" height="5" fill="#e5ff1a"/>
<rect x="196" y="547" width="37" height="5" fill="#fff000"/>
<rect x="233" y="547" width="4" height="5" fill="#e5ff1a"/>
<rect x="237" y="547" width="4" height="5" fill="#b3ff4c"/>
<rect x="241" y="547" width="3" height="5" fill="#75ff8a"/>
<rect x="184" y="552" width="4" height="5" fill="#75ff8a"/>
<rect x="188" y="552" width="3" height="5" fill="#b3ff4c"/>
<rect x="191" y="552" width="5" height="5" fill="#e5ff1a"/>
<rect x="196" y="552" width="37" height="5" fill="#fff000"/>
<rect x="233" y="552" width="8" height="5" fill="#e5ff1a"/>
<rect x="241" y="552" width="3" height="5" fill="#b3ff4c"/>
<rect x="184" y="557" width="4" height="5" fill="#75ff8a"/>
<rect x="188" y="557" width="3" height="5" fill="#b3ff4c"/>
<rect x="191" y="557" width="5" height="5" fill="#e5ff1a"/>
<rect x="196" y="557" width="37" height="5" fill="#fff000"/>
<rect x="233" y="557" width="8" height="5" fill="#e5ff1a"/>
<rect x="241" y="557" width="3" height="5" fill="#b3ff4c"/>
<rect x="188" y="562" width="3" height="5" fill="#b3ff4c"/>
<rect x="191" y="562" width="5" height="5" fill="#e5ff1a"/>
<rect x="196" y="562" width="37" height="5" fill="#fff000"/>
<rect x="233" y="562" width="8" height="5" fill="#e5ff1a"/>
<rect x="241" y="562" width="3" height="5" fill="#b3ff4c"/>
<rect x="188" y="567" width="3" height="5" fill="#75ff8a"/>
<rect x="191" y="567" width="5" height="5" fill="#b3ff4c"/>
<rect x="196" y="567" width="3" height="5" fill="#e5ff1a"/>
<rect x="199" y="567" width="4" height="5" fill="#fff000"/>
<rect x="203" y="567" width="8" height="5" fill="#ffdb00"/>
<rect x="211" y="567" width="22" height="5" fill="#fff000"/>
<rect x="233" y="567" width="4" height="5" fill="#e5ff1a"/>
<rect x="237" y="567" width="4" height="5" fill="#b3ff4c"/>
<rect x="188" y="572" width="3" height="5" fill="#00f5ff"/>
<rect x="191" y="572" width="5" height="5" fill="#75ff8a"/>
<rect x="196" y="572" width="3" height="5" fill="#e5ff1a"/>
<rect x="199" y="572" width="4" height="5" fill="#fff000"/>
<rect x="203" y="572" width="8" height="5" fill="#ffdb00"/>
<rect x="211" y="572" width="18" height="5" fill="#fff000"/>
<rect x="229" y="572" width="4" height="5" fill="#e5ff1a"/>
<rect x="233" y="572" width="4" height="5" fill="#b3ff4c"/>
<rect x="237" y="572" width="4" height="5" fill="#75ff8a"/>
<rect x="196" y="577" width="3" height="5" fill="#38ffc7"/>
<rect x="199" y="577" width="4" height="5" fill="#e5ff1a"/>
<rect x="203" y="577" width="19" height="5" fill="#fff000"/>
<rect x="222" y="577" width="7" height="5" fill="#e5ff1a"/>
<rect x="229" y="577" width="4" height="5" fill="#b3ff4c"/>
<rect x="233" y="577" width="4" height="5" fill="#38ffc7"/>
<rect x="207" y="582" width="4" height="6" fill="#38ffc7"/>
<rect x="211" y="582" width="3" height="6" fill="#75ff8a"/>
<rect x="214" y="582" width="4" height="6" fill="#b3ff4c"/>
<rect x="218" y="582" width="4" height="6" fill="#38ffc7"/>
<rect x="222" y="582" width="4" height="6" fill="#00f5ff"/>
<rect x="267" y="526" width="7" height="6" fill="#b3ff4c"/>
<rect x="274" y="526" width="4" height="6" fill="#75ff8a"/>
<rect x="278" y="526" width="4" height="6" fill="#b3ff4c"/>
<rect x="289" y="526" width="4" height="6" fill="#38ffc7"/>
<rect x="251" y="532" width="5" height="5" fill="#00f5ff"/>
<rect x="256" y="532" width="3" height="5" fill="#75ff8a"/>
<rect x="259" y="532" width="4" height="5" fill="#b3ff4c"/>
<rect x="263" y="532" width="11" height="5" fill="#e5ff1a"/>
<rect x="274" y="532" width="4" height="5" fill="#b3ff4c"/>
<rect x="278" y="532" width="4" height="5" fill="#fff000"/>
<rect x="282" y="532" width="7" height="5" fill="#e5ff1a"/>
<rect x="289" y="532" width="4" height="5" fill="#b3ff4c"/>
<rect x="293" y="532" width="4" height="5" fill="#38ffc7"/>
<rect x="251" y="537" width="5" height="5" fill="#75ff8a"/>
<rect x="256" y="537" width="3" height="5" fill="#b3ff4c"/>
<rect x="259" y="537" width="34" height="5" fill="#e5ff1a"/>
<rect x="293" y="537" width="4" height="5" fill="#b3ff4c"/>
<rect x="297" y="537" width="4" height="5" fill="#75ff8a"/>
<rect x="248" y="542" width="3" height="5" fill="#75ff8a"/>
<rect x="251" y="542" width="5" height="5" fill="#b3ff4c"/>
<rect x="256" y="542" width="11" height="5" fill="#e5ff1a"/>
<rect x="267" y="542" width="4" height="5" fill="#fff000"/>
<rect x="271" y="542" width="22" height="5" fill="#e5ff1a"/>
<rect x="293" y="542" width="4" height="5" fill="#b3ff4c"/>
<rect x="297" y="542" width="4" height="5" fill="#75ff8a"/>
<rect x="248" y="547" width="3" height="5" fill="#75ff8a"/>
<rect x="251" y="547" width="5" height="5" fill="#b3ff4c"/>
<rect x="256" y="547" width="7" height="5" fill="#e5ff1a"/>
<rect x="263" y="547" width="8" height="5" fill="#fff000"/>
<rect x="271" y="547" width="26" height="5" fill="#e5ff1a"/>
<rect x="297" y="547" width="4" height="5" fill="#b3ff4c"/>
<rect x="301" y="547" width="3" height="5" fill="#75ff8a"/>
<rect x="248" y="552" width="3" height="5" fill="#75ff8a"/>
<rect x="251" y="552" width="5" height="5" fill="#b3ff4c"/>
<rect x="256" y="552" width="3" height="5" fill="#e5ff1a"/>
<rect x="259" y="552" width="12" height="5" fill="#fff000"/>
<rect x="271" y="552" width="26" height="5" fill="#e5ff1a"/>
<rect x="297" y="552" width="4" height="5" fill="#b3ff4c"/>
<rect x="301" y="552" width="3" height="5" fill="#75ff8a"/>
<rect x="248" y="557" width="3" height="5" fill="#75ff8a"/>
<rect x="251" y="557" width="5" height="5" fill="#b3ff4c"/>
<rect x="256" y="557" width="3" height="5" fill="#e5ff1a"/>
<rect x="259" y="557" width="15" height="5" fill="#fff000"/>
<rect x="274" y="557" width="23" height="5" fill="#e5ff1a"/>
<rect x="297" y="557" width="4" height="5" fill="#b3ff4c"/>
<rect x="301" y="557" width="3" height="5" fill="#00f5ff"/>
<rect x="248" y="562" width="3" height="5" fill="#75ff8a"/>
<rect x="251" y="562" width="5" height="5" fill="#b3ff4c"/>
<rect x="256" y="562" width="3" height="5" fill="#e5ff1a"/>
<rect x="259" y="562" width="19" height="5" fill="#fff000"/>
<rect x="278" y="562" width="8" height="5" fill="#e5ff1a"/>
<rect x="286" y="562" width="7" height="5" fill="#fff000"/>
<rect x="293" y="562" width="4" height="5" fill="#e5ff1a"/>
<rect x="297" y="562" width="4" height="5" fill="#b3ff4c"/>
<rect x="248" y="567" width="3" height="5" fill="#75ff8a"/>
<rect x="251" y="567" width="5" height="5" fill="#b3ff4c"/>
<rect x="256" y="567" width="3" height="5" fill="#e5ff1a"/>
<rect x="259" y="567" width="23" height="5" fill="#fff000"/>
<rect x="282" y="567" width="4" height="5" fill="#e5ff1a"/>
<rect x="286" y="567" width="7" height="5" fill="#fff000"/>
<rect x="293" y="567" width="4" height="5" fill="#e5ff1a"/>
<rect x="297" y="567" width="4" height="5" fill="#b3ff4c"/>
<rect x="248" y="572" width="3" height="5" fill="#00f5ff"/>
<rect x="251" y="572" width="5" height="5" fill="#75ff8a"/>
<rect x="256" y="572" width="3" height="5" fill="#e5ff1a"/>
<rect x="259" y="572" width="27" height="5" fill="#fff000"/>
<rect x="286" y="572" width="7" height="5" fill="#e5ff1a"/>
<rect x="293" y="572" width="4" height="5" fill="#b3ff4c"/>
<rect x="297" y="572" width="4" height="5" fill="#75ff8a"/>
<rect x="259" y="577" width="4" height="5" fill="#e5ff1a"/>
<rect x="263" y="577" width="19" height="5" fill="#fff000"/>
<rect x="282" y="577" width="7" height="5" fill="#e5ff1a"/>
<rect x="289" y="577" width="4" height="5" fill="#b3ff4c"/>
<rect x="293" y="577" width="4" height="5" fill="#38ffc7"/>
<rect x="267" y="582" width="4" height="6" fill="#38ffc7"/>
<rect x="271" y="582" width="3" height="6" fill="#75ff8a"/>
<rect x="274" y="582" width="4" height="6" fill="#b3ff4c"/>
<rect x="278" y="582" width="4" height="6" fill="#e5ff1a"/>
<rect x="286" y="582" width="7" height="6" fill="#38ffc7"/>
<rect x="327" y="526" width="7" height="6" fill="#38ffc7"/>
<rect x="338" y="526" width="8" height="6" fill="#38ffc7"/>
<rect x="349" y="526" width="4" height="6" fill="#b3ff4c"/>
<rect x="316" y="532" width="3" height="5" fill="#38ffc7"/>
<rect x="323" y="532" width="4" height="5" fill="#75ff8a"/>
<rect x="327" y="532" width="26" height="5" fill="#b3ff4c"/>
<rect x="353" y="532" width="4" height="5" fill="#75ff8a"/>
<rect x="311" y="537" width="5" height="5" fill="#75ff8a"/>
<rect x="316" y="537" width="3" height="5" fill="#00f5ff"/>
<rect x="319" y="537" width="8" height="5" fill="#b3ff4c"/>
<rect x="327" y="537" width="22" height="5" fill="#e5ff1a"/>
<rect x="349" y="537" width="8" height="5" fill="#b3ff4c"/>
<rect x="357" y="537" width="4" height="5" fill="#75ff8a"/>
<rect x="308" y="542" width="3" height="5" fill="#75ff8a"/>
<rect x="311" y="542" width="12" height="5" fill="#b3ff4c"/>
<rect x="323" y="542" width="19" height="5" fill="#e5ff1a"/>
<rect x="342" y="542" width="4" height="5" fill="#fff000"/>
<rect x="346" y="542" width="7" height="5" fill="#e5ff1a"/>
<rect x="353" y="542" width="4" height="5" fill="#b3ff4c"/>
<rect x="357" y="542" width="4" height="5" fill="#75ff8a"/>
<rect x="308" y="547" width="3" height="5" fill="#75ff8a"/>
<rect x="311" y="547" width="5" height="5" fill="#b3ff4c"/>
<rect x="316" y="547" width="41" height="5" fill="#e5ff1a"/>
<rect x="357" y="547" width="4" height="5" fill="#b3ff4c"/>
<rect x="361" y="547" width="3" height="5" fill="#75ff8a"/>
<rect x="304" y="552" width="4" height="5" fill="#38ffc7"/>
<rect x="308" y="552" width="3" height="5" fill="#75ff8a"/>
<rect x="311" y="552" width="5" height="5" fill="#b3ff4c"/>
<rect x="316" y="552" width="41" height="5" fill="#e5ff1a"/>
<rect x="357" y="552" width="4" height="5" fill="#b3ff4c"/>
<rect x="361" y="552" width="3" height="5" fill="#75ff8a"/>
<rect x="304" y="557" width="4" height="5" fill="#38ffc7"/>
<rect x="308" y="557" width="3" height="5" fill="#75ff8a"/>
<rect x="311" y="557" width="5" height="5" fill="#b3ff4c"/>
<rect x="316" y="557" width="41" height="5" fill="#e5ff1a"/>
<rect x="357" y="557" width="4" height="5" fill="#b3ff4c"/>
<rect x="361" y="557" width="3" height="5" fill="#75ff8a"/>
<rect x="308" y="562" width="3" height="5" fill="#75ff8a"/>
<rect x="311" y="562" width="5" height="5" fill="#b3ff4c"/>
<rect x="316" y="562" width="41" height="5" fill="#e5ff1a"/>
<rect x="357" y="562" width="4" height="5" fill="#b3ff4c"/>
<rect x="308" y="567" width="3" height="5" fill="#38ffc7"/>
<rect x="311" y="567" width="5" height="5" fill="#b3ff4c"/>
<rect x="316" y="567" width="11" height="5" fill="#e5ff1a"/>
<rect x="327" y="567" width="7" height="5" fill="#fff000"/>
<rect x="334" y="567" width="19" height="5" fill="#e5ff1a"/>
<rect x="353" y="567" width="4" height="5" fill="#b3ff4c"/>
<rect x="357" y="567" width="4" height="5" fill="#75ff8a"/>
<rect x="311" y="572" width="5" height="5" fill="#75ff8a"/>
<rect x="316" y="572" width="3" height="5" fill="#b3ff4c"/>
<rect x="319" y="572" width="8" height="5" fill="#e5ff1a"/>
<rect x="327" y="572" width="7" height="5" fill="#fff000"/>
<rect x="334" y="572" width="15" height="5" fill="#e5ff1a"/>
<rect x="349" y="572" width="4" height="5" fill="#b3ff4c"/>
<rect x="353" y="572" width="4" height="5" fill="#75ff8a"/>
<rect x="316" y="577" width="7" height="5" fill="#00f5ff"/>
<rect x="323" y="577" width="26" height="5" fill="#e5ff1a"/>
<rect x="349" y="577" width="4" height="5" fill="#b3ff4c"/>
<rect x="353" y="577" width="4" height="5" fill="#38ffc7"/>
<rect x="323" y="582" width="4" height="6" fill="#38ffc7"/>
<rect x="327" y="582" width="4" height="6" fill="#75ff8a"/>
<rect x="331" y="582" width="7" height="6" fill="#b3ff4c"/>
<rect x="338" y="582" width="4" height="6" fill="#75ff8a"/>
<rect x="342" y="582" width="4" height="6" fill="#38ffc7"/>
<rect x="376" y="526" width="3" height="6" fill="#38ffc7"/>
<rect x="387" y="526" width="7" height="6" fill="#38ffc7"/>
<rect x="394" y="526" width="12" height="6" fill="#75ff8a"/>
<rect x="406" y="526" width="3" height="6" fill="#38ffc7"/>
<rect x="376" y="532" width="3" height="5" fill="#75ff8a"/>
<rect x="379" y="532" width="30" height="5" fill="#b3ff4c"/>
<rect x="409" y="532" width="4" height="5" fill="#75ff8a"/>
<rect x="368" y="537" width="3" height="5" fill="#38ffc7"/>
<rect x="371" y="537" width="5" height="5" fill="#75ff8a"/>
<rect x="376" y="537" width="7" height="5" fill="#b3ff4c"/>
<rect x="383" y="537" width="23" height="5" fill="#e5ff1a"/>
<rect x="406" y="537" width="11" height="5" fill="#b3ff4c"/>
<rect x="417" y="537" width="4" height="5" fill="#75ff8a"/>
<rect x="371" y="542" width="5" height="5" fill="#75ff8a"/>
<rect x="376" y="542" width="3" height="5" fill="#b3ff4c"/>
<rect x="379" y="542" width="12" height="5" fill="#e5ff1a"/>
<rect x="391" y="542" width="3" height="5" fill="#fff000"/>
<rect x="394" y="542" width="19" height="5" fill="#e5ff1a"/>
<rect x="413" y="542" width="8" height="5" fill="#b3ff4c"/>
<rect x="421" y="542" width="3" height="5" fill="#75ff8a"/>
<rect x="368" y="547" width="3" height="5" fill="#75ff8a"/>
<rect x="371" y="547" width="5" height="5" fill="#b3ff4c"/>
<rect x="376" y="547" width="11" height="5" fill="#e5ff1a"/>
<rect x="387" y="547" width="7" height="5" fill="#fff000"/>
<rect x="394" y="547" width="23" height="5" fill="#e5ff1a"/>
<rect x="417" y="547" width="4" height="5" fill="#b3ff4c"/>
<rect x="421" y="547" width="3" height="5" fill="#00f5ff"/>
<rect x="368" y="552" width="3" height="5" fill="#75ff8a"/>
<rect x="371" y="552" width="5" height="5" fill="#b3ff4c"/>
<rect x="376" y="552" width="7" height="5" fill="#e5ff1a"/>
<rect x="383" y="552" width="11" height="5" fill="#fff000"/>
<rect x="394" y="552" width="23" height="5" fill="#e5ff1a"/>
<rect x="417" y="552" width="4" height="5" fill="#b3ff4c"/>
<rect x="421" y="552" width="3" height="5" fill="#75ff8a"/>
<rect x="364" y="557" width="4" height="5" fill="#00f5ff"/>
<rect x="368" y="557" width="3" height="5" fill="#75ff8a"/>
<rect x="371" y="557" width="5" height="5" fill="#b3ff4c"/>
<rect x="376" y="557" width="7" height="5" fill="#e5ff1a"/>
<rect x="383" y="557" width="11" height="5" fill="#fff000"/>
<rect x="394" y="557" width="23" height="5" fill="#e5ff1a"/>
<rect x="417" y="557" width="4" height="5" fill="#b3ff4c"/>
<rect x="421" y="557" width="3" height="5" fill="#75ff8a"/>
<rect x="368" y="562" width="3" height="5" fill="#75ff8a"/>
<rect x="371" y="562" width="5" height="5" fill="#b3ff4c"/>
<rect x="376" y="562" width="7" height="5" fill="#e5ff1a"/>
<rect x="383" y="562" width="15" height="5" fill="#fff000"/>
<rect x="398" y="562" width="19" height="5" fill="#e5ff1a"/>
<rect x="417" y="562" width="4" height="5" fill="#b3ff4c"/>
<rect x="371" y="567" width="5" height="5" fill="#b3ff4c"/>
<rect x="376" y="567" width="3" height="5" fill="#e5ff1a"/>
<rect x="379" y="567" width="19" height="5" fill="#fff000"/>
<rect x="398" y="567" width="15" height="5" fill="#e5ff1a"/>
<rect x="413" y="567" width="4" height="5" fill="#b3ff4c"/>
<rect x="417" y="567" width="4" height="5" fill="#75ff8a"/>
<rect x="376" y="572" width="3" height="5" fill="#b3ff4c"/>
<rect x="379" y="572" width="15" height="5" fill="#fff000"/>
<rect x="394" y="572" width="19" height="5" fill="#e5ff1a"/>
<rect x="413" y="572" width="4" height="5" fill="#b3ff4c"/>
<rect x="417" y="572" width="4" height="5" fill="#75ff8a"/>
<rect x="376" y="577" width="3" height="5" fill="#00f5ff"/>
<rect x="379" y="577" width="4" height="5" fill="#e5ff1a"/>
<rect x="383" y="577" width="8" height="5" fill="#fff000"/>
<rect x="391" y="577" width="18" height="5" fill="#e5ff1a"/>
<rect x="409" y="577" width="4" height="5" fill="#b3ff4c"/>
<rect x="413" y="577" width="4" height="5" fill="#38ffc7"/>
<rect x="387" y="582" width="4" height="6" fill="#00f5ff"/>
<rect x="394" y="582" width="4" height="6" fill="#00f5ff"/>
<rect x="398" y="582" width="4" height="6" fill="#75ff8a"/>
<rect x="402" y="582" width="4" height="6" fill="#b3ff4c"/>
<rect x="406" y="582" width="3" height="6" fill="#38ffc7"/>
<defs><path id="ct" d="M55 10.5h5M48 11.5h7M43 12.5h5M41 13.5h2M38 14.5h3M36 15.5h2M33 16.5h3M31 17.5h2M30 18.5h1M28 19.5h2M26 20.5h2M24 21.5h2M23 22.5h1M21 23.5h2M20 24.5h1M19 25.5h1M18 26.5h1M17 27.5h1M16 28.5h1M14 29.5h2M13 30.5h1M51 30.5h9M12 31.5h1M46 31.5h5M11 32.5h1M43 32.5h3M10 33.5h1M41 33.5h2M9 34.5h1M39 34.5h2M8 35.5h1M38 35.5h1M7 36.5h1M37 36.5h1M6 37.5h1M35 37.5h2M5 38.5h1M34 38.5h1M4 39.5h1M33 39.5h1M4 40.5h1M32 40.5h1M3 41.5h1M31 41.5h1M2 42.5h1M30 42.5h1M1 43.5h1M29 43.5h1M0 44.5h1M28 44.5h1M27 45.5h1M26 46.5h1M25 47.5h1M24 48.5h1M23 49.5h1M59 49.5h1M22 50.5h1M56 50.5h3M21 51.5h1M54 51.5h2M20 52.5h1M52 52.5h2M19 53.5h1M50 53.5h2M18 54.5h1M49 54.5h1M17 55.5h1M47 55.5h2M16 56.5h1M46 56.5h1M15 57.5h1M45 57.5h1M14 58.5h1M44 58.5h1M13 59.5h1M44 59.5h1M12 60.5h1M43 60.5h1M11 61.5h1M42 61.5h1M10 62.5h1M41 62.5h1M9 63.5h1M40 63.5h1M8 64.5h1M40 64.5h1M8 65.5h1M39 65.5h1M7 66.5h1M39 66.5h1M6 67.5h1M38 67.5h1M5 68.5h1M37 68.5h1M4 69.5h1M37 69.5h1M3 70.5h1M36 70.5h1M2 71.5h1M36 71.5h1M1 72.5h1M36 72.5h1M0 73.5h1M35 73.5h1M0 74.5h1M35 74.5h1M35 75.5h1M34 76.5h1M34 77.5h1M34 78.5h1M33 79.5h1" fill="none" stroke="#000" stroke-width="1"/></defs>
<svg x="4" y="116" width="60" height="80" viewBox="0 0 60 80"><use href="#ct"/><g fill="#000" stroke="#000" stroke-width="0.6" font-size="10.5" style="font-family:'Liberation Sans',sans-serif"><text x="24.3" y="23.0">90</text><text x="29.5" y="46.0">120</text><text x="44.0" y="61.0">150</text></g></svg>
<svg x="64" y="116" width="60" height="80" viewBox="0 0 60 80"><use href="#ct"/><g fill="#000" stroke="#000" stroke-width="0.6" font-size="10.5" style="font-family:'Liberation Sans',sans-serif"><text x="25.6" y="23.6">90</text><text x="30.2" y="45.3">120</text><text x="42.0" y="61.7">150</text></g></svg>
<svg x="124" y="116" width="60" height="80" viewBox="0 0 60 80"><use href="#ct"/><g fill="#000" stroke="#000" stroke-width="0.6" font-size="10.5" style="font-family:'Liberation Sans',sans-serif"><text x="25.6" y="23.6">90</text><text x="29.5" y="45.7">120</text><text x="42.7" y="61.7">150</text></g></svg>
<svg x="184" y="116" width="60" height="80" viewBox="0 0 60 80"><use href="#ct"/><g fill="#000" stroke="#000" stroke-width="0.6" font-size="10.5" style="font-family:'Liberation Sans',sans-serif"><text x="25.0" y="22.0">90</text><text x="28.9" y="44.0">120</text><text x="40.0" y="61.7">150</text></g></svg>
<svg x="244" y="116" width="60" height="80" viewBox="0 0 60 80"><use href="#ct"/><g fill="#000" stroke="#000" stroke-width="0.6" font-size="10.5" style="font-family:'Liberation Sans',sans-serif"><text x="25.0" y="21.4">90</text><text x="29.5" y="44.0">120</text><text x="40.0" y="61.0">150</text></g></svg>
<svg x="304" y="116" width="60" height="80" viewBox="0 0 60 80"><use href="#ct"/><g fill="#000" stroke="#000" stroke-width="0.6" font-size="10.5" style="font-family:'Liberation Sans',sans-serif"><text x="25.0" y="22.3">90</text><text x="29.5" y="44.7">120</text><text x="42.7" y="61.0">150</text></g></svg>
<svg x="364" y="116" width="60" height="80" viewBox="0 0 60 80"><use href="#ct"/><g fill="#000" stroke="#000" stroke-width="0.6" font-size="10.5" style="font-family:'Liberation Sans',sans-serif"><text x="25.0" y="22.3">90</text><text x="29.5" y="46.0">120</text><text x="44.0" y="61.0">150</text></g></svg>
<svg x="4" y="196" width="60" height="80" viewBox="0 0 60 80"><use href="#ct"/><g fill="#000" stroke="#000" stroke-width="0.6" font-size="10.5" style="font-family:'Liberation Sans',sans-serif"><text x="24.3" y="23.0">90</text><text x="29.5" y="46.0">120</text><text x="44.0" y="61.0">150</text></g></svg>
<svg x="64" y="196" width="60" height="80" viewBox="0 0 60 80"><use href="#ct"/><g fill="#000" stroke="#000" stroke-width="0.6" font-size="10.5" style="font-family:'Liberation Sans',sans-serif"><text x="25.6" y="23.6">90</text><text x="30.2" y="45.3">120</text><text x="42.0" y="61.7">150</text></g></svg>
<svg x="124" y="196" width="60" height="80" viewBox="0 0 60 80"><use href="#ct"/><g fill="#000" stroke="#000" stroke-width="0.6" font-size="10.5" style="font-family:'Liberation Sans',sans-serif"><text x="25.6" y="23.6">90</text><text x="29.5" y="45.7">120</text><text x="42.7" y="61.7">150</text></g></svg>
<svg x="184" y="196" width="60" height="80" viewBox="0 0 60 80"><use href="#ct"/><g fill="#000" stroke="#000" stroke-width="0.6" font-size="10.5" style="font-family:'Liberation Sans',sans-serif"><text x="25.0" y="22.0">90</text><text x="28.9" y="44.0">120</text><text x="40.0" y="61.7">150</text></g></svg>
<svg x="244" y="196" width="60" height="80" viewBox="0 0 60 80"><use href="#ct"/><g fill="#000" stroke="#000" stroke-width="0.6" font-size="10.5" style="font-family:'Liberation Sans',sans-serif"><text x="25.0" y="21.4">90</text><text x="29.5" y="44.0">120</text><text x="40.0" y="61.0">150</text></g></svg>
<svg x="304" y="196" width="60" height="80" viewBox="0 0 60 80"><use href="#ct"/><g fill="#000" stroke="#000" stroke-width="0.6" font-size="10.5" style="font-family:'Liberation Sans',sans-serif"><text x="25.0" y="22.3">90</text><text x="29.5" y="44.7">120</text><text x="42.7" y="61.0">150</text></g></svg>
<svg x="364" y="196" width="60" height="80" viewBox="0 0 60 80"><use href="#ct"/><g fill="#000" stroke="#000" stroke-width="0.6" font-size="10.5" style="font-family:'Liberation Sans',sans-serif"><text x="25.0" y="22.3">90</text><text x="29.5" y="46.0">120</text><text x="44.0" y="61.0">150</text></g></svg>
<svg x="4" y="276" width="60" height="80" viewBox="0 0 60 80"><use href="#ct"/><g fill="#000" stroke="#000" stroke-width="0.6" font-size="10.5" style="font-family:'Liberation Sans',sans-serif"><text x="24.3" y="23.0">90</text><text x="29.5" y="46.0">120</text><text x="44.0" y="61.0">150</text></g></svg>
<svg x="64" y="276" width="60" height="80" viewBox="0 0 60 80"><use href="#ct"/><g fill="#000" stroke="#000" stroke-width="0.6" font-size="10.5" style="font-family:'Liberation Sans',sans-serif"><text x="25.6" y="23.6">90</text><text x="30.2" y="45.3">120</text><text x="42.0" y="61.7">150</text></g></svg>
<svg x="124" y="276" width="60" height="80" viewBox="0 0 60 80"><use href="#ct"/><g fill="#000" stroke="#000" stroke-width="0.6" font-size="10.5" style="font-family:'Liberation Sans',sans-serif"><text x="25.6" y="23.6">90</text><text x="29.5" y="45.7">120</text><text x="42.7" y="61.7">150</text></g></svg>
<svg x="184" y="276" width="60" height="80" viewBox="0 0 60 80"><use href="#ct"/><g fill="#000" stroke="#000" stroke-width="0.6" font-size="10.5" style="font-family:'Liberation Sans',sans-serif"><text x="25.0" y="22.0">90</text><text x="28.9" y="44.0">120</text><text x="40.0" y="61.7">150</text><text x="52" y="71.5">1</text></g></svg>
<svg x="244" y="276" width="60" height="80" viewBox="0 0 60 80"><use href="#ct"/><g fill="#000" stroke="#000" stroke-width="0.6" font-size="10.5" style="font-family:'Liberation Sans',sans-serif"><text x="25.0" y="21.4">90</text><text x="29.5" y="44.0">120</text><text x="40.0" y="61.0">150</text><text x="52" y="71.5">1</text></g></svg>
<svg x="304" y="276" width="60" height="80" viewBox="0 0 60 80"><use href="#ct"/><g fill="#000" stroke="#000" stroke-width="0.6" font-size="10.5" style="font-family:'Liberation Sans',sans-serif"><text x="25.0" y="22.3">90</text><text x="29.5" y="44.7">120</text><text x="42.7" y="61.0">150</text></g></svg>
<svg x="364" y="276" width="60" height="80" viewBox="0 0 60 80"><use href="#ct"/><g fill="#000" stroke="#000" stroke-width="0.6" font-size="10.5" style="font-family:'Liberation Sans',sans-serif"><text x="25.0" y="22.3">90</text><text x="29.5" y="46.0">120</text><text x="44.0" y="61.0">150</text></g></svg>
<svg x="4" y="356" width="60" height="80" viewBox="0 0 60 80"><use href="#ct"/><g fill="#000" stroke="#000" stroke-width="0.6" font-size="10.5" style="font-family:'Liberation Sans',sans-serif"><text x="24.3" y="23.0">90</text><text x="29.5" y="46.0">120</text><text x="44.0" y="61.0">150</text></g></svg>
<svg x="64" y="356" width="60" height="80" viewBox="0 0 60 80"><use href="#ct"/><g fill="#000" stroke="#000" stroke-width="0.6" font-size="10.5" style="font-family:'Liberation Sans',sans-serif"><text x="25.6" y="23.6">90</text><text x="30.2" y="45.3">120</text><text x="42.0" y="61.7">150</text></g></svg>
<svg x="124" y="356" width="60" height="80" viewBox="0 0 60 80"><use href="#ct"/><g fill="#000" stroke="#000" stroke-width="0.6" font-size="10.5" style="font-family:'Liberation Sans',sans-serif"><text x="25.6" y="23.6">90</text><text x="29.5" y="45.7">120</text><text x="42.7" y="61.7">150</text></g></svg>
<svg x="184" y="356" width="60" height="80" viewBox="0 0 60 80"><use href="#ct"/><g fill="#000" stroke="#000" stroke-width="0.6" font-size="10.5" style="font-family:'Liberation Sans',sans-serif"><text x="25.0" y="22.0">90</text><text x="28.9" y="44.0">120</text><text x="40.0" y="61.7">150</text><text x="52" y="71.5">1</text></g></svg>
<svg x="244" y="356" width="60" height="80" viewBox="0 0 60 80"><use href="#ct"/><g fill="#000" stroke="#000" stroke-width="0.6" font-size="10.5" style="font-family:'Liberation Sans',sans-serif"><text x="25.0" y="21.4">90</text><text x="29.5" y="44.0">120</text><text x="40.0" y="61.0">150</text><text x="52" y="71.5">1</text></g></svg>
<svg x="304" y="356" width="60" height="80" viewBox="0 0 60 80"><use href="#ct"/><g fill="#000" stroke="#000" stroke-width="0.6" font-size="10.5" style="font-family:'Liberation Sans',sans-serif"><text x="25.0" y="22.3">90</text><text x="29.5" y="44.7">120</text><text x="42.7" y="61.0">150</text></g></svg>
<svg x="364" y="356" width="60" height="80" viewBox="0 0 60 80"><use href="#ct"/><g fill="#000" stroke="#000" stroke-width="0.6" font-size="10.5" style="font-family:'Liberation Sans',sans-serif"><text x="25.0" y="22.3">90</text><text x="29.5" y="46.0">120</text><text x="44.0" y="61.0">150</text></g></svg>
<svg x="4" y="436" width="60" height="80" viewBox="0 0 60 80"><use href="#ct"/><g fill="#000" stroke="#000" stroke-width="0.6" font-size="10.5" style="font-family:'Liberation Sans',sans-serif"><text x="24.3" y="29.5">90</text><text x="29.2" y="52.0">120</text><text x="45.6" y="65.3">150</text></g></svg>
<svg x="64" y="436" width="60" height="80" viewBox="0 0 60 80"><use href="#ct"/><g fill="#000" stroke="#000" stroke-width="0.6" font-size="10.5" style="font-family:'Liberation Sans',sans-serif"><text x="24.3" y="29.5">90</text><text x="29.2" y="52.0">120</text><text x="45.6" y="65.3">150</text></g></svg>
<svg x="124" y="436" width="60" height="80" viewBox="0 0 60 80"><use href="#ct"/><g fill="#000" stroke="#000" stroke-width="0.6" font-size="10.5" style="font-family:'Liberation Sans',sans-serif"><text x="24.3" y="29.5">90</text><text x="29.2" y="52.0">120</text><text x="45.6" y="65.3">150</text></g></svg>
<svg x="184" y="436" width="60" height="80" viewBox="0 0 60 80"><use href="#ct"/><g fill="#000" stroke="#000" stroke-width="0.6" font-size="10.5" style="font-family:'Liberation Sans',sans-serif"><text x="24.3" y="29.5">90</text><text x="29.2" y="52.0">120</text><text x="45.6" y="65.3">150</text><text x="52" y="71.5">1</text></g></svg>
<svg x="244" y="436" width="60" height="80" viewBox="0 0 60 80"><use href="#ct"/><g fill="#000" stroke="#000" stroke-width="0.6" font-size="10.5" style="font-family:'Liberation Sans',sans-serif"><text x="25.0" y="21.4">90</text><text x="29.5" y="44.0">120</text><text x="40.0" y="61.0">150</text><text x="52" y="71.5">1</text></g></svg>
<svg x="304" y="436" width="60" height="80" viewBox="0 0 60 80"><use href="#ct"/><g fill="#000" stroke="#000" stroke-width="0.6" font-size="10.5" style="font-family:'Liberation Sans',sans-serif"><text x="25.0" y="22.3">90</text><text x="29.5" y="44.7">120</text><text x="42.7" y="61.0">150</text></g></svg>
<svg x="364" y="436" width="60" height="80" viewBox="0 0 60 80"><use href="#ct"/><g fill="#000" stroke="#000" stroke-width="0.6" font-size="10.5" style="font-family:'Liberation Sans',sans-serif"><text x="25.0" y="22.3">90</text><text x="29.5" y="46.0">120</text><text x="44.0" y="61.0">150</text></g></svg>
<svg x="4" y="516" width="60" height="80" viewBox="0 0 60 80"><use href="#ct"/><g fill="#000" stroke="#000" stroke-width="0.6" font-size="10.5" style="font-family:'Liberation Sans',sans-serif"><text x="24.3" y="23.0">90</text><text x="29.5" y="46.0">120</text><text x="44.0" y="61.0">150</text></g></svg>
<svg x="64" y="516" width="60" height="80" viewBox="0 0 60 80"><use href="#ct"/><g fill="#000" stroke="#000" stroke-width="0.6" font-size="10.5" style="font-family:'Liberation Sans',sans-serif"><text x="25.6" y="23.6">90</text><text x="30.2" y="45.3">120</text><text x="42.0" y="61.7">150</text></g></svg>
<svg x="124" y="516" width="60" height="80" viewBox="0 0 60 80"><use href="#ct"/><g fill="#000" stroke="#000" stroke-width="0.6" font-size="10.5" style="font-family:'Liberation Sans',sans-serif"><text x="25.6" y="23.6">90</text><text x="29.5" y="45.7">120</text><text x="42.7" y="61.7">150</text></g></svg>
<svg x="184" y="516" width="60" height="80" viewBox="0 0 60 80"><use href="#ct"/><g fill="#000" stroke="#000" stroke-width="0.6" font-size="10.5" style="font-family:'Liberation Sans',sans-serif"><text x="25.0" y="22.0">90</text><text x="28.9" y="44.0">120</text><text x="40.0" y="61.7">150</text></g></svg>
<svg x="244" y="516" width="60" height="80" viewBox="0 0 60 80"><use href="#ct"/><g fill="#000" stroke="#000" stroke-width="0.6" font-size="10.5" style="font-family:'Liberation Sans',sans-serif"><text x="25.0" y="21.4">90</text><text x="29.5" y="44.0">120</text><text x="40.0" y="61.0">150</text></g></svg>
<svg x="304" y="516" width="60" height="80" viewBox="0 0 60 80"><use href="#ct"/><g fill="#000" stroke="#000" stroke-width="0.6" font-size="10.5" style="font-family:'Liberation Sans',sans-serif"><text x="25.0" y="22.3">90</text><text x="29.5" y="44.7">120</text><text x="42.7" y="61.0">150</text></g></svg>
<svg x="364" y="516" width="60" height="80" viewBox="0 0 60 80"><use href="#ct"/><g fill="#000" stroke="#000" stroke-width="0.6" font-size="10.5" style="font-family:'Liberation Sans',sans-serif"><text x="25.0" y="22.3">90</text><text x="29.5" y="46.0">120</text><text x="44.0" y="61.0">150</text></g></svg>
<g fill="#fff"><rect x="4" y="36" width="1" height="561"/><rect x="64" y="36" width="1" height="561"/><rect x="124" y="36" width="1" height="561"/><rect x="184" y="36" width="1" height="561"/><rect x="244" y="36" width="1" height="561"/><rect x="304" y="36" width="1" height="561"/><rect x="364" y="36" width="1" height="561"/><rect x="424" y="36" width="1" height="561"/><rect x="484" y="36" width="1" height="561"/><rect x="544" y="36" width="1" height="561"/><rect x="604" y="36" width="1" height="561"/><rect x="4" y="36" width="609" height="1"/><rect x="4" y="116" width="609" height="1"/><rect x="4" y="196" width="609" height="1"/><rect x="4" y="276" width="609" height="1"/><rect x="4" y="356" width="609" height="1"/><rect x="4" y="436" width="609" height="1"/><rect x="4" y="516" width="609" height="1"/><rect x="4" y="596" width="609" height="1"/><rect x="612" y="36" width="1" height="561"/></g>
<rect x="605" y="37" width="7" height="79" fill="url(#jet)"/><rect x="605" y="76" width="1" height="1" fill="#fff"/><rect x="611" y="76" width="1" height="1" fill="#fff"/><rect x="605" y="117" width="7" height="79" fill="url(#jet)"/><rect x="605" y="156" width="1" height="1" fill="#fff"/><rect x="611" y="156" width="1" height="1" fill="#fff"/><rect x="605" y="197" width="7" height="79" fill="url(#jet)"/><rect x="605" y="236" width="1" height="1" fill="#fff"/><rect x="611" y="236" width="1" height="1" fill="#fff"/><rect x="605" y="277" width="7" height="79" fill="url(#jet)"/><rect x="605" y="316" width="1" height="1" fill="#fff"/><rect x="611" y="316" width="1" height="1" fill="#fff"/><rect x="605" y="357" width="7" height="79" fill="url(#jet)"/><rect x="605" y="396" width="1" height="1" fill="#fff"/><rect x="611" y="396" width="1" height="1" fill="#fff"/><rect x="605" y="437" width="7" height="79" fill="url(#jet)"/><rect x="605" y="476" width="1" height="1" fill="#fff"/><rect x="611" y="476" width="1" height="1" fill="#fff"/><rect x="605" y="517" width="7" height="79" fill="url(#jet)"/><rect x="605" y="556" width="1" height="1" fill="#fff"/><rect x="611" y="556" width="1" height="1" fill="#fff"/></svg>
<div id="txt">
<div class="t " style="left:152.0px;top:4.49px;font-size:13.60px;">Cassini/MIMI</div>
<div class="t " style="left:235.2px;top:4.49px;font-size:13.60px;">Inca</div>
<div class="t " style="left:266.0px;top:4.49px;font-size:13.60px;">mTOF</div>
<div class="t " style="left:312.6px;top:4.49px;font-size:13.60px;">2005-016</div>
<div class="t " style="left:381.4px;top:4.49px;font-size:13.60px;">Stare</div>
<div class="t " style="left:425.2px;top:4.49px;font-size:13.60px;">Ions</div>
<div class="t " style="left:456.6px;top:4.49px;font-size:13.60px;">Only</div>
<div class="t " style="left:93.5px;top:20.49px;font-size:13.60px;">R</div>
<div class="t " style="left:138.0px;top:20.49px;font-size:13.60px;">10.50 Lat -3.80 LT 0144 L</div>
<div class="t " style="left:338.0px;top:20.49px;font-size:13.60px;">10.55 Lon</div>
<div class="t " style="left:439.0px;top:20.49px;font-size:13.60px;">154.84  MIMI/APL</div>
<div class="t " style="left:103.5px;top:30.99px;font-size:13.60px;">satur</div>
<div class="t " style="left:294.0px;top:30.99px;font-size:13.60px;">saturn</div>
<div class="t " style="left:399.0px;top:30.99px;font-size:13.60px;">skr-wl</div>
<div class="t " style="left:713.0px;top:5.77px;font-size:11.50px;">Log Cnts</div>
<div class="t " style="left:698.0px;top:19.27px;font-size:11.50px;">(cm<sup>2</sup>-sr-s-keV)<sup class="p">'</sup></div>
<div class="t " style="left:617.0px;top:37.03px;font-size:10.60px;">-1.340</div>
<div class="t " style="left:617.0px;top:73.03px;font-size:10.60px;">-1.831</div>
<div class="t " style="left:617.0px;top:107.03px;font-size:10.60px;">-2.322</div>
<div class="t " style="left:661.0px;top:67.77px;font-size:11.50px;">Oxygen</div>
<div class="t " style="left:661.0px;top:82.02px;font-size:11.20px;">331-589 keV</div>
<div class="t " style="left:617.0px;top:117.03px;font-size:10.60px;">-1.039</div>
<div class="t " style="left:620.5px;top:153.03px;font-size:10.60px;">1.680</div>
<div class="t " style="left:617.0px;top:187.03px;font-size:10.60px;">-2.322</div>
<div class="t " style="left:661.0px;top:147.77px;font-size:11.50px;">Oxygen</div>
<div class="t " style="left:661.0px;top:162.02px;font-size:11.20px;">231-332 keV</div>
<div class="t " style="left:617.0px;top:197.03px;font-size:10.60px;">-0.1514</div>
<div class="t " style="left:620.5px;top:233.03px;font-size:10.60px;">1.237</div>
<div class="t " style="left:617.0px;top:267.03px;font-size:10.60px;">-2.322</div>
<div class="t " style="left:661.0px;top:227.77px;font-size:11.50px;">Oxygen</div>
<div class="t " style="left:661.0px;top:242.02px;font-size:11.20px;">168-231 keV</div>
<div class="t " style="left:617.0px;top:277.03px;font-size:10.60px;">0.5954</div>
<div class="t " style="left:620.5px;top:313.03px;font-size:10.60px;">0.8632</div>
<div class="t " style="left:617.0px;top:347.03px;font-size:10.60px;">-2.322</div>
<div class="t " style="left:661.0px;top:307.77px;font-size:11.50px;">Oxygen</div>
<div class="t " style="left:661.0px;top:322.02px;font-size:11.20px;">129-169 keV</div>
<div class="t " style="left:617.0px;top:357.03px;font-size:10.60px;">1.336</div>
<div class="t " style="left:620.5px;top:393.03px;font-size:10.60px;">0.4929</div>
<div class="t " style="left:617.0px;top:427.03px;font-size:10.60px;">-2.322</div>
<div class="t " style="left:661.0px;top:387.77px;font-size:11.50px;">Oxygen</div>
<div class="t " style="left:661.0px;top:402.02px;font-size:11.20px;">89-129 keV</div>
<div class="t " style="left:617.0px;top:437.03px;font-size:10.60px;">2.155</div>
<div class="t " style="left:617.0px;top:473.03px;font-size:10.60px;">-0.08364</div>
<div class="t " style="left:617.0px;top:507.03px;font-size:10.60px;">-2.322</div>
<div class="t " style="left:661.0px;top:467.77px;font-size:11.50px;">Oxygen</div>
<div class="t " style="left:661.0px;top:482.02px;font-size:11.20px;">68-90 keV</div>
<div class="t " style="left:617.0px;top:517.03px;font-size:10.60px;">2.570</div>
<div class="t " style="left:620.5px;top:553.03px;font-size:10.60px;">0.1243</div>
<div class="t " style="left:620.5px;top:588.03px;font-size:10.60px;">2.322</div>
<div class="t " style="left:661.0px;top:547.77px;font-size:11.50px;">Oxygen</div>
<div class="t " style="left:661.0px;top:562.02px;font-size:11.20px;">46-68 keV</div>
<div class="t " style="left:701.0px;top:573.03px;font-size:10.60px;">B-field Particle Flow</div>
<div class="t " style="left:34.5px;top:599.53px;font-size:10.60px;transform:translateX(-50%);">016T23:10</div>
<div class="t " style="left:94.5px;top:599.53px;font-size:10.60px;transform:translateX(-50%);">23:18</div>
<div class="t " style="left:154.5px;top:599.53px;font-size:10.60px;transform:translateX(-50%);">23:26</div>
<div class="t " style="left:214.5px;top:599.53px;font-size:10.60px;transform:translateX(-50%);">23:34</div>
<div class="t " style="left:274.5px;top:599.53px;font-size:10.60px;transform:translateX(-50%);">23:42</div>
<div class="t " style="left:334.5px;top:599.53px;font-size:10.60px;transform:translateX(-50%);">23:50</div>
<div class="t " style="left:394.5px;top:599.53px;font-size:10.60px;transform:translateX(-50%);">23:58</div>
</div>
</body></html>
